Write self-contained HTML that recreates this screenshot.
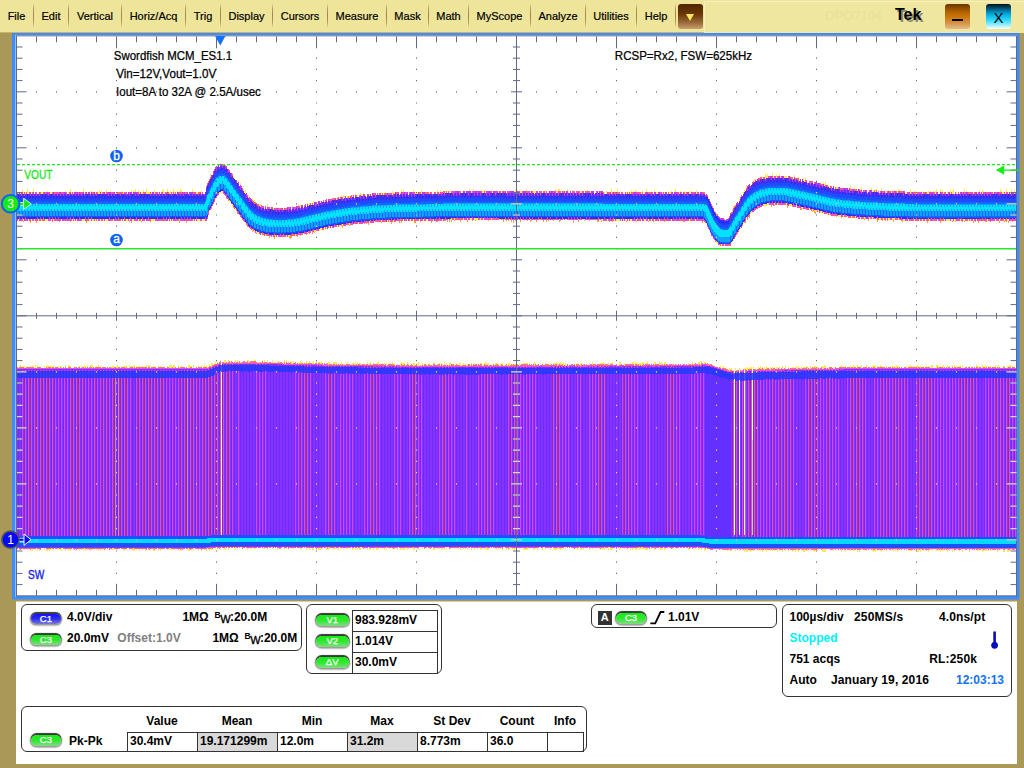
<!DOCTYPE html>
<html><head><meta charset="utf-8"><title>Tek DPO7104</title>
<style>
html,body{margin:0;padding:0}
body{width:1024px;height:768px;background:#A99858;position:relative;overflow:hidden;font-family:"Liberation Sans",sans-serif}
#menubar{position:absolute;left:0;top:0;width:1024px;height:32px;background:#EEE59B;border-bottom:1px solid #C9B36A;box-sizing:content-box}
.mi{position:absolute;top:0;height:32px;line-height:32px;font-size:11px;color:#000;text-align:center;white-space:nowrap;-webkit-text-stroke:0.2px #000}
.sep{position:absolute;top:3px;width:1px;height:25px;background:linear-gradient(#EEE59B,#B4945A 25%,#A8844A 50%,#B4945A 75%,#EEE59B)}
#ddbtn{position:absolute;left:678px;top:4px;width:25px;height:25px;border-radius:3px;background:linear-gradient(#4E2600,#6A3606 40%,#9A6A3A 75%,#C8A070)}
#ddbtn:after{content:"";position:absolute;left:8px;top:10px;border-left:4.5px solid transparent;border-right:4.5px solid transparent;border-top:7px solid #FFE860}
#right{position:absolute;left:704px;top:1px;width:320px;height:31px;background:#EFE7A0;border-left:1px solid #F6F0C0;border-top:1px solid #F6F0C0}
#dpo{position:absolute;left:825px;top:0;height:32px;line-height:32px;font-size:13px;color:#E9E098}
#tek{position:absolute;left:895px;top:0;height:30px;line-height:30px;font-size:16px;font-weight:bold;color:#000;text-shadow:2px 2px 0 #8E8A70}
#minb{position:absolute;left:945px;top:4px;width:25px;height:25px;border-radius:3px;background:linear-gradient(#6A3600,#B06000 30%,#C87408 50%,#D89850 80%,#E4BC8C)}
#minb:after{content:"";position:absolute;left:7px;top:15px;width:11px;height:2px;background:#000}
#clsb{position:absolute;left:986px;top:4px;width:25px;height:25px;border-radius:3px;background:linear-gradient(#00101C,#005C80 20%,#00A8DC 40%,#30DCFF 65%,#A0F0FF 85%,#fff);font-size:15px;line-height:27px;text-align:center;color:#000}
#plot{position:absolute;left:0;top:0}
#panel{position:absolute;left:16px;top:602px;width:1001px;height:162px;background:#fff;box-shadow:0 -0.5px 0 #fff}
.box{position:absolute;border:1px solid #333;border-radius:6px;box-sizing:border-box}
.t{position:absolute;font-size:12px;font-weight:bold;color:#000;white-space:nowrap;line-height:14px}
.pill{position:absolute;border-radius:6px;font-size:9.5px;color:#fff;-webkit-text-stroke:0.25px #fff;text-align:center;box-shadow:0 -1.7px 0.8px 0.2px #3a3a3a,0 0 1px 1.3px #999,0 1px 1.5px 1px #ccc}
.pg{background:linear-gradient(#10F010,#30E830 50%,#80DC80)}
.pb{background:linear-gradient(#1010FF,#3030F0 50%,#7878D0)}
.cell{position:absolute;border:1px solid #333;box-sizing:border-box;font-size:12px;font-weight:bold;padding-left:2px;white-space:nowrap}
</style></head><body>
<div id="menubar">
<div class="mi" style="left:0.0px;width:33.0px">File</div>
<div class="sep" style="left:33.0px"></div>
<div class="mi" style="left:34.0px;width:34.0px">Edit</div>
<div class="sep" style="left:68.0px"></div>
<div class="mi" style="left:69.0px;width:52.0px">Vertical</div>
<div class="sep" style="left:121.0px"></div>
<div class="mi" style="left:122.0px;width:63.0px">Horiz/Acq</div>
<div class="sep" style="left:185.0px"></div>
<div class="mi" style="left:186.0px;width:34.0px">Trig</div>
<div class="sep" style="left:220.0px"></div>
<div class="mi" style="left:221.0px;width:51.0px">Display</div>
<div class="sep" style="left:272.0px"></div>
<div class="mi" style="left:273.0px;width:54.0px">Cursors</div>
<div class="sep" style="left:327.0px"></div>
<div class="mi" style="left:328.0px;width:58.0px">Measure</div>
<div class="sep" style="left:386.0px"></div>
<div class="mi" style="left:387.0px;width:41.0px">Mask</div>
<div class="sep" style="left:428.0px"></div>
<div class="mi" style="left:429.0px;width:39.0px">Math</div>
<div class="sep" style="left:468.0px"></div>
<div class="mi" style="left:469.0px;width:61.0px">MyScope</div>
<div class="sep" style="left:530.0px"></div>
<div class="mi" style="left:531.0px;width:54.0px">Analyze</div>
<div class="sep" style="left:585.0px"></div>
<div class="mi" style="left:586.0px;width:50.0px">Utilities</div>
<div class="sep" style="left:636.0px"></div>
<div class="mi" style="left:637.0px;width:38.0px">Help</div>
<div class="sep" style="left:675.0px"></div>
<div id="ddbtn"></div>
<div id="right"></div>
<div id="dpo">DPO7104</div>
<div id="tek">Tek</div>
<div id="minb"></div>
<div id="clsb">X</div>
</div>
<svg id="plot" width="1024" height="768" viewBox="0 0 1024 768" font-family="Liberation Sans, sans-serif">
<rect x="12" y="33" width="1007.5" height="566.5" fill="#3E8CFF"/>
<rect x="15" y="35" width="1" height="562" fill="#8EBCFF"/>
<g shape-rendering="crispEdges">
<rect x="16" y="35" width="1001" height="561" fill="#fff"/>
<path d="M17,194h5v-4h1v4h4v-5h1v5h5v-5h1v5h13v-3h1v3h17v-3h1v3h4v-5h1v5h4v-3h1v3h7v-5h1v5h6v-3h2v3h7v-4h1v4h1v-3h1v3h4v-5h1v5h3v-3h1v3h11v-3h1v3h8v-4h1v4h1v-3h2v-2h1v5h2v-4h1v4h4v-4h1v4h2v-5h1v5h7v-4h1v4h7v-4h1v-1h1v5h3v-5h1v5h2v-3h1v3h2v-5h1v2h1v3h2v-4h1v4h1v-3h1v-2h1v1h1v4h10v-5h1v5h8v-3h1v3h3v-2h1v-4h1v-3h1v-2h1v-1h1v-8h1v3h1v-2h1v-2h1v-1h1v-2h1v-1h1v-1h1v-1h2v-4h1v3h1v-2h1v2h2v1h1v1h1v2h1v1h1v2h1v1h1v1h1v-2h1v5h1v1h1v2h1v1h1v2h1v-3h1v5h1v-3h1v6h1v1h1v2h1v1h1v-3h1v3h1v4h1v-2h1v2h1v4h1v1h1v-4h1v5h1v-3h1v5h1v1h2v1h2v-3h1v4h2v1h4v-5h1v6h8v-3h1v3h12v-3h1v3h2v-4h1v1h1v2h4v-5h1v5h1v-5h1v4h3v-1h3v-4h1v3h4v-1h1v-4h1v4h2v-1h4v-1h4v-1h2v-3h1v3h3v-1h6v-1h5v-5h1v4h1v-4h1v1h1v3h3v-1h7v-4h1v4h1v-1h3v-4h1v4h7v-1h5v-3h1v3h7v-3h1v3h2v-1h1v-3h1v3h6v-4h1v4h5v-3h1v3h2v-5h1v5h1v-5h1v5h2v-3h1v3h6v-5h1v5h4v-3h1v3h2v-5h1v4h15v-4h1v4h2v-4h1v4h3v-3h1v3h7v-3h1v3h16v-5h1v5h3v-5h1v5h7v-4h1v4h2v-4h1v4h6v-3h1v3h3v-3h1v-1h1v4h2v-3h1v3h3v-3h1v3h4v-3h1v3h4v-3h1v3h1v-4h1v-1h1v5h9v-5h1v5h6v-3h2v3h9v-3h1v-1h1v4h9v-5h1v1h1v1h1v-2h2v5h1v-3h1v3h5v-5h1v5h4v-4h1v4h14v-4h1v4h2v-3h1v3h15v-3h1v3h4v-5h1v5h2v-3h1v3h2v-5h1v5h13v-4h1v4h1v-3h1v3h1v-4h1v1h1v3h5v-3h1v3h3v-5h1v5h5v-2h1v2h1v-4h1v4h4v-3h1v3h4v-2h1v2h6v-3h1v3h2v-3h1v-2h1v5h4v-3h1v1h1v2h2v-3h1v3h4v-3h1v3h1v-3h1v3h4v-4h1v4h8v1h2v1h1v3h1v2h1v2h1v2h1v3h1v2h1v1h1v2h1v1h1v2h1v1h1v1h1v1h1v1h7v-1h1v-2h1v-1h1v-2h1v-5h1v-3h1v3h1v-2h1v-1h1v-2h1v-1h1v-2h1v-1h1v-2h1v-2h1v-2h1v-1h1v-1h1v-7h1v4h1v-1h1v-1h1v-1h1v-1h2v-1h1v-5h1v3h2v-1h2v-1h4v-1h2v-5h1v5h1v-5h1v4h4v-5h1v5h3v-3h1v3h2v-4h1v4h7v1h3v-3h1v3h1v1h2v-5h1v5h1v1h1v-3h1v-1h1v4h2v1h2v-4h1v4h1v-4h1v5h4v1h4v1h4v1h5v-4h1v5h1v-5h1v5h1v1h4v1h4v-2h1v3h8v1h6v-5h1v5h3v-4h1v5h6v-5h1v5h5v1h4v-5h1v5h4v-4h1v4h4v-5h1v5h3v-2h1v3h2v-4h1v4h5v-4h1v4h3v-4h1v-1h1v5h10v-5h1v5h3v-3h2v3h2v-2h1v2h3v-3h1v3h5v-3h1v3h1v-3h1v3h2v-3h1v3h1v-3h1v-2h1v5h3v-5h1v5h1v-4h1v4h7v-4h1v4h1v-3h1v-2h1v5h10v-5h1v5h1v-3h1v3h12v-4h1v4h2v-4h1v1h1v3h16v-5h1v2h1v3h4v-5h1v5h4v-5h1v5h2v-4h1v4h2V218h-133v-1h-19v-1h-13v-1h-10v-1h-9v-1h-4v-1h-4v-1h-4v-1h-5v-1h-4v-1h-4v-1h-4v-1h-5v-1h-5v-1h-4v-1h-5v-1h-15v1h-5v1h-4v1h-2v1h-2v1h-1v1h-1v1h-2v1h-1v1h-1v1h-1v1h-1v1h-1v2h-1v1h-1v1h-1v2h-1v2h-1v2h-1v1h-1v2h-1v1h-1v2h-1v1h-1v2h-1v2h-1v1h-1v2h-1v2h-1v2h-1v1h-1v2h-8v-1h-4v-1h-1v-1h-1v-2h-1v-1h-1v-1h-1v-2h-1v-2h-1v-2h-1v-2h-1v-2h-1v-3h-1v-2h-1v-2h-1v-2h-2v-1h-280v1h-37v1h-16v1h-11v1h-9v1h-6v1h-6v1h-6v1h-6v1h-4v1h-4v1h-4v1h-4v1h-4v1h-4v1h-7v1h-29v-1h-5v-1h-2v-1h-3v-1h-2v-1h-1v-1h-1v-1h-2v-1h-1v-1h-1v-1h-1v-2h-1v-1h-1v-1h-1v-1h-1v-2h-1v-1h-1v-2h-1v-1h-1v-1h-1v-2h-1v-1h-1v-1h-1v-2h-1v-1h-1v-2h-1v-1h-1v-1h-1v-2h-1v-1h-1v-1h-1v-2h-1v-1h-1v-2h-1v-1h-1v-1h-1v1h-2v1h-1v1h-1v1h-1v2h-1v1h-1v2h-1v2h-1v3h-1v2h-1v1h-1v2h-1v3h-1v4h-1v2h-190z" fill="#FFE64A"/>
<path d="M17,194h188v-2h1v-4h1v-3h1v-2h1v-1h1v-2h1v-3h1v-2h1v-2h1v-1h1v-2h1v-1h1v-1h1v-1h2v-1h5v1h1v1h1v2h1v1h1v2h1v1h1v1h1v2h1v1h1v1h1v2h1v1h1v2h1v1h1v1h1v2h1v1h1v1h1v2h1v1h1v2h1v1h1v1h1v1h1v2h1v1h1v1h1v1h2v1h1v1h1v1h2v1h3v1h2v1h5v1h25v-1h7v-1h4v-1h4v-1h4v-1h4v-1h4v-1h4v-1h6v-1h6v-1h6v-1h6v-1h9v-1h11v-1h16v-1h37v-1h284v1h2v1h1v3h1v2h1v2h1v2h1v3h1v2h1v1h1v2h1v1h1v2h1v1h1v1h1v1h1v1h7v-1h1v-2h1v-1h1v-2h1v-2h1v-1h1v-2h1v-2h1v-1h1v-2h1v-1h1v-2h1v-1h1v-2h1v-2h1v-2h1v-1h1v-1h1v-2h1v-1h1v-1h1v-1h1v-1h1v-1h2v-1h1v-1h1v-1h2v-1h2v-1h4v-1h5v-1h19v1h5v1h4v1h5v1h5v1h4v1h4v1h4v1h5v1h4v1h4v1h4v1h9v1h10v1h13v1h19v1h131V223h-1v-5h-3v4h-1v-4h-3v5h-1v-5h-1v4h-1v-4h-1v4h-1v-4h-4v5h-1v-5h-4v3h-1v-3h-3v4h-1v-4h-3v4h-2v-4h-6v5h-1v-2h-1v-3h-1v4h-1v-4h-1v5h-1v-5h-8v4h-1v-4h-1v4h-1v-4h-1v3h-1v-3h-3v3h-1v1h-1v-4h-2v4h-1v-4h-11v5h-1v-5h-6v3h-2v-3h-4v5h-1v-5h-7v3h-1v-3h-12v3h-1v-3h-1v3h-1v-3h-1v4h-1v-1h-1v-3h-7v4h-1v-4h-5v3h-1v-3h-1v3h-1v-3h-1v-1h-1v4h-1v-4h-4v5h-1v-5h-4v2h-1v-2h-3v4h-1v-4h-3v3h-1v-4h-12v-1h-10v3h-1v-4h-4v3h-1v-3h-3v-1h-1v3h-1v-3h-2v-1h-1v3h-1v-3h-2v-1h-4v2h-1v-3h-4v4h-1v-1h-1v-4h-1v3h-1v-4h-4v-1h-3v2h-1v-3h-2v4h-2v-4h-1v-1h-5v-1h-1v3h-1v-3h-2v-1h-2v5h-1v-5h-2v-1h-4v3h-1v-3h-5v4h-2v-4h-1v5h-1v-5h-1v1h-5v1h-4v1h-2v1h-2v1h-1v1h-1v1h-2v1h-1v1h-1v1h-1v6h-1v-4h-1v6h-1v-3h-1v6h-2v-1h-1v2h-1v1h-1v2h-1v1h-1v2h-1v1h-1v2h-1v2h-1v1h-1v2h-1v2h-1v2h-1v1h-1v2h-8v-1h-4v-1h-1v-1h-1v-2h-1v-1h-1v-1h-1v-2h-1v-2h-1v-2h-1v-2h-1v-2h-1v-3h-1v-2h-1v-2h-1v-2h-2v4h-1v-5h-5v3h-1v-3h-7v3h-1v-3h-1v3h-1v-3h-1v4h-2v-4h-4v3h-1v-3h-1v3h-1v-3h-5v3h-1v-3h-5v4h-1v-4h-3v3h-1v-3h-6v4h-1v-4h-4v4h-1v-4h-11v4h-1v-4h-2v3h-1v-3h-6v4h-1v-4h-11v3h-1v-3h-1v4h-1v-4h-2v4h-1v-4h-7v4h-1v-4h-2v4h-2v-4h-7v3h-1v-3h-4v3h-1v-3h-5v4h-1v-4h-4v5h-1v-5h-12v3h-1v1h-1v-4h-5v3h-1v-3h-4v3h-1v-3h-1v4h-1v-4h-2v4h-1v-4h-6v4h-1v-4h-4v3h-1v1h-1v-4h-2v3h-1v-3h-6v4h-1v-4h-4v3h-1v-3h-1v5h-1v-5h-1v4h-1v-4h-2v3h-1v-3h-1v3h-1v-3h-2v4h-1v-4h-2v2h-1v-2h-11v3h-1v-3h-12v3h-1v-3h-2v3h-1v-3h-3v2h-1v2h-1v-4h-6v4h-1v-4h-5v3h-1v-3h-2v4h-1v-4h-1v4h-1v-4h-1v4h-1v-4h-1v3h-1v-3h-1v3h-1v-3h-3v3h-1v-3h-1v4h-2v-1h-1v-3h-3v5h-1v-5h-5v3h-1v-3h-2v1h-2v3h-1v-3h-4v4h-2v-4h-12v4h-1v-4h-1v4h-1v-4h-7v5h-1v-5h-5v1h-4v3h-1v-3h-11v1h-1v4h-1v-4h-1v3h-1v-3h-1v3h-1v-3h-5v1h-9v4h-1v-3h-3v3h-2v-2h-1v4h-1v-4h-4v1h-6v1h-6v1h-4v1h-4v1h-3v4h-1v-3h-1v4h-1v-4h-2v4h-1v-3h-1v3h-1v1h-1v-3h-4v1h-1v3h-1v-3h-2v4h-1v-4h-2v1h-3v4h-1v1h-1v-1h-1v-4h-1v3h-1v-3h-12v5h-1v-5h-2v3h-1v-3h-1v4h-1v-4h-3v-1h-3v2h-1v-2h-1v-1h-2v-1h-2v3h-1v-4h-2v-1h-1v3h-1v-5h-2v-1h-1v-1h-1v2h-1v-5h-1v2h-1v-4h-1v-1h-1v-2h-1v-1h-1v-2h-1v-1h-1v-1h-1v2h-1v-5h-1v-1h-1v-2h-1v2h-1v-5h-1v-1h-1v-1h-1v-2h-1v2h-1v-4h-1v2h-1v-5h-1v-2h-1v-1h-1v-1h-1v1h-2v1h-1v1h-1v1h-1v2h-1v1h-1v2h-1v2h-1v3h-1v5h-1v-2h-1v2h-1v3h-1v4h-1v2h-7v3h-1v-3h-1v3h-1v-3h-5v3h-1v-3h-4v5h-1v-5h-4v3h-1v-3h-1v5h-1v-5h-24v3h-1v-3h-3v4h-1v-4h-2v3h-1v-3h-5v4h-1v-4h-9v5h-1v-5h-1v4h-1v-4h-16v3h-1v-3h-2v3h-1v-3h-22v5h-1v-5h-11v3h-1v-3h-2v3h-1v1h-1v-1h-1v-3h-2v3h-1v-3h-6v4h-1v-4h-6v4h-1v-4h-15v5h-1v-5h-2v3h-1v-3h-2v5h-1v-5h-6v4h-1v-4h-1v3h-1v-3h-4z" fill="#FF9A4A"/>
<path d="M17,194h1v-2h1v2h1v-2h1v2h2v-2h1v2h1v-2h1v2h1v-2h2v2h2v-2h1v2h6v-2h1v2h2v-2h2v2h7v-2h2v2h16v-2h1v2h2v-2h1v2h1v-2h1v2h13v-2h1v2h7v-2h1v2h2v-2h2v2h1v-2h1v2h3v-2h1v2h10v-2h1v2h6v-2h1v2h8v-2h1v2h6v-2h1v2h1v-2h2v2h3v-2h4v2h1v-2h1v2h2v-2h1v2h3v-2h1v2h4v-2h2v2h4v-2h1v2h2v-2h1v2h1v-2h1v2h21v-2h2v2h7v-2h1v-4h1v-3h1v-2h1v-1h1v-2h1v-3h1v-2h1v-2h1v-1h1v-2h1v-1h1v-4h1v2h2v-1h5v1h1v1h1v2h1v1h1v2h1v1h1v1h1v2h1v-1h1v1h1v4h1v1h1v-1h1v4h1v1h1v2h1v1h1v1h1v-1h1v2h1v4h1v1h1v1h1v1h1v2h1v1h1v1h1v1h2v1h1v1h1v1h2v1h1v-3h1v3h1v1h2v1h5v1h2v-3h1v3h2v-2h1v2h9v-2h1v2h9v-1h7v-1h4v-1h4v-3h1v-1h1v3h1v-3h1v2h1v-2h1v2h2v-1h1v-2h1v2h2v-3h1v2h3v-1h6v-1h6v-3h1v2h2v-3h1v3h2v-1h1v-2h1v2h3v-3h1v2h1v-2h1v2h2v-3h1v3h4v-3h1v2h3v-3h2v3h2v-3h1v3h2v-1h1v-2h1v2h1v-2h1v2h6v-3h1v3h2v-3h1v3h1v-3h1v2h8v-2h1v2h1v-3h1v3h5v-3h1v3h14v-3h3v3h3v-3h1v2h7v-2h1v2h9v-2h1v2h5v-3h1v3h1v-3h1v3h1v-3h2v3h11v-3h1v3h2v-3h1v3h5v-3h1v3h10v-3h2v3h1v-3h1v3h6v-3h1v3h5v-3h1v3h2v-3h1v3h12v-3h2v3h4v-3h2v3h8v-3h1v3h4v-3h1v3h9v-3h1v3h2v-3h1v3h7v-3h2v3h3v-3h1v3h3v-3h1v3h2v-3h1v3h11v-3h2v3h16v-3h1v3h5v-2h1v2h1v-2h1v2h19v-2h1v2h1v-2h1v2h1v-2h1v2h10v-2h1v2h2v-2h1v2h11v-2h2v2h4v-2h1v2h6v-2h2v2h8v-2h1v2h5v-2h1v2h3v-2h2v2h5v-2h1v2h8v1h2v2h2v4h1v2h1v3h1v2h1v2h1v2h1v1h2v3h1v1h1v1h1v1h1v1h7v-1h1v-1h1v-2h1v-2h1v-2h1v-1h1v-2h1v-2h1v-1h1v-2h1v-1h1v-4h1v1h1v-2h1v-2h1v-4h1v-2h1v-1h1v1h1v-1h1v-1h1v-1h1v-1h1v-1h2v-1h1v-1h1v-1h1v-3h1v2h2v-1h3v-3h1v2h3v-3h1v3h1v-1h5v-2h1v2h6v-2h1v2h3v-2h3v3h5v1h4v1h3v-2h1v2h1v1h3v-2h1v2h1v1h4v1h4v1h4v1h5v1h1v-3h1v3h2v1h1v-3h1v1h1v2h1v1h4v1h1v-3h2v3h6v1h4v-3h1v3h5v1h3v-3h1v3h9v1h1v-3h1v3h4v-3h1v3h1v-3h1v3h10v-2h1v3h4v-3h1v3h5v-3h1v3h7v-2h2v2h3v-2h1v2h16v-2h1v2h7v-2h1v2h3v-2h1v2h3v-2h1v2h3v-2h1v2h4v-2h1v2h3v-2h1v2h16v-2h1v2h3v-2h1v2h2v-2h1v2h1v-2h1v2h10v-2h1v2h8v-2h2v2h1v-2h1v2h2v-2h1v2h1v-2h1v2h3v-2h1v2h2V221h-1v-3h-7v3h-2v-3h-2v3h-1v-3h-4v3h-1v-3h-3v3h-1v-3h-7v3h-1v-3h-10v3h-1v-3h-2v3h-1v-3h-2v3h-1v-3h-1v3h-1v-3h-3v3h-2v-3h-2v3h-1v-3h-4v3h-2v-3h-1v3h-2v-3h-1v3h-4v-3h-1v3h-1v-3h-6v3h-1v-3h-7v3h-1v-3h-3v3h-1v-3h-2v3h-1v-3h-2v3h-1v-3h-4v3h-1v-3h-5v3h-1v-3h-3v3h-2v-3h-4v2h-1v-2h-3v2h-3v-2h-2v2h-2v-2h-1v2h-1v-2h-2v2h-1v-3h-2v3h-2v-3h-2v3h-1v-3h-3v2h-1v-2h-2v2h-1v-2h-4v2h-1v-3h-3v3h-1v-3h-2v2h-1v-2h-1v2h-1v-2h-3v2h-1v-3h-3v2h-1v-2h-3v2h-1v-2h-1v-1h-1v3h-3v-3h-5v-1h-3v2h-1v-3h-1v3h-1v-3h-2v-1h-1v3h-1v-3h-1v2h-2v-3h-1v2h-1v-2h-1v2h-2v-1h-1v-2h-1v2h-1v-3h-2v2h-1v-2h-1v-1h-4v-1h-1v3h-1v-1h-1v-2h-2v-1h-2v2h-1v-2h-2v-1h-2v2h-3v-3h-2v2h-1v-2h-1v-1h-7v3h-1v-3h-2v3h-1v-3h-4v1h-1v2h-2v1h-4v-2h-2v1h-2v1h-2v1h-1v1h-1v1h-2v1h-1v3h-1v1h-1v-1h-1v1h-1v2h-1v3h-1v-1h-1v2h-1v4h-2v1h-1v4h-1v2h-1v-1h-1v1h-1v2h-1v2h-1v1h-1v5h-1v1h-1v2h-1v-1h-1v1h-5v2h-1v-2h-2v2h-1v-2h-2v-1h-1v1h-1v-1h-1v-3h-1v-1h-1v-2h-2v-3h-1v-2h-1v-1h-1v-4h-1v-2h-1v-1h-1v-3h-1v-2h-2v-1h-7v3h-1v-3h-5v3h-1v-3h-17v3h-1v-3h-11v3h-1v-3h-4v3h-1v-3h-2v3h-1v-3h-2v3h-1v-3h-2v3h-2v-3h-2v3h-1v-3h-4v3h-1v-3h-4v3h-2v-3h-1v3h-1v-3h-1v3h-2v-3h-1v3h-1v-3h-1v3h-1v-3h-1v3h-4v-3h-1v3h-1v-3h-6v3h-1v-3h-4v3h-2v-3h-1v2h-1v-2h-14v2h-3v-2h-3v2h-1v-2h-11v2h-2v-2h-1v2h-1v-2h-3v2h-1v-2h-19v2h-1v-2h-8v2h-1v-2h-8v2h-1v-2h-2v2h-1v-2h-8v2h-1v-2h-4v2h-1v-2h-1v2h-1v-2h-1v2h-2v-2h-7v2h-1v-2h-7v2h-1v-2h-2v2h-1v-2h-2v2h-4v-2h-2v2h-2v-2h-2v2h-1v-2h-3v2h-1v-2h-8v2h-1v-2h-2v2h-2v-2h-1v2h-1v-2h-5v3h-1v-3h-8v3h-1v-3h-5v3h-2v-3h-2v3h-1v-2h-3v2h-1v-2h-5v2h-1v-2h-2v2h-1v-2h-2v2h-1v-2h-3v2h-1v-2h-9v3h-1v-3h-3v3h-1v-3h-1v3h-1v-3h-1v1h-4v2h-1v-2h-6v2h-1v-2h-4v3h-1v-2h-10v3h-1v-2h-8v3h-1v-2h-5v1h-1v2h-1v-2h-1v2h-1v1h-1v-3h-1v3h-1v-2h-5v3h-1v-2h-1v2h-1v-2h-2v3h-1v-2h-1v2h-1v-2h-2v3h-2v1h-1v-3h-1v1h-2v3h-2v-2h-2v2h-1v-2h-1v1h-2v2h-1v-2h-1v1h-2v2h-1v-2h-1v1h-6v3h-1v-2h-5v2h-1v1h-1v-3h-1v3h-1v-3h-8v3h-1v-3h-1v3h-1v-3h-2v3h-1v-3h-6v2h-1v-3h-3v2h-1v-3h-2v2h-1v-1h-2v-3h-1v2h-1v-3h-1v2h-1v-4h-2v-1h-1v-1h-1v-1h-1v-2h-1v2h-1v-4h-1v-1h-1v-2h-1v-1h-1v-2h-1v-1h-1v-1h-1v-2h-1v-1h-1v1h-1v-4h-1v-1h-1v1h-1v-4h-1v1h-1v-1h-1v-4h-1v-1h-1v-2h-1v-1h-1v-2h-1v-1h-1v2h-3v1h-1v-1h-1v1h-1v2h-1v4h-1v-1h-1v2h-1v3h-1v2h-1v1h-1v5h-2v4h-1v2h-2v3h-3v-3h-2v3h-3v-3h-1v3h-1v-3h-1v3h-1v-3h-13v3h-1v-3h-6v3h-1v-3h-1v3h-1v-3h-1v3h-1v-3h-13v3h-4v-3h-5v3h-1v-3h-3v3h-1v-3h-2v3h-1v-3h-4v3h-2v-3h-2v3h-1v-3h-1v3h-2v-3h-2v3h-1v-3h-1v3h-1v-3h-7v3h-1v-3h-5v3h-3v-3h-1v3h-1v-3h-2v3h-1v-3h-2v3h-1v-3h-1v3h-1v-3h-1v3h-2v-3h-1v3h-2v-3h-4v3h-3v-3h-5v3h-1v-3h-1v3h-1v-3h-1v3h-1v-3h-10v3h-1v-3h-7v3h-1v-3h-1v3h-1v-3h-3v3h-3v-3h-3v3h-1v-3h-2v3h-1v-3h-3v3h-1v-3h-2v3h-1v-3h-2v3h-1v-3h-4v3h-1v-3h-4v3h-1v-3h-1z" fill="#FFE64A"/>
<path d="M17,192h1v2h14v-2h1v2h7v-2h1v2h2v-2h1v2h1v-2h1v2h6v-2h1v2h2v-2h1v2h2v-2h1v2h2v-2h1v2h4v-2h1v2h11v-2h1v2h13v-2h1v2h4v-2h1v2h4v-2h1v2h8v-2h1v2h5v-2h3v2h2v-2h1v2h20v-2h2v2h10v-2h1v2h10v-2h1v2h1v-2h1v2h10v-2h1v2h1v-2h1v2h3v-2h2v2h6v-2h1v2h4v-2h2v2h5v-2h1v-4h1v-5h1v-2h1v-2h1v-2h2v-2h1v-2h1v-1h1v-2h1v-1h1v-1h1v-1h2v-1h3v-2h1v2h1v-1h1v3h1v2h1v1h1v2h1v1h1v1h1v-1h1v4h1v1h1v2h1v1h1v2h1v1h1v1h1v2h1v1h1v1h1v2h1v1h1v2h1v1h1v1h1v1h1v2h1v1h1v1h1v-2h1v1h1v1h2v4h1v-2h1v3h3v1h2v1h5v1h4v-3h1v3h2v-2h1v2h3v-2h1v2h5v-2h2v2h6v-1h7v-1h4v-3h1v2h3v-1h4v-3h1v2h3v-1h4v-1h3v-3h1v2h5v-3h1v2h2v-3h3v3h1v-1h4v-3h1v3h1v-1h6v-3h1v2h2v-3h1v3h4v-3h1v2h11v-1h6v-3h1v3h2v-3h1v3h2v-3h1v3h1v-3h1v3h1v-3h3v2h1v-2h1v2h1v-2h1v2h2v-2h1v2h3v-3h1v3h21v-3h2v2h4v-2h3v2h3v-2h1v2h3v-2h1v2h1v-2h1v2h5v-3h1v3h2v-3h1v3h4v-3h2v3h7v-3h1v3h20v-3h1v3h18v-3h1v3h1v-3h1v3h1v-3h1v3h11v-3h1v3h1v-3h1v3h3v-3h1v3h3v-3h1v3h5v-3h1v3h7v-3h2v3h1v-3h1v3h9v-3h1v3h6v-3h1v3h2v-3h1v3h8v-3h1v3h6v-3h1v3h3v-3h1v3h1v-3h2v3h1v-3h1v3h14v-2h1v2h5v-2h1v2h2v-2h1v2h1v-2h1v2h2v-2h3v2h2v-2h1v2h4v-2h1v2h3v-2h2v2h7v-2h1v2h1v-2h1v2h5v-2h3v2h17v-2h1v2h12v-2h1v2h2v-2h1v2h1v-2h1v2h7v-2h1v2h2v-2h1v2h5v-2h2v3h3v4h1v2h1v2h1v3h2v4h1v2h2v3h1v-1h1v3h1v1h2v2h3v-1h1v1h1v-1h1v1h1v-2h1v-2h2v-4h2v-1h1v-5h1v-1h1v1h1v-2h1v-1h1v-2h1v-1h1v-5h1v1h1v-2h1v-1h1v-1h1v-2h1v-1h1v-1h1v-1h1v-1h1v-1h1v-3h1v-1h1v2h1v-1h2v-1h2v-1h1v-3h2v3h1v-3h1v2h4v-3h1v2h8v-2h1v2h9v1h1v-3h1v3h2v-2h2v3h2v-2h1v3h1v-3h2v3h2v1h4v-2h1v3h4v-2h1v3h3v-2h1v3h3v1h2v-3h1v1h1v2h1v1h2v-2h1v2h1v-2h1v3h3v-2h1v3h3v-2h1v3h5v-2h1v2h2v1h6v-2h1v2h3v-2h3v3h3v-2h1v2h3v-2h1v2h2v1h7v-3h1v3h1v-3h1v3h6v-2h1v2h2v1h3v-3h1v3h2v-3h2v3h2v-3h1v3h1v-3h1v3h1v-3h3v3h8v-2h1v2h2v-2h2v2h1v-2h1v2h6v-2h1v2h1v-2h1v2h7v-2h1v2h9v-2h1v2h6v-2h1v2h10v-2h1v2h1v-2h1v2h3v-2h2v2h4v-2h1v2h11v-2h1v2h9v-2h1v2h3v-2h1v2h16V218h-10v3h-2v-3h-1v3h-2v-3h-1v3h-1v-3h-3v3h-1v-3h-6v3h-2v-3h-1v3h-1v-3h-2v3h-2v-3h-1v3h-2v-3h-9v3h-1v-3h-1v3h-3v-3h-6v3h-1v-3h-14v3h-4v-3h-4v3h-1v-3h-1v3h-1v-3h-4v3h-3v-3h-2v3h-1v-3h-1v3h-1v-3h-2v3h-1v-3h-1v3h-1v-3h-2v3h-1v-3h-2v3h-1v-3h-3v3h-1v-3h-8v2h-2v-2h-11v2h-1v-3h-1v3h-1v-3h-3v3h-1v-3h-3v2h-1v-2h-3v2h-1v-2h-4v2h-1v-3h-1v3h-3v-3h-7v2h-2v-3h-1v3h-1v-3h-1v3h-1v-3h-1v2h-2v-2h-3v-1h-5v2h-1v-2h-1v2h-2v-3h-4v2h-1v-3h-3v-1h-4v-1h-5v-1h-2v2h-1v-2h-1v2h-1v-1h-1v-2h-2v-1h-1v3h-1v-3h-2v-1h-5v-1h-5v-1h-1v2h-1v-2h-2v-1h-4v2h-2v-3h-4v3h-1v-3h-2v3h-1v-3h-4v3h-1v-3h-1v1h-5v1h-4v1h-2v3h-1v-2h-1v3h-1v-1h-1v3h-1v-2h-1v1h-1v1h-1v1h-1v4h-1v1h-1v-1h-1v1h-1v1h-1v2h-1v2h-1v4h-1v-1h-1v2h-1v1h-1v4h-1v2h-1v-1h-1v4h-1v-1h-1v2h-1v2h-1v2h-1v1h-1v3h-2v-2h-7v2h-1v-2h-1v-1h-1v-1h-1v-1h-1v1h-1v-3h-1v-2h-1v-1h-1v-2h-1v-2h-1v-2h-1v-3h-1v-2h-1v-2h-2v-4h-2v-1h-2v3h-1v-3h-8v3h-2v-3h-1v3h-1v-3h-4v3h-1v-3h-1v3h-2v-3h-4v3h-1v-3h-4v3h-1v-3h-4v3h-2v-3h-2v3h-1v-3h-3v3h-1v-3h-1v3h-1v-3h-1v3h-1v-3h-3v3h-1v-3h-9v3h-1v-3h-25v3h-2v-3h-3v3h-1v-3h-1v3h-1v-3h-9v2h-5v-2h-3v2h-1v-2h-7v2h-1v-2h-15v2h-1v-2h-8v2h-3v-2h-3v2h-4v-2h-1v2h-1v-2h-2v2h-2v-2h-2v2h-3v-2h-1v2h-1v-2h-4v2h-2v-2h-1v2h-1v-2h-8v2h-2v-2h-3v2h-1v-2h-3v2h-3v-2h-1v2h-1v-2h-1v2h-1v-2h-2v2h-1v-2h-2v2h-1v-2h-1v2h-1v-2h-13v2h-1v-2h-18v2h-1v-2h-2v2h-3v-2h-1v2h-1v-2h-3v2h-1v-2h-1v2h-2v-2h-1v3h-1v-3h-3v3h-2v-3h-3v3h-1v-3h-3v3h-1v-3h-5v3h-1v-3h-2v3h-1v-2h-3v2h-2v-2h-1v2h-2v-2h-1v2h-2v-2h-1v2h-1v-2h-3v2h-1v-2h-3v2h-2v-2h-2v2h-1v-2h-1v3h-1v-3h-2v3h-1v-3h-3v3h-1v-3h-2v3h-2v-2h-5v2h-1v-2h-1v2h-2v-2h-4v3h-1v-2h-2v2h-2v-2h-7v1h-1v2h-1v-2h-2v2h-1v-2h-2v3h-1v-3h-1v1h-1v2h-1v-2h-1v2h-1v-2h-2v3h-1v-2h-1v2h-1v-2h-3v1h-1v2h-1v-2h-3v3h-1v-2h-6v3h-1v-2h-1v3h-2v-2h-4v1h-1v2h-1v-2h-2v1h-1v2h-1v-2h-2v1h-1v2h-1v-2h-2v1h-3v3h-2v-2h-3v3h-2v-3h-1v1h-1v2h-2v-2h-1v2h-1v-2h-5v3h-3v-3h-7v3h-1v-3h-2v3h-1v-3h-1v2h-1v-2h-1v2h-2v-3h-2v2h-2v-2h-1v-1h-2v-1h-3v-1h-2v-1h-1v-1h-1v2h-1v-3h-1v1h-1v-3h-1v1h-1v-1h-1v-4h-1v-1h-1v-1h-1v1h-1v-4h-1v1h-1v-2h-1v-3h-1v1h-1v-2h-1v-3h-1v1h-1v-2h-1v-4h-1v-1h-1v-1h-1v-2h-1v1h-1v-3h-1v-2h-1v-1h-1v-2h-1v-1h-1v-1h-1v1h-2v1h-1v1h-1v1h-1v2h-1v1h-1v2h-1v2h-1v3h-1v4h-1v-1h-1v2h-1v3h-1v4h-1v2h-5v3h-1v-3h-8v3h-1v-3h-2v3h-1v-3h-3v3h-1v-3h-6v3h-1v-3h-1v3h-1v-3h-4v3h-1v-3h-5v3h-2v-3h-1v3h-1v-3h-1v3h-1v-3h-4v3h-1v-3h-4v3h-1v-3h-1v3h-1v-3h-7v3h-2v-3h-3v3h-1v-3h-9v3h-2v-3h-5v3h-1v-3h-1v3h-1v-3h-3v3h-2v-3h-8v3h-1v-3h-5v3h-1v-3h-1v3h-1v-3h-6v3h-2v-3h-4v3h-1v-3h-9v3h-1v-3h-1v3h-1v-3h-2v3h-1v-3h-1v3h-1v-3h-7v3h-1v-3h-1v3h-1v-3h-9v3h-3v-3h-2v3h-1v-3h-2v3h-1v-3h-3v3h-1v-3h-6v3h-1v-3h-8z" fill="#FF6A5A"/>
<path d="M17,194h4v-2h2v2h1v-2h1v2h1v-2h1v2h2v-2h1v2h5v-2h2v2h9v-2h1v2h1v-2h2v2h4v-2h1v2h1v-2h2v2h4v-2h2v2h5v-2h1v2h2v-2h1v2h3v-2h1v2h3v-2h3v2h2v-2h1v2h7v-2h1v2h2v-2h1v2h6v-2h1v2h2v-2h2v2h4v-2h2v2h6v-2h2v2h2v-2h3v2h2v-2h1v2h7v-2h2v2h6v-2h1v2h4v-2h1v2h5v-2h2v2h3v-2h2v2h2v-2h1v2h5v-2h1v2h1v-2h1v2h1v-2h1v2h4v-2h1v2h2v-2h1v2h10v-2h2v2h6v-2h1v2h2v-2h1v-6h1v-1h1v-2h1v-1h1v-2h1v-3h1v-2h1v-2h1v-4h1v1h1v-1h1v-1h1v-1h2v-1h2v-2h1v2h2v1h1v1h1v2h1v-1h1v1h1v4h1v1h1v2h1v1h1v1h1v2h1v1h1v2h1v1h1v1h1v2h1v-2h1v2h1v4h1v1h1v2h1v1h1v-1h1v3h1v-1h1v4h1v1h1v1h2v1h1v1h1v-2h1v3h1v-2h1v3h2v-2h1v1h2v3h1v-3h1v3h1v-2h3v3h1v-3h1v3h4v-2h1v2h1v-2h1v2h1v-2h2v2h2v-2h1v2h3v-3h2v3h2v-3h1v2h1v-2h2v2h1v-3h3v2h4v-1h1v-3h1v3h2v-1h2v-3h1v3h1v-1h4v-1h4v-1h4v-1h1v-2h1v-1h1v3h3v-3h2v2h4v-1h1v-2h1v-1h1v3h3v-3h1v2h5v-1h5v-3h1v3h3v-1h2v-2h1v2h4v-3h1v3h3v-1h5v-3h1v3h1v-3h1v3h3v-3h1v3h4v-1h5v-2h1v2h1v-2h1v2h4v-3h1v3h1v-3h1v3h3v-3h2v3h1v-3h2v3h2v-3h1v3h3v-3h2v3h6v-1h7v-2h1v2h1v-2h1v2h3v-2h1v2h3v-2h1v2h1v-2h3v2h1v-3h1v3h3v-3h1v3h4v-3h2v3h4v-3h1v3h12v-3h2v3h3v-3h1v3h6v-3h1v3h2v-3h1v3h3v-3h1v3h3v-3h2v3h10v-3h3v3h9v-3h1v3h7v-3h3v3h6v-3h1v3h2v-3h1v3h4v-3h1v3h1v-3h1v3h3v-3h1v3h4v-3h1v3h2v-3h2v3h2v-3h1v3h10v-3h2v3h1v-3h3v3h8v-3h1v3h1v-3h1v3h6v-3h1v3h3v-3h1v3h6v-2h2v2h6v-2h2v2h4v-2h1v2h3v-2h1v2h3v-2h1v2h3v-2h1v2h2v-2h4v2h5v-2h1v2h5v-2h2v2h7v-2h2v2h1v-2h1v2h7v-2h1v2h5v-2h2v2h12v-2h3v2h4v-2h1v2h3v-2h1v2h2v1h2v2h1v2h2v4h1v1h1v4h1v2h1v2h1v1h1v2h1v1h2v2h1v1h1v1h2v-2h1v2h4v-1h1v-1h1v-2h1v-2h1v-2h1v-4h1v1h1v-2h1v-4h1v1h1v-1h1v-2h1v-4h1v1h1v-2h1v-2h1v-1h1v-1h1v-4h1v1h1v-1h1v-1h1v-1h1v-1h2v-1h1v-1h1v-1h2v-1h1v-3h2v2h3v-1h1v-2h1v2h3v-1h1v-2h1v2h2v-2h1v2h1v-2h2v2h2v-2h1v2h2v-2h1v2h5v1h5v1h4v1h5v1h5v-2h1v3h2v-2h1v3h1v-3h2v3h1v1h4v1h4v-2h1v3h4v1h3v-2h1v3h4v1h3v-3h1v3h1v-2h1v2h1v-2h1v2h1v1h7v-2h2v2h1v1h5v-3h1v3h1v-2h1v2h1v-2h1v2h3v1h2v-3h1v3h8v-2h1v2h1v-2h1v2h1v-2h1v2h3v1h1v-3h1v3h2v-3h1v3h3v-3h1v3h9v-3h1v3h2v-2h2v2h4v-2h1v2h4v-2h3v2h2v-2h1v2h5v-2h1v2h1v-2h1v2h1v-2h1v2h2v-2h1v2h4v-2h2v2h2v-2h1v2h2v-2h1v2h6v-2h1v2h2v-2h1v2h6v-2h1v2h4v-2h3v2h5v-2h1v2h4v-2h2v2h2v-2h3v2h1v-2h2v2h2v-2h1v2h3v-2h1v2h1v-2h1v2h2v-2h1v2h1v-2h2v2h5v-2h1v2h1v-2h2V218h-1v3h-6v-3h-8v3h-1v-3h-2v3h-2v-3h-2v3h-4v-3h-5v3h-2v-3h-2v3h-1v-3h-2v3h-2v-3h-1v3h-2v-3h-1v3h-2v-3h-8v3h-2v-3h-1v3h-1v-3h-1v3h-2v-3h-2v3h-1v-3h-2v3h-1v-3h-10v3h-2v-3h-1v3h-1v-3h-1v3h-1v-3h-1v3h-3v-3h-5v3h-1v-3h-3v3h-1v-3h-2v3h-1v-3h-1v3h-1v-3h-2v3h-2v-3h-1v3h-1v-3h-1v3h-1v-3h-1v3h-1v-3h-2v2h-4v-2h-3v2h-1v-2h-3v2h-2v-2h-2v2h-1v-2h-1v2h-1v-2h-1v-1h-2v3h-1v-3h-3v3h-1v-3h-3v2h-1v-2h-1v2h-1v-2h-2v2h-1v-2h-3v-1h-5v3h-2v-3h-3v2h-1v-2h-2v-1h-2v3h-1v-3h-4v2h-1v-2h-1v2h-2v-3h-3v2h-1v-2h-1v2h-1v-2h-2v2h-2v-1h-1v-2h-1v-1h-2v2h-3v-3h-1v2h-1v-2h-1v-1h-1v3h-1v-3h-1v2h-1v-2h-1v-1h-4v-1h-3v2h-2v-3h-1v2h-3v-3h-3v2h-3v-3h-1v2h-3v-3h-3v-1h-5v-1h-1v3h-4v-3h-1v3h-1v-3h-2v3h-1v-3h-1v3h-2v-3h-1v3h-2v-2h-4v1h-3v3h-2v1h-1v-2h-1v3h-1v-2h-1v3h-1v-1h-1v3h-1v-2h-1v1h-1v1h-1v1h-1v1h-1v4h-1v-1h-1v4h-1v1h-2v2h-1v1h-1v2h-1v1h-1v2h-1v1h-1v4h-2v4h-1v-1h-1v2h-1v2h-1v4h-1v-2h-2v2h-3v-2h-1v2h-2v-2h-2v1h-2v-3h-1v-1h-1v-1h-2v-1h-1v-3h-2v-3h-1v-3h-1v-1h-1v-2h-1v-4h-1v-2h-1v1h-1v-1h-3v-3h-1v3h-4v-3h-1v3h-3v-3h-4v3h-4v-3h-1v3h-1v-3h-2v3h-2v-3h-1v3h-1v-3h-1v3h-2v-3h-3v3h-4v-3h-2v3h-2v-3h-1v3h-1v-3h-1v3h-1v-3h-1v3h-1v-3h-3v3h-1v-3h-1v3h-1v-3h-2v3h-2v-3h-2v3h-1v-3h-2v3h-1v-3h-1v3h-2v-3h-1v3h-4v-3h-2v3h-1v-3h-1v3h-1v-3h-2v3h-1v-3h-3v3h-1v-3h-4v3h-1v-3h-4v3h-2v-3h-3v3h-3v-3h-2v2h-1v-2h-1v2h-2v-2h-5v2h-3v-2h-1v2h-3v-2h-3v2h-1v-2h-1v2h-1v-2h-1v2h-11v-2h-4v2h-3v-2h-1v2h-3v-2h-3v2h-2v-2h-5v2h-1v-2h-1v2h-2v-2h-3v2h-1v-2h-3v2h-1v-2h-1v2h-2v-2h-1v2h-1v-2h-4v2h-3v-2h-1v2h-2v-2h-4v2h-3v-2h-1v2h-1v-2h-1v2h-1v-2h-10v2h-2v-2h-1v2h-1v-2h-1v2h-1v-2h-1v2h-7v-2h-1v2h-2v-2h-2v2h-1v-2h-4v2h-2v-2h-2v2h-2v-2h-1v2h-3v-2h-1v2h-2v-2h-1v2h-2v-2h-5v2h-1v-2h-6v2h-1v-2h-1v3h-1v-3h-1v3h-1v-3h-2v3h-3v-3h-3v3h-1v-3h-1v3h-3v-3h-3v3h-1v-3h-1v1h-1v2h-2v-2h-3v2h-1v-2h-9v2h-1v-2h-1v2h-1v-2h-1v2h-1v-2h-2v2h-2v-2h-1v2h-1v-2h-1v3h-1v-3h-2v3h-2v-3h-4v1h-2v2h-2v-2h-1v2h-2v-2h-1v2h-1v-2h-3v3h-3v-3h-1v1h-1v2h-1v-2h-2v2h-3v1h-4v-2h-2v2h-2v-2h-1v2h-1v1h-1v-3h-1v3h-1v-2h-2v2h-1v-2h-1v3h-2v-2h-5v3h-1v-2h-2v2h-2v-2h-2v1h-3v2h-1v-2h-2v1h-4v1h-3v3h-2v-2h-3v3h-1v-2h-2v3h-2v-2h-2v3h-3v-2h-2v1h-1v2h-3v-2h-3v3h-1v-2h-2v2h-1v-2h-3v3h-1v-3h-1v3h-1v-3h-3v3h-4v-3h-1v3h-1v-3h-2v3h-1v-3h-2v2h-1v-2h-1v2h-1v-2h-2v-1h-1v3h-1v-3h-3v-1h-1v2h-1v-3h-3v2h-1v-3h-1v1h-1v-3h-1v-1h-1v2h-1v-3h-1v1h-1v-3h-1v-2h-1v-1h-1v1h-1v-1h-1v-4h-1v-1h-1v-2h-1v-1h-1v1h-1v-4h-1v-1h-1v-1h-1v-2h-1v-1h-1v-2h-1v1h-1v-3h-1v-2h-1v-1h-1v1h-1v-1h-1v-2h-1v-1h-1v-1h-1v-4h-1v1h-2v1h-1v3h-1v1h-1v2h-1v-1h-1v5h-1v2h-1v2h-2v4h-1v-1h-1v6h-1v4h-1v2h-2v-3h-4v3h-1v-3h-3v3h-1v-3h-1v3h-1v-3h-2v3h-2v-3h-1v3h-3v-3h-2v3h-4v-3h-2v3h-1v-3h-1v3h-3v-3h-3v3h-1v-3h-2v3h-1v-3h-2v3h-1v-3h-1v3h-1v-3h-1v3h-4v-3h-6v3h-1v-3h-1v3h-2v-3h-1v3h-3v-3h-4v3h-2v-3h-1v3h-1v-3h-2v3h-2v-3h-1v3h-1v-3h-5v3h-1v-3h-1v3h-2v-3h-1v3h-1v-3h-1v3h-2v-3h-3v3h-3v-3h-3v3h-1v-3h-2v3h-1v-3h-1v3h-2v-3h-6v3h-1v-3h-2v3h-1v-3h-2v3h-1v-3h-4v3h-2v-3h-1v3h-1v-3h-1v3h-1v-3h-1v3h-1v-3h-2v3h-1v-3h-1v3h-1v-3h-2v3h-1v-3h-1v3h-1v-3h-2v3h-4v-3h-1v3h-1v-3h-2v3h-1v-3h-1v3h-3v-3h-7v3h-1v-3h-2v3h-1v-3h-1v3h-1v-3h-1v3h-1v-3h-2v3h-2v-3h-1v3h-2v-3h-3v3h-2v-3h-1v3h-1v-3h-1v3h-1z" fill="#F844C8"/>
<path d="M17,194h2v-2h1v2h10v-2h1v2h2v-2h1v2h5v-2h1v2h4v-2h1v2h2v-2h1v2h5v-2h1v2h5v-2h2v2h3v-2h2v2h4v-2h1v2h3v-2h2v2h1v-2h1v2h1v-2h1v2h3v-2h1v2h2v-2h1v2h1v-2h2v2h1v-2h1v2h2v-2h1v2h5v-2h1v2h3v-2h1v2h3v-2h3v2h3v-2h1v2h13v-2h1v2h1v-2h2v2h1v-2h4v2h3v-2h1v2h11v-2h2v2h5v-2h1v2h7v-2h1v2h9v-2h2v2h3v-2h1v2h1v-2h1v2h2v-2h1v2h1v-2h4v2h7v-2h1v2h4v-2h1v-4h1v-3h1v-2h1v-1h1v-2h1v-5h2v-4h1v1h1v-5h1v-1h1v2h1v-4h1v3h1v-3h2v2h2v-2h1v3h1v-1h1v4h1v1h1v2h1v1h1v-1h1v4h1v1h1v1h1v2h1v-1h1v4h1v-2h1v4h1v-1h1v4h1v1h1v2h1v1h1v2h1v-2h1v4h1v1h1v2h1v-2h1v1h1v4h2v1h1v1h1v1h2v1h3v1h2v1h5v1h6v-2h1v2h2v-2h1v2h4v-2h1v2h4v-3h1v3h2v-3h1v3h2v-3h1v2h2v-3h1v3h3v-1h1v-3h2v3h1v-1h3v-3h1v2h4v-1h2v-3h3v2h1v-3h2v2h1v-2h1v2h2v-1h4v-3h1v3h1v-1h5v-3h1v2h5v-3h1v2h3v-3h1v3h2v-1h2v-2h1v2h4v-3h1v3h1v-1h3v-2h1v2h2v-3h1v3h3v-3h2v2h1v-2h1v2h1v-3h1v3h11v-1h3v-2h1v2h7v-3h1v3h5v-3h1v3h2v-3h1v3h2v-3h1v3h2v-3h3v3h5v-3h1v3h2v-1h1v-2h3v2h30v-3h4v3h4v-3h2v3h1v-3h5v3h3v-3h3v3h1v-3h3v3h5v-3h1v3h1v-3h3v3h2v-3h2v3h2v-3h1v3h1v-3h1v3h3v-3h1v3h1v-3h1v3h4v-3h4v3h3v-3h1v3h5v-3h3v3h5v-3h1v3h5v-3h1v3h11v-3h1v3h1v-3h2v3h1v-3h1v3h9v-3h1v3h1v-3h2v3h2v-3h1v3h11v-3h1v3h8v-3h3v3h3v-3h1v3h1v-3h1v3h1v-3h2v3h7v-2h1v2h2v-2h1v2h20v-2h2v2h10v-2h2v2h6v-2h2v2h2v-2h2v2h5v-2h2v2h5v-2h1v2h1v-2h3v2h3v-2h1v2h2v-2h1v2h3v-2h2v2h6v-2h1v2h4v-2h2v2h3v1h1v-1h1v3h1v2h1v2h1v1h1v4h1v2h2v4h1v1h1v2h1v1h1v1h2v2h1v-1h2v2h4v-1h2v-1h1v-5h1v1h1v-2h1v-1h1v-2h1v-2h1v-1h1v-4h1v1h1v-2h1v-1h1v-2h1v-2h1v-2h1v-1h1v-1h1v-2h1v-4h1v-1h1v-1h1v2h1v-1h2v-1h1v-1h1v-3h1v2h1v-3h1v2h1v-1h4v-1h5v-1h2v-2h2v2h7v-2h1v2h2v-2h2v2h3v1h2v-3h1v1h1v2h1v1h2v-3h1v3h1v-2h1v3h3v-2h1v3h1v-3h1v3h3v1h4v1h4v1h1v-3h2v1h3v3h3v-2h1v3h2v-2h1v3h4v1h2v-3h1v3h1v1h4v-3h1v3h3v-2h5v3h1v-3h1v3h3v-2h1v3h4v-3h1v3h6v-2h2v3h3v-3h2v3h9v-2h1v2h2v-2h1v2h1v1h2v-3h1v3h6v-3h1v3h3v-3h1v3h3v-3h1v3h5v-2h1v2h2v-2h1v2h8v-2h1v2h3v-2h1v2h4v-2h1v2h1v-2h1v2h4v-2h1v2h2v-2h1v2h8v-2h1v2h10v-2h2v2h1v-2h1v2h2v-2h2v2h7v-2h2v2h2v-2h1v2h1v-2h1v2h3v-2h1v2h4v-2h1v2h3v-2h1v2h2v-2h2v2h10v-2h1v2h1v-2h2v2h4V218h-7v3h-1v-3h-18v3h-1v-3h-44v3h-1v-3h-61v-1h-8v2h-1v-2h-7v2h-2v-2h-1v-1h-8v2h-1v-2h-4v-1h-10v-1h-9v-1h-4v-1h-4v-1h-4v-1h-5v-1h-4v-1h-4v-1h-4v-1h-3v2h-1v-2h-1v-1h-5v-1h-4v-1h-1v3h-1v-1h-1v-2h-2v-1h-15v1h-5v1h-2v2h-1v-2h-1v1h-2v1h-2v1h-1v1h-1v1h-2v3h-1v-1h-1v1h-1v1h-1v1h-1v2h-1v1h-1v1h-1v2h-1v2h-1v2h-1v4h-1v-1h-1v1h-1v2h-1v1h-1v2h-1v2h-1v1h-1v2h-1v2h-1v2h-1v1h-1v1h-11v-1h-1v-1h-1v-1h-1v-1h-1v-1h-1v-2h-1v-1h-1v-2h-1v-2h-1v-2h-1v-3h-1v-2h-1v-2h-1v-2h-1v-2h-2v-1h-25v3h-1v-3h-4v3h-1v-3h-29v3h-1v-3h-19v3h-1v-3h-10v3h-1v-3h-60v2h-1v-2h-23v2h-1v-2h-8v2h-1v-2h-82v3h-1v-3h-11v1h-14v2h-1v-2h-21v3h-1v-2h-16v1h-11v1h-9v1h-6v1h-6v1h-4v3h-1v-3h-1v1h-1v2h-1v-2h-2v3h-1v-3h-1v1h-4v1h-4v1h-4v1h-4v1h-4v1h-4v1h-7v1h-29v-1h-5v2h-1v-3h-1v-1h-3v-1h-2v-1h-1v-1h-1v-1h-2v-1h-1v-1h-1v-1h-1v-2h-1v-1h-1v-1h-1v-1h-1v-2h-1v1h-1v-4h-1v-1h-1v-1h-1v-2h-1v-1h-1v-1h-1v-2h-1v-1h-1v-2h-1v-1h-1v-1h-1v-2h-1v-1h-1v-1h-1v-2h-1v-1h-1v-2h-1v-1h-1v-1h-1v1h-2v1h-1v1h-1v1h-1v2h-1v1h-1v2h-1v2h-1v3h-1v2h-1v1h-1v2h-1v3h-1v4h-1v2h-22v3h-1v-3h-16v3h-1v-3h-88v3h-1v-3h-10v3h-1v-3h-4v3h-1v-3h-37v3h-1v-3h-3v3h-1v-3h-3z" fill="#B43CF4"/>
<path d="M17,194h4v2h1v-2h2v2h1v-2h5v2h1v-2h2v2h1v-2h2v2h1v-2h2v2h1v-2h8v2h1v-2h5v2h1v-2h2v2h1v-2h2v2h1v-2h2v2h1v-2h2v2h1v-2h2v2h1v-2h2v2h1v-2h2v2h1v-2h2v2h1v-2h2v2h1v-2h2v2h1v-2h5v2h1v-2h2v2h1v-2h2v2h1v-2h11v2h1v-2h2v2h1v-2h2v2h1v-2h5v2h1v-2h5v2h1v-2h2v2h1v-2h5v2h1v-2h2v2h1v-2h11v2h1v-2h2v2h1v-2h2v2h1v-2h2v2h1v-2h2v2h1v-2h2v2h1v-2h5v2h1v-2h5v2h1v-2h2v2h1v-2h2v2h1v-2h5v2h1v-2h2v2h1v-2h2v2h1v-2h2v2h1v-2h2v2h1v-2h2v2h1v-4h1v-4h1v-3h1v-2h1v-2h1v-2h1v-2h1v-2h2v-4h1v-2h1v2h1v-4h1v-1h1v3h1v-3h2v2h1v-2h2v3h1v-1h1v1h1v4h1v-1h1v1h1v4h1v-1h1v2h1v1h1v1h1v2h1v1h1v1h1v2h1v4h1v-2h1v2h1v1h1v2h1v1h1v4h1v-1h1v1h1v4h1v-2h1v1h1v1h1v1h1v1h2v1h1v1h1v3h1v-3h1v1h1v3h1v-2h2v3h1v-3h1v1h1v2h1v-2h5v1h3v2h1v-2h2v2h1v-2h2v2h1v-2h4v-1h1v3h1v-3h2v3h1v-3h2v2h1v-2h1v-1h1v3h1v-3h2v2h1v-3h2v3h1v-3h1v-1h1v3h1v-3h2v-1h5v-1h1v3h1v-3h2v2h1v-3h2v2h1v-3h2v2h1v-2h1v-1h1v3h1v-3h2v2h1v-2h1v-1h6v-1h4v2h1v-2h1v-1h1v3h1v-3h2v2h1v-2h2v2h1v-3h2v3h1v-3h5v2h1v-3h2v3h1v-3h2v3h1v-3h5v2h1v-3h2v3h1v-3h11v2h1v-2h5v2h1v-3h2v3h1v-3h2v3h1v-3h2v3h1v-3h2v3h1v-3h2v3h1v-3h2v3h1v-3h2v3h1v-3h8v2h1v-2h8v2h1v-2h5v2h1v-2h2v2h1v-2h1v-1h1v3h1v-3h8v3h1v-3h2v3h1v-3h2v3h1v-3h8v3h1v-3h5v3h1v-3h2v3h1v-3h2v3h1v-3h5v3h1v-3h2v3h1v-3h5v3h1v-3h11v3h1v-3h2v3h1v-3h2v3h1v-3h2v3h1v-3h2v3h1v-3h2v3h1v-3h2v3h1v-3h2v3h1v-3h2v3h1v-3h2v3h1v-3h2v3h1v-3h2v3h1v-3h5v3h1v-3h2v3h1v-3h2v3h1v-3h2v3h1v-3h2v3h1v-3h5v3h1v-3h2v3h1v-3h2v3h1v-3h2v3h1v-3h2v3h1v-3h2v3h1v-3h2v3h1v-3h8v3h1v-3h2v3h1v-3h2v3h1v-3h2v3h1v-3h2v3h1v-2h5v2h1v-2h2v2h1v-2h2v2h1v-2h5v2h1v-2h2v2h1v-2h8v2h1v-2h2v2h1v-2h2v2h1v-2h2v2h1v-2h2v2h1v-2h5v2h1v-2h2v2h1v-2h5v2h1v-2h2v2h1v-2h2v2h1v-2h5v2h1v-2h2v2h1v-2h2v2h1v-2h5v2h1v-2h2v2h1v-2h5v2h1v-2h5v2h1v-2h2v2h1v-2h2v3h1v-1h1v1h1v2h1v2h1v3h1v2h1v2h1v2h1v2h1v2h1v1h1v1h1v2h1v1h1v1h4v1h4v-1h1v-2h1v-3h1v-1h2v-4h1v-2h1v-1h1v-2h1v-1h1v1h1v-4h1v-2h1v-2h1v-1h1v-2h1v-2h1v-1h1v-1h1v1h1v-4h1v-1h1v2h1v-3h1v-1h1v-1h1v-1h2v-1h2v-1h1v2h1v-3h5v2h1v-3h5v2h1v-2h2v2h1v-2h8v2h1v-2h5v3h1v-2h2v3h1v-3h2v3h1v-2h2v3h1v-2h2v3h1v-3h2v1h3v3h1v-2h2v3h1v-3h2v3h1v-2h2v3h1v-2h2v3h1v-3h1v1h1v2h1v-2h2v1h4v1h2v3h1v-3h2v3h1v-2h5v3h1v-2h2v2h1v-2h2v3h1v-3h2v3h1v-2h2v2h1v-2h5v3h1v-3h1v1h1v2h1v-2h5v3h1v-3h2v3h1v-3h7v1h1v2h1v-2h2v2h1v-2h2v2h1v-2h2v3h1v-3h5v3h1v-3h8v3h1v-3h1v1h4v2h1v-2h2v2h1v-2h2v2h1v-2h2v2h1v-2h2v2h1v-2h8v2h1v-2h2v2h1v-2h2v2h1v-2h5v2h1v-2h2v2h1v-2h2v2h1v-2h5v2h1v-2h2v2h1v-2h2v2h1v-2h2v2h1v-2h2v2h1v-2h5v2h1v-2h2v2h1v-2h2v2h1v-2h2v2h1v-2h2v2h1v-2h2v2h1v-2h2v2h1v-2h8v2h1v-2h11v2h1v-2h5V219h-1v-2h-1v2h-2v-2h-1v2h-2v-2h-1v2h-2v-2h-1v2h-2v-2h-1v2h-2v-2h-1v2h-2v-2h-1v2h-2v-2h-1v2h-2v-2h-1v2h-5v-2h-1v2h-2v-2h-1v2h-20v-2h-1v2h-2v-2h-1v2h-14v-2h-1v2h-2v-2h-1v2h-5v-2h-1v2h-2v-2h-1v2h-2v-2h-1v2h-11v-2h-1v2h-2v-2h-1v2h-5v-2h-1v2h-5v-2h-1v2h-1v-1h-4v-1h-1v1h-17v-2h-1v2h-3v-1h-2v-1h-1v1h-2v-1h-1v1h-8v-2h-1v2h-2v-2h-1v1h-9v-1h-2v-1h-1v1h-2v-2h-1v2h-4v-1h-1v-1h-1v1h-2v-2h-1v2h-1v-1h-4v-2h-1v1h-3v-1h-4v-1h-1v-1h-1v1h-3v-1h-4v-1h-1v-2h-1v2h-2v-2h-1v1h-4v-1h-1v-1h-1v1h-2v-1h-3v-2h-1v2h-1v-1h-4v-2h-1v1h-5v-2h-1v2h-2v-2h-1v2h-2v-2h-1v2h-2v-2h-1v2h-2v-2h-1v2h-2v1h-4v1h-2v-1h-1v2h-2v-1h-1v3h-2v-1h-1v3h-2v1h-1v1h-1v2h-1v1h-1v1h-1v1h-2v4h-1v1h-1v2h-1v2h-1v1h-1v2h-1v1h-1v2h-2v3h-1v2h-1v2h-1v2h-1v1h-2v2h-11v-1h-1v-1h-1v-1h-1v-1h-1v-2h-1v-1h-1v-2h-1v-1h-1v-2h-1v-3h-1v-2h-1v-2h-1v-2h-1v-2h-1v-1h-1v-3h-1v2h-5v-2h-1v2h-2v-2h-1v2h-2v-2h-1v2h-5v-2h-1v2h-2v-2h-1v2h-2v-2h-1v2h-2v-2h-1v2h-2v-2h-1v2h-5v-2h-1v2h-2v-2h-1v2h-5v-2h-1v2h-5v-2h-1v2h-5v-2h-1v2h-2v-2h-1v2h-2v-2h-1v2h-2v-2h-1v2h-2v-2h-1v2h-11v-2h-1v2h-8v-2h-1v2h-2v-2h-1v2h-5v-2h-1v2h-5v-2h-1v2h-8v-2h-1v2h-2v-2h-1v2h-5v-2h-1v2h-2v-2h-1v2h-2v-2h-1v2h-2v-2h-1v2h-2v-2h-1v2h-5v-2h-1v2h-5v-2h-1v2h-5v-2h-1v2h-2v-2h-1v2h-5v-2h-1v2h-2v-2h-1v2h-5v-2h-1v2h-2v-2h-1v2h-2v-2h-1v2h-2v-2h-1v2h-2v-2h-1v2h-2v-2h-1v2h-2v-2h-1v2h-2v-2h-1v2h-2v-2h-1v2h-2v-2h-1v2h-6v-1h-2v-1h-1v1h-2v-1h-1v1h-2v-1h-1v1h-2v-1h-1v1h-2v-1h-1v1h-2v-1h-1v1h-2v-1h-1v1h-5v-1h-1v1h-2v-1h-1v1h-2v-1h-1v1h-8v-1h-1v1h-6v1h-5v-2h-1v2h-5v-2h-1v2h-2v-2h-1v2h-5v-2h-1v2h-5v-2h-1v2h-2v-2h-1v2h-5v-1h-1v1h-8v-1h-1v1h-5v-1h-1v1h-2v-1h-1v2h-2v-2h-1v2h-2v-2h-1v2h-2v-2h-1v2h-2v-2h-1v2h-2v-1h-1v1h-2v-1h-1v1h-2v-1h-1v1h-1v1h-1v-2h-1v2h-2v-2h-1v2h-5v-1h-1v2h-2v-2h-1v2h-5v-1h-1v1h-1v1h-1v-2h-1v2h-5v-1h-1v2h-5v1h-6v-1h-1v2h-5v-1h-1v2h-4v1h-4v1h-4v1h-2v-2h-1v2h-1v1h-1v-2h-1v2h-2v1h-3v-1h-1v2h-5v-1h-1v2h-5v-1h-1v1h-1v1h-7v-2h-1v2h-2v-2h-1v2h-5v-2h-1v2h-5v-2h-1v1h-4v-1h-1v-1h-1v1h-2v-2h-1v1h-2v-1h-2v-1h-1v-2h-1v1h-1v-1h-1v-2h-1v1h-1v-1h-1v-3h-2v-1h-1v-3h-2v-1h-1v-3h-2v-1h-1v-3h-2v-2h-1v-1h-1v-1h-1v-2h-1v-1h-1v-1h-1v-2h-1v-1h-1v-2h-1v-1h-1v-3h-2v-1h-1v-3h-1v1h-2v1h-2v1h-2v3h-1v2h-2v4h-1v2h-1v2h-1v2h-1v2h-1v1h-1v6h-1v2h-1v-2h-1v2h-8v-2h-1v2h-5v-2h-1v2h-2v-2h-1v2h-2v-2h-1v2h-2v-2h-1v2h-5v-2h-1v2h-5v-2h-1v2h-2v-2h-1v2h-2v-2h-1v2h-5v-2h-1v2h-8v-2h-1v2h-5v-2h-1v2h-5v-2h-1v2h-5v-2h-1v2h-5v-2h-1v2h-5v-2h-1v2h-2v-2h-1v2h-5v-2h-1v2h-17v-2h-1v2h-2v-2h-1v2h-2v-2h-1v2h-5v-2h-1v2h-5v-2h-1v2h-2v-2h-1v2h-2v-2h-1v2h-8v-2h-1v2h-2v-2h-1v2h-2v-2h-1v2h-2v-2h-1v2h-5v-2h-1v2h-2v-2h-1v2h-2v-2h-1v2h-11v-2h-1v2h-2v-2h-1v2h-2v-2h-1v2h-2z" fill="#2630FF"/>
<path d="M17,209h2v-15h1v15h2v-15h1v15h2v-15h1v15h2v-15h1v15h2v-15h1v15h2v-15h1v15h2v-15h1v15h2v-15h1v15h2v-15h1v15h2v-15h1v15h2v-15h1v15h2v-15h1v15h2v-15h1v15h2v-15h1v15h2v-15h1v15h2v-15h1v15h2v-15h1v15h2v-15h1v15h2v-15h1v15h2v-15h1v15h2v-15h1v15h2v-15h1v15h2v-15h1v15h2v-15h1v15h2v-15h1v15h2v-15h1v15h2v-15h1v15h2v-15h1v15h2v-15h1v15h2v-15h1v15h2v-15h1v15h2v-15h1v15h2v-15h1v15h2v-15h1v15h2v-15h1v15h2v-15h1v15h2v-15h1v15h2v-15h1v15h2v-15h1v15h2v-15h1v15h2v-15h1v15h2v-15h1v15h2v-15h1v15h2v-15h1v15h2v-15h1v15h2v-15h1v15h2v-15h1v15h2v-15h1v15h2v-15h1v15h2v-15h1v15h2v-15h1v15h2v-15h1v15h2v-15h1v15h2v-15h1v15h2v-15h1v15h2v-15h1v15h2v-15h1v15h2v-15h1v15h2v-15h1v15h2v-15h1v15h2v-15h1v15h2v-15h1v15h2v-17h1v11h1v-3h1v-17h1v14h1v-2h1v-18h1v13h1v-2h1v-17h1v14h1v-1h1v-17h1v15h2v-16h1v15h2v-15h1v15h1v1h1v-14h1v17h1v1h1v-14h1v17h1v1h1v-14h1v17h1v1h1v-14h1v17h1v2h1v-15h1v17h1v2h1v-15h1v17h1v2h1v-14h1v17h1v1h1v-14h1v17h1v1h1v-15h1v17h1v1h1v-15h1v16h1v1h1v-15h1v16h1v1h1v-16h1v16h1v1h1v-15h1v16h2v-16h1v16h2v-15h1v16h2v-16h1v16h2v-15h1v15h2v-15h1v15h2v-15h1v15h2v-15h1v15h2v-15h1v15h2v-16h1v16h2v-16h1v15h2v-15h1v15h2v-16h1v16h1v-1h1v-16h1v16h2v-16h1v15h2v-16h1v15h2v-16h1v16h1v-1h1v-15h1v15h2v-16h1v15h2v-16h1v15h2v-16h1v16h1v-1h1v-15h1v15h2v-16h1v16h1v-1h1v-15h1v15h2v-16h1v16h1v-1h1v-15h1v15h2v-16h1v16h1v-1h1v-15h1v15h2v-16h1v16h1v-1h1v-15h1v15h2v-16h1v16h2v-16h1v16h1v-1h1v-15h1v15h2v-16h1v16h2v-16h1v16h2v-16h1v15h2v-15h1v15h2v-16h1v16h2v-16h1v16h2v-16h1v16h2v-16h1v16h1v-1h1v-15h1v15h2v-15h1v15h2v-15h1v15h2v-16h1v16h2v-16h1v16h2v-16h1v16h2v-16h1v16h2v-16h1v16h2v-16h1v16h2v-16h1v16h2v-16h1v16h2v-16h1v16h2v-16h1v15h2v-15h1v15h2v-15h1v15h2v-15h1v15h2v-15h1v15h2v-15h1v15h2v-15h1v15h2v-15h1v15h2v-16h1v16h2v-16h1v16h2v-16h1v16h2v-16h1v16h2v-16h1v16h2v-16h1v16h2v-16h1v16h2v-16h1v16h2v-16h1v16h2v-16h1v16h2v-16h1v16h2v-16h1v16h2v-16h1v16h2v-16h1v16h2v-16h1v16h2v-16h1v16h2v-16h1v16h2v-16h1v16h2v-16h1v16h2v-16h1v16h2v-16h1v16h2v-16h1v16h2v-16h1v16h2v-16h1v16h2v-16h1v16h2v-16h1v16h2v-16h1v16h2v-16h1v16h2v-16h1v16h2v-16h1v16h2v-16h1v16h2v-16h1v16h2v-16h1v16h2v-16h1v16h2v-16h1v16h2v-16h1v16h2v-16h1v16h2v-16h1v16h2v-16h1v16h2v-16h1v16h2v-16h1v16h2v-16h1v16h2v-16h1v16h2v-16h1v16h2v-16h1v16h2v-16h1v16h2v-16h1v16h2v-16h1v16h2v-16h1v16h2v-16h1v16h2v-16h1v16h2v-16h1v16h2v-16h1v16h2v-15h1v15h2v-15h1v15h2v-15h1v15h2v-15h1v15h2v-15h1v15h2v-15h1v15h2v-15h1v15h2v-15h1v15h2v-15h1v15h2v-15h1v15h2v-15h1v15h2v-15h1v15h2v-15h1v15h2v-15h1v15h2v-15h1v15h2v-15h1v15h2v-15h1v15h2v-15h1v15h2v-15h1v15h2v-15h1v15h2v-15h1v15h2v-15h1v15h2v-15h1v15h2v-15h1v15h2v-15h1v15h2v-15h1v15h2v-15h1v15h2v-15h1v15h2v-15h1v15h2v-15h1v15h2v-15h1v15h2v-15h1v15h2v-15h1v15h2v-15h1v15h1v1h2v2h1v2h1v2h1v2h1v3h1v2h1v2h1v2h1v1h1v2h1v1h1v1h1v1h1v1h1v1h7v-1h1v-1h1v-18h1v14h1v-2h1v-17h1v14h1v-2h1v-17h1v14h1v-1h1v-17h1v13h1v-1h1v-17h1v13h1v-1h1v-17h1v14h1v-1h1v-17h1v15h1v-1h1v-16h1v15h1v-1h1v-17h1v15h2v-16h1v15h1v-1h1v-16h1v16h2v-16h1v15h2v-16h1v16h1v-1h1v-15h1v15h2v-15h1v15h2v-15h1v15h2v-15h1v15h2v-15h1v15h2v-15h1v15h2v-15h1v16h2v-15h1v15h1v1h1v-16h1v16h2v-15h1v16h2v-15h1v15h1v1h1v-16h1v16h2v-15h1v16h2v-15h1v15h1v1h1v-16h1v16h2v-15h1v16h2v-15h1v15h1v1h1v-16h1v16h2v-15h1v16h2v-15h1v16h2v-15h1v15h1v1h1v-16h1v16h2v-15h1v16h2v-16h1v16h2v-15h1v15h2v-15h1v16h2v-16h1v16h2v-15h1v15h2v-15h1v16h2v-16h1v16h2v-16h1v16h2v-15h1v15h2v-15h1v15h1v1h1v-16h1v16h2v-16h1v16h2v-16h1v16h2v-16h1v16h2v-15h1v15h2v-15h1v15h2v-15h1v16h2v-16h1v16h2v-16h1v16h2v-16h1v16h2v-16h1v16h2v-16h1v16h2v-16h1v16h2v-15h1v15h2v-15h1v15h2v-15h1v15h2v-15h1v16h2v-16h1v16h2v-16h1v16h2v-16h1v16h2v-16h1v16h2v-16h1v16h2v-16h1v16h2v-16h1v16h2v-16h1v16h2v-16h1v16h2v-16h1v16h2v-16h1v16h2v-16h1v16h2v-16h1v16h2v-16h1v16h2v-16h1v16h2v-16h1v16h2v-16h1v16h2v-16h1v16h2v-16h1v16h2v-16h1v16h2v-16h1v16h2v-16h1v16h2v-16h1v16h2v-16h1v16h2v-16h1v16h2v-16h1v16h2v-16h1v16h2v-16h1v16h2v-16h1v16h2v-16h1v16h2v-16h1v16h2v-16h1v16h2v-16h1v16h1V210h-1v-9h-1v9h-2v-9h-1v9h-2v-9h-1v9h-2v-9h-1v9h-2v-9h-1v9h-2v-9h-1v9h-2v-9h-1v9h-2v-9h-1v9h-2v-9h-1v9h-2v-9h-1v9h-2v-9h-1v9h-2v-9h-1v9h-2v-9h-1v9h-2v-9h-1v9h-2v-9h-1v9h-2v-9h-1v9h-2v-9h-1v9h-2v-9h-1v9h-2v-9h-1v9h-2v-9h-1v9h-2v-9h-1v9h-2v-9h-1v9h-2v-9h-1v9h-2v-9h-1v9h-2v-9h-1v9h-2v-9h-1v9h-2v-9h-1v9h-2v-9h-1v9h-2v-9h-1v9h-2v-9h-1v9h-2v-9h-1v9h-2v-9h-1v9h-2v-9h-1v9h-2v-9h-1v9h-2v-9h-1v9h-2v-9h-1v9h-2v-9h-1v9h-2v-9h-1v9h-2v-9h-1v9h-2v-10h-1v9h-2v-9h-1v9h-2v-9h-1v9h-2v-9h-1v9h-2v-9h-1v9h-2v-9h-1v9h-2v-9h-1v9h-2v-9h-1v9h-2v-9h-1v8h-2v-9h-1v9h-2v-9h-1v9h-2v-9h-1v9h-2v-9h-1v9h-2v-9h-1v9h-2v-10h-1v9h-2v-9h-1v9h-2v-9h-1v9h-2v-9h-1v8h-2v-9h-1v9h-2v-9h-1v9h-2v-9h-1v9h-1v-1h-1v-9h-1v9h-2v-9h-1v9h-1v-1h-1v-9h-1v9h-2v-10h-1v9h-2v-9h-1v8h-2v-9h-1v9h-1v-1h-1v-9h-1v9h-2v-9h-1v8h-2v-9h-1v9h-1v-1h-1v-9h-1v9h-2v-10h-1v9h-2v-9h-1v9h-1v-1h-1v-9h-1v9h-2v-10h-1v9h-2v-9h-1v9h-1v-1h-1v-9h-1v9h-2v-10h-1v9h-2v-9h-1v9h-2v-9h-1v9h-2v-9h-1v9h-2v-9h-1v9h-2v-9h-1v9h-2v-9h-1v9h-2v-8h-1v9h-2v-9h-1v10h-2v-9h-1v10h-2v-8h-1v10h-2v-8h-1v10h-2v-8h-1v10h-1v2h-1v-8h-1v10h-1v1h-1v-7h-1v11h-1v1h-1v-7h-1v11h-1v1h-1v-7h-1v10h-1v2h-1v-8h-1v11h-1v2h-1v-7h-1v11h-1v1h-1v-7h-1v10h-10v-1h-2v-1h-1v-1h-1v-1h-1v-2h-1v-1h-1v-2h-1v-1h-1v-3h-1v-2h-1v-2h-1v-2h-1v-3h-1v-2h-1v-1h-1v-10h-1v9h-2v-9h-1v9h-2v-9h-1v9h-2v-9h-1v9h-2v-9h-1v9h-2v-9h-1v9h-2v-9h-1v9h-2v-9h-1v9h-2v-9h-1v9h-2v-9h-1v9h-2v-9h-1v9h-2v-9h-1v9h-2v-9h-1v9h-2v-9h-1v9h-2v-9h-1v9h-2v-9h-1v9h-2v-9h-1v9h-2v-9h-1v9h-2v-9h-1v9h-2v-9h-1v9h-2v-9h-1v9h-2v-9h-1v9h-2v-9h-1v9h-2v-9h-1v9h-2v-9h-1v9h-2v-9h-1v9h-2v-9h-1v9h-2v-9h-1v9h-2v-9h-1v9h-2v-9h-1v9h-2v-9h-1v9h-2v-9h-1v9h-2v-9h-1v9h-2v-9h-1v9h-2v-9h-1v9h-2v-9h-1v9h-2v-9h-1v9h-2v-9h-1v9h-2v-9h-1v9h-2v-9h-1v9h-2v-9h-1v9h-2v-9h-1v9h-2v-9h-1v9h-2v-9h-1v9h-2v-9h-1v9h-2v-9h-1v9h-2v-9h-1v9h-2v-9h-1v9h-2v-9h-1v9h-2v-9h-1v9h-2v-9h-1v9h-2v-9h-1v9h-2v-9h-1v9h-2v-9h-1v9h-2v-9h-1v9h-2v-9h-1v9h-2v-9h-1v9h-2v-9h-1v9h-2v-9h-1v9h-2v-9h-1v9h-2v-9h-1v9h-2v-9h-1v9h-2v-9h-1v9h-2v-9h-1v9h-2v-9h-1v9h-2v-9h-1v9h-2v-9h-1v9h-2v-9h-1v9h-2v-9h-1v9h-2v-10h-1v10h-2v-10h-1v10h-2v-10h-1v10h-2v-10h-1v10h-2v-10h-1v10h-2v-10h-1v10h-2v-10h-1v10h-2v-10h-1v10h-2v-10h-1v10h-2v-10h-1v10h-2v-10h-1v10h-2v-10h-1v10h-2v-10h-1v10h-2v-10h-1v10h-2v-10h-1v10h-2v-10h-1v10h-2v-9h-1v9h-2v-9h-1v9h-2v-9h-1v9h-2v-9h-1v9h-2v-9h-1v9h-2v-9h-1v9h-2v-9h-1v9h-2v-9h-1v9h-2v-9h-1v9h-2v-9h-1v9h-2v-9h-1v9h-2v-9h-1v9h-2v-9h-1v9h-2v-9h-1v9h-2v-9h-1v9h-2v-9h-1v9h-2v-9h-1v9h-2v-8h-1v9h-2v-9h-1v9h-2v-9h-1v9h-2v-9h-1v9h-2v-9h-1v9h-2v-9h-1v9h-2v-9h-1v9h-2v-9h-1v9h-1v1h-1v-9h-1v9h-2v-9h-1v9h-2v-9h-1v9h-2v-8h-1v9h-2v-9h-1v9h-2v-9h-1v9h-2v-9h-1v9h-1v1h-1v-9h-1v9h-2v-9h-1v9h-2v-8h-1v9h-2v-9h-1v9h-2v-8h-1v9h-2v-9h-1v9h-2v-8h-1v9h-2v-9h-1v9h-2v-8h-1v9h-2v-9h-1v9h-1v1h-1v-9h-1v9h-2v-8h-1v9h-2v-9h-1v10h-2v-9h-1v9h-1v1h-1v-9h-1v9h-2v-8h-1v9h-2v-9h-1v10h-2v-9h-1v9h-2v-8h-1v9h-2v-9h-1v9h-2v-9h-1v9h-1v1h-1v-9h-1v9h-2v-9h-1v9h-2v-9h-1v9h-2v-9h-1v9h-2v-9h-1v9h-2v-9h-1v9h-2v-9h-1v9h-2v-10h-1v9h-2v-9h-1v9h-1v-1h-1v-9h-1v9h-2v-10h-1v9h-2v-10h-1v9h-1v-1h-1v-10h-1v9h-1v-1h-1v-10h-1v9h-1v-1h-1v-11h-1v8h-1v-1h-1v-11h-1v8h-1v-1h-1v-11h-1v8h-1v-1h-1v-11h-1v8h-1v-2h-1v-10h-1v8h-1v-2h-1v-10h-1v8h-1v-2h-1v-10h-1v7h-1v-1h-1v-10h-1v7h-1v-1h-1v-10h-1v8h-2v-8h-1v9h-1v1h-1v-8h-1v11h-1v2h-1v-7h-1v11h-1v2h-1v-7h-1v11h-1v2h-1v-6h-1v13h-1v2h-1v-9h-1v9h-2v-9h-1v9h-2v-9h-1v9h-2v-9h-1v9h-2v-9h-1v9h-2v-9h-1v9h-2v-9h-1v9h-2v-9h-1v9h-2v-9h-1v9h-2v-9h-1v9h-2v-9h-1v9h-2v-9h-1v9h-2v-9h-1v9h-2v-9h-1v9h-2v-9h-1v9h-2v-9h-1v9h-2v-9h-1v9h-2v-9h-1v9h-2v-9h-1v9h-2v-9h-1v9h-2v-9h-1v9h-2v-9h-1v9h-2v-9h-1v9h-2v-9h-1v9h-2v-9h-1v9h-2v-9h-1v9h-2v-9h-1v9h-2v-9h-1v9h-2v-9h-1v9h-2v-9h-1v9h-2v-9h-1v9h-2v-9h-1v9h-2v-9h-1v9h-2v-9h-1v9h-2v-9h-1v9h-2v-9h-1v9h-2v-9h-1v9h-2v-9h-1v9h-2v-9h-1v9h-2v-9h-1v9h-2v-9h-1v9h-2v-9h-1v9h-2v-9h-1v9h-2v-9h-1v9h-2v-9h-1v9h-2v-9h-1v9h-2v-9h-1v9h-2v-9h-1v9h-2v-9h-1v9h-2v-9h-1v9h-2v-9h-1v9h-2v-9h-1v9h-2v-9h-1v9h-2v-9h-1v9h-2v-9h-1v9h-2v-9h-1v9h-2v-9h-1v9h-2v-9h-1v9h-2v-9h-1v9h-2v-9h-1v9h-2v-9h-1v9h-2v-9h-1v9h-2v-9h-1v9h-2z" fill="#5430F4"/>
<path d="M17,194h1v15h2v-15h1v15h2v-15h1v15h2v-15h1v15h2v-15h1v15h2v-15h1v15h2v-15h1v15h2v-15h1v15h2v-15h1v15h2v-15h1v15h2v-15h1v15h2v-15h1v15h2v-15h1v15h2v-15h1v15h2v-15h1v15h2v-15h1v15h2v-15h1v15h2v-15h1v15h2v-15h1v15h2v-15h1v15h2v-15h1v15h2v-15h1v15h2v-15h1v15h2v-15h1v15h2v-15h1v15h2v-15h1v15h2v-15h1v15h2v-15h1v15h2v-15h1v15h2v-15h1v15h2v-15h1v15h2v-15h1v15h2v-15h1v15h2v-15h1v15h2v-15h1v15h2v-15h1v15h2v-15h1v15h2v-15h1v15h2v-15h1v15h2v-15h1v15h2v-15h1v15h2v-15h1v15h2v-15h1v15h2v-15h1v15h2v-15h1v15h2v-15h1v15h2v-15h1v15h2v-15h1v15h2v-15h1v15h2v-15h1v15h2v-15h1v15h2v-15h1v15h2v-15h1v15h2v-15h1v15h2v-15h1v15h2v-15h1v15h2v-15h1v15h2v-15h1v15h2v-15h1v15h2v-15h1v15h2v-15h1v15h2v-15h1v15h2v-15h1v15h1v-2h1v-19h1v12h1v-2h1v-17h1v14h1v-3h1v-17h1v13h1v-1h1v-18h1v15h1v-1h1v-17h1v16h1v-1h1v-15h1v15h2v-15h1v16h1v1h1v-14h1v17h1v2h1v-15h1v17h1v2h1v-14h1v16h1v2h1v-14h1v17h1v1h1v-14h1v17h1v1h1v-14h1v17h1v1h1v-14h1v17h1v1h1v-14h1v17h1v1h1v-15h1v17h2v-14h1v16h1v1h1v-15h1v16h2v-15h1v16h2v-15h1v16h2v-15h1v15h1v1h1v-16h1v16h2v-16h1v16h2v-15h1v15h2v-15h1v15h2v-15h1v15h2v-15h1v15h2v-16h1v16h2v-16h1v16h2v-16h1v15h2v-16h1v16h2v-16h1v15h2v-16h1v16h1v-1h1v-16h1v16h2v-16h1v15h2v-16h1v15h2v-16h1v16h1v-1h1v-15h1v15h2v-16h1v15h2v-16h1v15h2v-16h1v16h2v-16h1v15h2v-16h1v16h2v-16h1v15h2v-16h1v16h2v-16h1v15h2v-16h1v16h2v-16h1v15h2v-15h1v15h2v-16h1v16h2v-16h1v15h2v-15h1v15h2v-16h1v16h2v-16h1v16h2v-16h1v15h2v-15h1v15h2v-16h1v16h2v-16h1v16h2v-16h1v16h2v-16h1v15h2v-15h1v15h2v-15h1v15h2v-15h1v15h2v-16h1v16h2v-16h1v16h2v-16h1v16h2v-16h1v16h2v-16h1v16h2v-16h1v16h2v-16h1v16h2v-16h1v16h2v-16h1v16h1v-1h1v-15h1v15h2v-15h1v15h2v-15h1v15h2v-15h1v15h2v-15h1v15h2v-15h1v15h2v-15h1v15h2v-16h1v16h2v-16h1v16h2v-16h1v16h2v-16h1v16h2v-16h1v16h2v-16h1v16h2v-16h1v16h2v-16h1v16h2v-16h1v16h2v-16h1v16h2v-16h1v16h2v-16h1v16h2v-16h1v16h2v-16h1v16h2v-16h1v16h2v-16h1v16h2v-16h1v16h2v-16h1v16h2v-16h1v16h2v-16h1v16h2v-16h1v16h2v-16h1v16h2v-16h1v16h2v-16h1v16h2v-16h1v16h2v-16h1v16h2v-16h1v16h2v-16h1v16h2v-16h1v16h2v-16h1v16h2v-16h1v16h2v-16h1v16h2v-16h1v16h2v-16h1v16h2v-16h1v16h2v-16h1v16h2v-16h1v16h2v-16h1v16h2v-16h1v16h2v-16h1v16h2v-16h1v16h2v-16h1v16h2v-16h1v16h2v-16h1v16h2v-16h1v16h2v-16h1v16h2v-16h1v16h2v-16h1v16h2v-16h1v16h2v-16h1v16h2v-16h1v16h2v-16h1v16h2v-16h1v16h2v-16h1v16h2v-15h1v15h2v-15h1v15h2v-15h1v15h2v-15h1v15h2v-15h1v15h2v-15h1v15h2v-15h1v15h2v-15h1v15h2v-15h1v15h2v-15h1v15h2v-15h1v15h2v-15h1v15h2v-15h1v15h2v-15h1v15h2v-15h1v15h2v-15h1v15h2v-15h1v15h2v-15h1v15h2v-15h1v15h2v-15h1v15h2v-15h1v15h2v-15h1v15h2v-15h1v15h2v-15h1v15h2v-15h1v15h2v-15h1v15h2v-15h1v15h2v-15h1v15h2v-15h1v15h2v-15h1v15h2v-15h1v15h2v-15h1v15h2v-15h1v15h2v-15h1v16h2v2h1v2h1v2h1v2h1v3h1v2h1v2h1v2h1v1h1v2h1v1h1v1h1v1h1v1h1v1h7v-1h1v-1h1v-2h1v-17h1v13h1v-1h1v-18h1v14h1v-1h1v-17h1v14h1v-2h1v-17h1v14h1v-2h1v-17h1v14h1v-2h1v-16h1v14h1v-1h1v-17h1v15h1v-1h1v-16h1v15h1v-1h1v-16h1v15h1v-1h1v-16h1v15h2v-16h1v16h1v-1h1v-15h1v15h2v-16h1v15h2v-15h1v15h2v-15h1v15h2v-15h1v15h2v-15h1v15h2v-15h1v15h2v-15h1v15h1v1h1v-16h1v16h2v-15h1v16h2v-16h1v16h1v1h1v-16h1v16h2v-15h1v16h2v-16h1v16h2v-15h1v16h2v-15h1v16h2v-16h1v16h1v1h1v-16h1v16h2v-15h1v16h2v-15h1v15h1v1h1v-16h1v16h2v-15h1v16h2v-15h1v16h2v-16h1v16h1v1h1v-16h1v16h2v-16h1v16h2v-15h1v15h1v1h1v-16h1v16h2v-16h1v16h2v-15h1v15h2v-15h1v16h2v-16h1v16h2v-15h1v15h2v-15h1v15h2v-15h1v16h2v-16h1v16h2v-16h1v16h2v-16h1v16h2v-15h1v15h2v-15h1v15h2v-15h1v15h1v1h1v-16h1v16h2v-16h1v16h2v-16h1v16h2v-16h1v16h2v-16h1v16h2v-16h1v16h2v-15h1v15h2v-15h1v15h2v-15h1v15h2v-15h1v15h2v-15h1v16h2v-16h1v16h2v-16h1v16h2v-16h1v16h2v-16h1v16h2v-16h1v16h2v-16h1v16h2v-16h1v16h2v-16h1v16h2v-16h1v16h2v-16h1v16h2v-16h1v16h2v-16h1v16h2v-16h1v16h2v-16h1v16h2v-16h1v16h2v-16h1v16h2v-16h1v16h2v-16h1v16h2v-16h1v16h2v-16h1v16h2v-16h1v16h2v-16h1v16h2v-16h1v16h2v-16h1v16h2v-16h1v16h2v-16h1v16h2v-16h1v16h2v-16h1v16h2v-16h1v16h2v-16h1v16h2v-16h1v16h2v-16h1v16h2v-16h1V196h-1v14h-2v-14h-1v14h-2v-14h-1v14h-2v-14h-1v14h-2v-14h-1v14h-2v-14h-1v14h-2v-14h-1v14h-2v-14h-1v14h-2v-14h-1v14h-2v-14h-1v14h-2v-14h-1v14h-2v-14h-1v14h-2v-14h-1v14h-2v-14h-1v14h-2v-14h-1v14h-2v-14h-1v14h-2v-14h-1v14h-2v-14h-1v14h-2v-14h-1v14h-2v-14h-1v14h-2v-14h-1v14h-2v-14h-1v14h-2v-14h-1v14h-2v-14h-1v14h-2v-14h-1v14h-2v-14h-1v14h-2v-14h-1v14h-2v-14h-1v14h-2v-14h-1v14h-2v-14h-1v14h-2v-14h-1v14h-2v-14h-1v14h-2v-14h-1v14h-2v-14h-1v14h-2v-14h-1v14h-2v-14h-1v14h-2v-14h-1v14h-2v-14h-1v14h-2v-14h-1v14h-2v-14h-1v13h-2v-13h-1v13h-2v-14h-1v14h-2v-14h-1v14h-2v-14h-1v14h-2v-14h-1v14h-2v-14h-1v14h-2v-14h-1v14h-2v-14h-1v14h-1v-1h-1v-13h-1v13h-2v-14h-1v14h-2v-14h-1v14h-2v-14h-1v14h-2v-14h-1v14h-2v-14h-1v13h-2v-14h-1v14h-2v-14h-1v14h-2v-14h-1v14h-1v-1h-1v-14h-1v14h-2v-14h-1v14h-2v-14h-1v14h-2v-14h-1v13h-2v-14h-1v14h-2v-15h-1v14h-2v-14h-1v13h-2v-14h-1v14h-1v-1h-1v-14h-1v14h-2v-14h-1v13h-2v-14h-1v14h-1v-1h-1v-14h-1v14h-2v-15h-1v14h-2v-14h-1v13h-2v-14h-1v14h-2v-15h-1v14h-2v-14h-1v13h-2v-14h-1v14h-2v-15h-1v14h-2v-14h-1v13h-2v-14h-1v14h-2v-14h-1v14h-2v-14h-1v14h-2v-14h-1v14h-2v-14h-1v14h-2v-14h-1v14h-2v-13h-1v14h-2v-14h-1v14h-1v1h-1v-14h-1v14h-1v1h-1v-13h-1v14h-1v1h-1v-14h-1v15h-1v1h-1v-13h-1v14h-1v1h-1v-12h-1v15h-1v1h-1v-13h-1v16h-1v2h-1v-13h-1v16h-1v2h-1v-13h-1v16h-1v1h-1v-12h-1v15h-1v2h-1v-12h-1v16h-1v2h-1v-13h-1v16h-1v1h-10v-1h-2v-1h-1v-1h-1v-1h-1v-2h-1v-1h-1v-2h-1v-1h-1v-3h-1v-2h-1v-2h-1v-2h-1v-3h-1v-2h-1v-15h-1v13h-2v-14h-1v14h-2v-14h-1v14h-2v-14h-1v14h-2v-14h-1v14h-2v-14h-1v14h-2v-14h-1v14h-2v-14h-1v14h-2v-14h-1v14h-2v-14h-1v14h-2v-14h-1v14h-2v-14h-1v14h-2v-14h-1v14h-2v-14h-1v14h-2v-14h-1v14h-2v-14h-1v14h-2v-14h-1v14h-2v-14h-1v14h-2v-14h-1v14h-2v-14h-1v14h-2v-14h-1v14h-2v-14h-1v14h-2v-14h-1v14h-2v-14h-1v14h-2v-14h-1v14h-2v-14h-1v14h-2v-14h-1v14h-2v-14h-1v14h-2v-14h-1v14h-2v-14h-1v14h-2v-14h-1v14h-2v-14h-1v14h-2v-14h-1v14h-2v-14h-1v14h-2v-14h-1v14h-2v-14h-1v14h-2v-14h-1v14h-2v-14h-1v14h-2v-14h-1v14h-2v-14h-1v14h-2v-14h-1v14h-2v-14h-1v14h-2v-14h-1v14h-2v-14h-1v14h-2v-14h-1v14h-2v-14h-1v14h-2v-14h-1v14h-2v-14h-1v14h-2v-14h-1v14h-2v-14h-1v14h-2v-14h-1v14h-2v-14h-1v14h-2v-14h-1v14h-2v-14h-1v14h-2v-14h-1v14h-2v-14h-1v14h-2v-14h-1v14h-2v-14h-1v14h-2v-14h-1v14h-2v-14h-1v14h-2v-14h-1v14h-2v-14h-1v14h-2v-14h-1v14h-2v-14h-1v14h-2v-14h-1v14h-2v-14h-1v14h-2v-14h-1v14h-2v-14h-1v14h-2v-14h-1v14h-2v-14h-1v14h-2v-14h-1v14h-2v-14h-1v14h-2v-14h-1v14h-2v-14h-1v14h-2v-14h-1v14h-2v-14h-1v14h-2v-14h-1v14h-2v-14h-1v14h-2v-14h-1v14h-2v-14h-1v14h-2v-14h-1v14h-2v-14h-1v14h-2v-14h-1v14h-2v-14h-1v14h-2v-14h-1v14h-2v-14h-1v14h-2v-14h-1v14h-2v-14h-1v14h-2v-14h-1v14h-2v-14h-1v14h-2v-14h-1v14h-2v-14h-1v14h-2v-14h-1v14h-2v-14h-1v14h-2v-14h-1v14h-2v-14h-1v14h-2v-14h-1v14h-2v-14h-1v14h-2v-14h-1v14h-2v-14h-1v14h-2v-14h-1v14h-2v-14h-1v14h-2v-13h-1v14h-2v-14h-1v14h-2v-14h-1v14h-2v-14h-1v14h-2v-14h-1v14h-2v-14h-1v14h-2v-14h-1v14h-2v-14h-1v14h-2v-13h-1v14h-2v-14h-1v14h-2v-14h-1v14h-2v-13h-1v14h-2v-14h-1v14h-2v-14h-1v14h-2v-14h-1v14h-2v-13h-1v14h-2v-14h-1v14h-2v-14h-1v15h-2v-14h-1v14h-2v-14h-1v15h-2v-14h-1v14h-2v-13h-1v14h-2v-14h-1v14h-2v-13h-1v14h-2v-14h-1v14h-2v-13h-1v14h-2v-14h-1v15h-2v-14h-1v14h-1v1h-1v-14h-1v14h-2v-13h-1v14h-2v-14h-1v15h-2v-14h-1v14h-1v1h-1v-14h-1v14h-2v-14h-1v15h-2v-14h-1v14h-2v-14h-1v14h-2v-13h-1v14h-2v-14h-1v14h-2v-14h-1v14h-2v-14h-1v14h-2v-14h-1v14h-2v-14h-1v14h-2v-14h-1v14h-2v-14h-1v13h-2v-14h-1v14h-2v-14h-1v13h-2v-14h-1v13h-2v-14h-1v13h-2v-15h-1v13h-2v-15h-1v13h-2v-15h-1v12h-1v-1h-1v-15h-1v12h-1v-1h-1v-15h-1v12h-1v-1h-1v-15h-1v12h-1v-1h-1v-15h-1v12h-1v-1h-1v-16h-1v13h-1v-1h-1v-16h-1v13h-1v-2h-1v-15h-1v13h-1v-2h-1v-15h-1v13h-1v-1h-1v-14h-1v14h-1v1h-1v-13h-1v16h-1v1h-1v-12h-1v16h-1v2h-1v-12h-1v16h-1v2h-1v-12h-1v17h-1v4h-1v-12h-1v14h-2v-14h-1v14h-2v-14h-1v14h-2v-14h-1v14h-2v-14h-1v14h-2v-14h-1v14h-2v-14h-1v14h-2v-14h-1v14h-2v-14h-1v14h-2v-14h-1v14h-2v-14h-1v14h-2v-14h-1v14h-2v-14h-1v14h-2v-14h-1v14h-2v-14h-1v14h-2v-14h-1v14h-2v-14h-1v14h-2v-14h-1v14h-2v-14h-1v14h-2v-14h-1v14h-2v-14h-1v14h-2v-14h-1v14h-2v-14h-1v14h-2v-14h-1v14h-2v-14h-1v14h-2v-14h-1v14h-2v-14h-1v14h-2v-14h-1v14h-2v-14h-1v14h-2v-14h-1v14h-2v-14h-1v14h-2v-14h-1v14h-2v-14h-1v14h-2v-14h-1v14h-2v-14h-1v14h-2v-14h-1v14h-2v-14h-1v14h-2v-14h-1v14h-2v-14h-1v14h-2v-14h-1v14h-2v-14h-1v14h-2v-14h-1v14h-2v-14h-1v14h-2v-14h-1v14h-2v-14h-1v14h-2v-14h-1v14h-2v-14h-1v14h-2v-14h-1v14h-2v-14h-1v14h-2v-14h-1v14h-2v-14h-1v14h-2v-14h-1v14h-2v-14h-1v14h-2v-14h-1v14h-2v-14h-1v14h-2v-14h-1v14h-2v-14h-1v14h-2v-14h-1v14h-2v-14h-1v14h-2v-14h-1v14h-2v-14h-1v14h-2v-14h-1v14h-2v-14h-1v14h-2v-14h-1z" fill="#6A2CE8"/>
<path d="M17,199h1v-1h1v1h2v-1h1v1h2v-1h1v1h2v-1h1v1h2v-1h1v1h2v-1h1v1h2v-1h1v1h2v-1h1v1h2v-1h1v1h2v-1h1v1h2v-1h1v1h2v-1h1v1h2v-1h1v1h2v-1h1v1h2v-1h1v1h2v-1h1v1h2v-1h1v1h2v-1h1v1h2v-1h1v1h2v-1h1v1h2v-1h1v1h2v-1h1v1h2v-1h1v1h2v-1h1v1h2v-1h1v1h2v-1h1v1h2v-1h1v1h2v-1h1v1h2v-1h1v1h2v-1h1v1h2v-1h1v1h2v-1h1v1h2v-1h1v1h2v-1h1v1h2v-1h1v1h2v-1h1v1h2v-1h1v1h2v-1h1v1h2v-1h1v1h2v-1h1v1h2v-1h1v1h2v-1h1v1h2v-1h1v1h2v-1h1v1h2v-1h1v1h2v-1h1v1h2v-1h1v1h2v-1h1v1h2v-1h1v1h2v-1h1v1h2v-1h1v1h2v-1h1v1h2v-1h1v1h2v-1h1v1h2v-1h1v1h2v-1h1v1h2v-1h1v1h2v-1h1v1h2v-1h1v1h2v-1h1v1h2v-1h1v1h2v-1h1v1h2v-1h1v-1h1v-4h1v-4h1v-1h1v-2h1v-3h1v-1h1v-2h1v-3h1v-1h1v-2h1v-2h3v-2h1v1h2v-1h1v1h3v2h1v1h2v3h1v1h1v1h1v2h1v2h2v2h1v2h2v2h1v2h2v3h1v1h2v3h1v1h2v3h1v1h2v3h1v1h1v-1h1v2h1v1h1v-1h1v2h1v1h1v-1h1v2h2v-1h1v2h2v-1h1v1h1v1h1v-1h1v1h2v-1h1v2h2v-2h1v2h2v-1h1v1h2v-1h1v1h2v-1h1v1h2v-2h1v2h2v-2h1v1h2v-1h1v1h2v-1h1v1h2v-2h1v1h2v-1h1v1h1v-1h1v-1h1v1h2v-2h1v1h2v-2h1v1h2v-1h1v1h1v-1h1v-1h1v1h2v-2h1v1h2v-2h1v1h2v-1h1v1h2v-2h1v1h2v-1h1v1h2v-2h1v1h2v-1h1v1h2v-2h1v1h2v-1h1v1h2v-2h1v1h2v-1h1v1h2v-2h1v1h2v-1h1v1h2v-1h1v1h2v-2h1v2h2v-2h1v1h2v-1h1v1h2v-1h1v1h2v-2h1v1h2v-1h1v1h2v-1h1v1h2v-1h1v1h2v-1h1v1h2v-1h1v1h2v-1h1v1h2v-2h1v2h2v-2h1v1h2v-1h1v1h2v-1h1v1h2v-1h1v1h2v-1h1v1h2v-1h1v1h2v-1h1v1h2v-1h1v1h2v-1h1v1h2v-1h1v1h2v-1h1v1h2v-1h1v1h2v-1h1v1h2v-1h1v1h2v-2h1v2h2v-2h1v2h2v-2h1v2h2v-2h1v2h1v-1h1v-1h1v1h2v-1h1v1h2v-1h1v1h2v-1h1v1h2v-1h1v1h2v-1h1v1h2v-1h1v1h2v-1h1v1h2v-1h1v1h2v-1h1v1h2v-1h1v1h2v-1h1v1h2v-1h1v1h2v-1h1v1h2v-1h1v1h2v-1h1v1h2v-1h1v1h2v-1h1v2h2v-2h1v2h2v-2h1v2h2v-2h1v2h2v-2h1v2h2v-2h1v2h2v-2h1v2h2v-2h1v2h2v-2h1v2h2v-2h1v2h2v-2h1v2h2v-2h1v2h2v-2h1v2h2v-2h1v2h2v-2h1v2h2v-2h1v2h2v-2h1v2h2v-2h1v2h2v-2h1v2h2v-2h1v2h2v-2h1v2h2v-2h1v2h2v-2h1v2h2v-2h1v2h2v-2h1v2h2v-2h1v2h2v-2h1v2h2v-2h1v2h2v-2h1v2h2v-2h1v2h2v-2h1v2h2v-2h1v2h2v-2h1v2h2v-2h1v2h2v-2h1v2h2v-2h1v2h2v-2h1v2h2v-2h1v2h2v-2h1v2h2v-2h1v2h2v-2h1v2h2v-2h1v2h2v-2h1v2h2v-2h1v2h2v-2h1v2h2v-2h1v2h2v-2h1v2h2v-2h1v2h2v-2h1v2h2v-2h1v2h2v-2h1v2h2v-2h1v2h2v-2h1v2h2v-2h1v2h2v-2h1v2h2v-2h1v2h2v-2h1v2h2v-2h1v2h2v-2h1v2h2v-2h1v2h2v-2h1v2h2v-2h1v2h2v-2h1v2h2v-2h1v2h2v-2h1v2h2v-2h1v2h2v-2h1v2h2v-2h1v2h2v-1h1v2h1v1h1v1h1v4h1v2h1v1h1v3h1v3h2v3h1v1h1v1h1v2h1v1h2v1h1v1h1v-1h1v1h2v-1h1v1h1v-1h1v-3h2v-2h1v-3h1v-1h1v-2h1v-3h2v-1h1v-3h2v-2h1v-3h2v-2h1v-3h2v-1h1v-3h2v-1h1v-2h1v1h1v-1h1v-2h1v1h1v-1h1v-2h1v1h1v-1h1v-1h1v1h1v-1h1v-1h1v1h2v-2h1v1h2v-1h1v1h2v-1h1v1h2v-1h1v1h2v-1h1v1h2v-1h1v1h2v-1h1v1h2v-1h1v1h2v-1h1v2h2v-1h1v1h1v1h1v-1h1v1h2v-1h1v2h2v-1h1v1h1v1h1v-1h1v1h2v-1h1v2h2v-1h1v1h1v1h1v-1h1v1h2v-1h1v2h2v-1h1v1h1v1h1v-1h1v1h2v-1h1v2h2v-1h1v2h2v-1h1v1h1v1h1v-1h1v1h2v-1h1v1h1v1h1v-2h1v2h2v-1h1v1h2v-1h1v1h2v-1h1v2h2v-1h1v1h2v-1h1v1h2v-1h1v2h2v-1h1v1h2v-1h1v1h2v-1h1v1h2v-1h1v1h2v-1h1v1h2v-1h1v2h2v-2h1v2h2v-1h1v1h2v-1h1v1h2v-1h1v1h2v-1h1v1h2v-1h1v1h2v-1h1v1h2v-1h1v1h1v1h1v-2h1v2h2v-2h1v2h2v-1h1v1h2v-1h1v1h2v-1h1v1h2v-1h1v1h2v-1h1v1h2v-1h1v1h2v-1h1v1h2v-1h1v1h2v-1h1v1h2v-1h1v1h2v-1h1v1h2v-1h1v1h2v-1h1v1h2v-1h1v1h2v-1h1v1h2v-1h1v1h2v-1h1v1h2v-1h1v1h2v-1h1v1h2v-1h1v1h2v-1h1v1h2v-1h1v1h2v-1h1v1h2v-1h1v1h2v-1h1v1h2v-1h1v1h2v-1h1v1h2v-1h1v1h2v-1h1v1h2v-1h1v1h2v-1h1v1h2v-1h1v1h2v-1h1v1h2v-1h1v1h2v-1h1v1h2v-1h1v1h2V218h-108v-1h-29v-1h-19v-1h-11v-1h-10v-1h-8v-1h-4v-1h-4v-1h-4v-1h-4v-1h-4v-1h-5v-1h-4v-1h-5v-1h-4v-1h-5v-1h-5v-1h-13v1h-5v1h-4v1h-2v1h-2v1h-2v1h-1v1h-2v1h-1v1h-1v1h-1v1h-1v1h-1v2h-1v1h-1v2h-1v1h-1v2h-1v2h-1v1h-1v2h-1v1h-1v2h-1v1h-1v2h-1v2h-1v2h-1v1h-1v2h-1v2h-1v2h-2v1h-7v-1h-4v-1h-1v-2h-1v-1h-1v-1h-1v-2h-1v-1h-1v-2h-1v-2h-1v-2h-1v-2h-1v-3h-1v-2h-1v-2h-1v-1h-1v-1h-1v-1h-269v1h-43v1h-19v1h-11v1h-10v1h-6v1h-6v1h-6v1h-6v1h-4v1h-4v1h-4v1h-4v1h-4v1h-4v1h-7v1h-11v1h-10v-1h-10v-1h-4v-1h-3v-1h-2v-1h-2v-1h-1v-1h-2v-1h-1v-1h-1v-1h-1v-1h-1v-1h-1v-2h-1v-1h-1v-1h-1v-2h-1v-1h-1v-1h-1v-2h-1v-1h-1v-1h-1v-2h-1v-1h-1v-2h-1v-1h-1v-1h-1v-2h-1v-1h-1v-1h-1v-2h-1v-1h-1v-2h-1v-1h-1v-1h-1v-1h-1v-1h-3v1h-1v1h-1v1h-1v2h-1v1h-1v2h-1v3h-1v2h-1v2h-1v2h-1v1h-1v3h-1v4h-1v2h-190z" fill="#1E4CFF"/>
<path d="M17,201h1v1h2v-1h1v1h2v-1h1v1h2v-1h1v1h2v-1h1v1h2v-1h1v1h2v-1h1v1h2v-1h1v1h2v-1h1v1h2v-1h1v1h2v-1h1v1h2v-1h1v1h2v-1h1v1h2v-1h1v1h2v-1h1v1h2v-1h1v1h2v-1h1v1h2v-1h1v1h2v-1h1v1h2v-1h1v1h2v-1h1v1h2v-1h1v1h2v-1h1v1h2v-1h1v1h2v-1h1v1h2v-1h1v1h2v-1h1v1h2v-1h1v1h2v-1h1v1h2v-1h1v1h2v-1h1v1h2v-1h1v1h2v-1h1v1h2v-1h1v1h2v-1h1v1h2v-1h1v1h2v-1h1v1h2v-1h1v1h2v-1h1v1h2v-1h1v1h2v-1h1v1h2v-1h1v1h2v-1h1v1h2v-1h1v1h2v-1h1v1h2v-1h1v1h2v-1h1v1h2v-1h1v1h2v-1h1v1h2v-1h1v1h2v-1h1v1h2v-1h1v1h2v-1h1v1h2v-1h1v1h2v-1h1v1h2v-1h1v1h2v-1h1v1h2v-1h1v1h2v-1h1v1h2v-1h1v1h2v-1h1v1h2v-1h1v1h2v-1h1v1h1v-2h1v-5h1v-2h1v-2h1v-2h1v-2h1v-2h1v-3h1v-1h1v-2h1v-2h2v-1h1v-2h3v-1h1v1h2v-1h1v2h1v1h1v1h1v2h1v1h1v1h1v2h1v2h2v2h1v2h2v2h1v2h2v3h1v1h2v3h1v1h1v1h1v2h1v1h1v1h1v2h1v1h2v2h3v2h3v1h1v1h1v-1h1v2h3v1h2v-1h1v1h3v1h2v-1h1v1h2v-1h1v1h2v-1h1v1h2v-1h1v1h2v-1h1v1h2v-1h1v1h2v-1h3v-1h1v1h2v-1h1v1h2v-1h3v-1h3v-1h1v1h1v-1h1v-1h1v1h2v-1h3v-1h3v-1h1v1h1v-1h1v-1h1v1h2v-1h3v-1h1v1h2v-1h3v-1h1v1h2v-1h3v-1h1v1h2v-1h3v-1h1v1h2v-1h3v-1h1v1h2v-1h1v1h1v-1h4v-1h1v1h2v-1h1v1h2v-1h3v-1h1v1h2v-1h1v1h2v-1h1v1h2v-1h1v1h1v-1h7v-1h1v1h2v-1h1v1h2v-1h1v1h2v-1h1v1h2v-1h1v1h2v-1h1v1h2v-1h1v1h2v-1h1v1h2v-1h12v-1h1v1h2v-1h1v1h2v-1h1v1h2v-1h1v1h2v-1h1v1h2v-1h1v1h2v-1h1v1h2v-1h1v1h2v-1h1v1h2v-1h1v1h2v-1h1v1h2v-1h1v1h2v-1h1v1h2v-1h1v1h2v-1h1v1h2v-1h1v1h2v-1h1v1h2v-1h1v1h2v-1h1v1h2v-1h1v1h2v-1h1v1h2v-1h1v1h2v-1h1v1h2v-1h1v1h2v-1h1v1h2v-1h1v1h2v-1h1v1h2v-1h1v1h2v-1h1v1h2v-1h1v1h2v-1h1v1h2v-1h1v1h2v-1h1v1h2v-1h1v1h2v-1h1v1h2v-1h1v1h2v-1h1v1h2v-1h1v1h2v-1h1v1h2v-1h1v1h2v-1h1v1h2v-1h1v1h2v-1h1v1h2v-1h1v1h2v-1h1v1h2v-1h1v1h2v-1h1v1h2v-1h1v1h2v-1h1v1h2v-1h1v1h2v-1h1v1h2v-1h1v1h2v-1h1v1h2v-1h1v1h2v-1h1v1h2v-1h1v1h2v-1h1v1h2v-1h1v1h2v-1h1v1h2v-1h1v1h2v-1h1v1h2v-1h1v1h2v-1h1v1h2v-1h1v1h2v-1h1v1h2v-1h1v1h2v-1h1v1h2v-1h1v1h2v-1h1v1h2v-1h1v1h2v-1h1v1h2v-1h1v1h2v-1h1v1h2v-1h1v1h2v-1h1v1h2v-1h1v1h2v-1h1v1h2v-1h1v1h2v-1h1v1h2v-1h1v1h2v-1h1v1h2v-1h1v1h2v-1h1v1h2v-1h1v1h2v-1h1v1h2v-1h1v1h2v-1h1v1h2v-1h1v1h2v-1h1v1h2v-1h1v1h2v-1h1v1h2v-1h1v1h2v-1h1v1h2v-1h1v1h2v-1h1v1h1v1h1v1h1v3h1v2h1v1h1v3h1v3h1v1h1v3h1v1h1v1h1v2h1v1h2v2h1v1h1v-1h1v1h2v-1h1v1h2v-2h2v-2h1v-3h1v-1h1v-2h1v-2h1v-1h1v-1h1v-3h1v-1h1v-1h1v-3h2v-2h1v-3h1v-1h1v-1h1v-2h2v-1h1v-2h2v-1h1v-1h2v-1h1v-2h1v1h1v-1h1v-1h3v-1h3v-1h1v1h2v-1h3v-1h1v1h2v-1h1v1h2v-1h1v1h2v-1h1v1h2v-1h1v1h2v-1h1v1h3v1h2v-1h1v1h1v1h1v-1h1v1h3v1h2v-1h1v1h1v1h1v-1h1v1h3v1h2v-1h1v1h1v1h1v-1h1v1h3v1h2v-1h1v2h2v-1h1v1h3v1h3v1h2v-1h1v1h1v1h1v-1h1v1h3v1h2v-1h1v1h2v-1h1v1h3v1h2v-1h1v1h2v-1h1v1h4v1h1v-1h1v1h2v-1h1v1h2v-1h1v1h2v-1h1v1h4v1h1v-1h1v1h2v-1h1v1h2v-1h1v1h2v-1h1v1h2v-1h1v1h7v1h1v-1h1v1h2v-1h1v1h2v-1h1v1h2v-1h1v1h2v-1h1v1h2v-1h1v1h2v-1h1v1h2v-1h1v1h102V217h-2v1h-1v-1h-2v1h-1v-1h-2v1h-1v-1h-2v1h-1v-1h-2v1h-1v-1h-2v1h-1v-1h-2v1h-1v-1h-2v1h-1v-1h-2v1h-1v-1h-2v1h-1v-1h-2v1h-1v-1h-2v1h-1v-1h-2v1h-1v-1h-2v1h-1v-1h-2v1h-1v-1h-2v1h-1v-1h-2v1h-1v-1h-2v1h-1v-1h-2v1h-1v-1h-2v1h-1v-1h-2v1h-1v-1h-2v1h-1v-1h-2v1h-1v-1h-2v1h-1v-1h-2v1h-1v-1h-2v1h-1v-1h-2v1h-1v-1h-2v1h-1v-1h-2v1h-1v-1h-2v1h-1v-1h-2v1h-1v-1h-2v1h-1v-1h-2v1h-1v-1h-2v1h-1v-1h-6v-1h-2v1h-1v-1h-2v1h-1v-1h-2v1h-1v-1h-2v1h-1v-1h-2v1h-1v-1h-2v1h-1v-1h-2v1h-1v-1h-2v1h-1v-1h-6v-1h-2v1h-1v-1h-2v1h-1v-1h-2v1h-1v-1h-2v1h-1v-1h-6v-1h-2v1h-1v-1h-2v1h-1v-1h-2v1h-1v-1h-3v-1h-2v1h-1v-1h-2v1h-1v-1h-3v-1h-2v1h-1v-1h-2v1h-1v-1h-3v-1h-3v-1h-2v1h-1v-1h-1v-1h-1v1h-1v-1h-3v-1h-3v-1h-2v1h-1v-1h-1v-1h-1v1h-1v-1h-3v-1h-2v1h-1v-1h-1v-1h-1v1h-1v-1h-3v-1h-2v1h-1v-1h-1v-1h-1v1h-1v-1h-3v-1h-2v1h-1v-1h-3v-1h-2v1h-1v-1h-2v1h-1v-1h-2v1h-1v-1h-2v1h-3v1h-1v-1h-2v1h-3v1h-3v1h-2v1h-1v1h-2v1h-1v1h-2v1h-1v2h-2v1h-1v2h-1v1h-1v2h-1v2h-1v1h-1v2h-1v2h-1v1h-1v1h-1v3h-2v2h-1v3h-1v1h-1v1h-1v3h-1v1h-1v2h-1v1h-8v-1h-1v1h-1v-1h-2v-1h-1v-2h-1v-1h-2v-3h-1v-1h-1v-1h-1v-3h-1v-2h-1v-2h-1v-3h-1v-2h-1v-1h-1v-2h-1v-1h-2v-1h-2v1h-1v-1h-2v1h-1v-1h-2v1h-1v-1h-2v1h-1v-1h-2v1h-1v-1h-2v1h-1v-1h-2v1h-1v-1h-2v1h-1v-1h-2v1h-1v-1h-2v1h-1v-1h-2v1h-1v-1h-2v1h-1v-1h-2v1h-1v-1h-2v1h-1v-1h-2v1h-1v-1h-2v1h-1v-1h-2v1h-1v-1h-2v1h-1v-1h-2v1h-1v-1h-2v1h-1v-1h-2v1h-1v-1h-2v1h-1v-1h-2v1h-1v-1h-2v1h-1v-1h-2v1h-1v-1h-2v1h-1v-1h-2v1h-1v-1h-2v1h-1v-1h-2v1h-1v-1h-2v1h-1v-1h-2v1h-1v-1h-2v1h-1v-1h-2v1h-1v-1h-2v1h-1v-1h-2v1h-1v-1h-2v1h-1v-1h-2v1h-1v-1h-2v1h-1v-1h-2v1h-1v-1h-2v1h-1v-1h-2v1h-1v-1h-2v1h-1v-1h-2v1h-1v-1h-2v1h-1v-1h-2v1h-1v-1h-2v1h-1v-1h-2v1h-1v-1h-2v1h-1v-1h-2v1h-1v-1h-2v1h-1v-1h-2v1h-1v-1h-2v1h-1v-1h-2v1h-1v-1h-2v1h-1v-1h-2v1h-1v-1h-2v1h-1v-1h-2v1h-1v-1h-2v1h-1v-1h-2v1h-1v-1h-2v1h-1v-1h-2v1h-1v-1h-2v1h-1v-1h-2v1h-1v-1h-2v1h-1v-1h-2v1h-1v-1h-2v1h-1v-1h-2v1h-1v-1h-2v1h-1v-1h-2v1h-1v-1h-2v1h-1v-1h-2v1h-1v-1h-2v1h-1v-1h-2v1h-1v-1h-2v1h-1v-1h-2v1h-1v-1h-2v1h-1v-1h-2v1h-1v-1h-2v1h-1v-1h-2v1h-1v-1h-2v1h-1v-1h-2v1h-1v-1h-2v1h-1v-1h-2v1h-1v-1h-2v1h-1v-1h-2v1h-1v-1h-2v1h-1v-1h-2v1h-1v-1h-2v1h-1v-1h-2v1h-1v-1h-1v1h-13v1h-1v-1h-2v1h-1v-1h-2v1h-1v-1h-2v1h-1v-1h-2v1h-1v-1h-2v1h-1v-1h-2v1h-1v-1h-2v1h-1v-1h-2v1h-1v-1h-2v1h-1v-1h-2v1h-6v1h-1v-1h-2v1h-1v-1h-2v1h-1v-1h-2v1h-1v-1h-2v1h-3v1h-1v-1h-2v1h-1v-1h-2v1h-1v-1h-2v1h-3v1h-1v-1h-2v1h-1v-1h-2v1h-3v1h-1v-1h-2v1h-3v1h-1v-1h-2v1h-3v1h-1v-1h-2v1h-3v1h-1v-1h-2v1h-3v1h-1v-1h-1v1h-1v1h-1v-1h-2v1h-3v1h-3v1h-1v-1h-1v1h-1v1h-1v-1h-2v1h-3v1h-3v1h-1v-1h-2v1h-1v-1h-1v1h-1v1h-1v-1h-2v1h-1v-1h-2v1h-1v-1h-2v1h-11v-1h-1v1h-1v-1h-2v1h-1v-1h-2v1h-1v-1h-3v-1h-2v1h-1v-2h-3v-1h-3v-1h-1v-1h-2v-1h-1v-1h-2v-2h-1v-1h-2v-3h-1v-1h-2v-3h-1v-1h-1v-1h-1v-2h-1v-1h-1v-1h-1v-2h-1v-1h-1v-1h-1v-2h-1v-1h-1v-1h-1v-2h-1v-1h-1v-1h-1v-2h-1v-2h-2v-2h-1v-1h-1v-1h-3v2h-2v1h-1v3h-2v2h-1v3h-1v2h-1v2h-1v2h-1v1h-1v3h-1v5h-1v1h-2v1h-1v-1h-2v1h-1v-1h-2v1h-1v-1h-2v1h-1v-1h-2v1h-1v-1h-2v1h-1v-1h-2v1h-1v-1h-2v1h-1v-1h-2v1h-1v-1h-2v1h-1v-1h-2v1h-1v-1h-2v1h-1v-1h-2v1h-1v-1h-2v1h-1v-1h-2v1h-1v-1h-2v1h-1v-1h-2v1h-1v-1h-2v1h-1v-1h-2v1h-1v-1h-2v1h-1v-1h-2v1h-1v-1h-2v1h-1v-1h-2v1h-1v-1h-2v1h-1v-1h-2v1h-1v-1h-2v1h-1v-1h-2v1h-1v-1h-2v1h-1v-1h-2v1h-1v-1h-2v1h-1v-1h-2v1h-1v-1h-2v1h-1v-1h-2v1h-1v-1h-2v1h-1v-1h-2v1h-1v-1h-2v1h-1v-1h-2v1h-1v-1h-2v1h-1v-1h-2v1h-1v-1h-2v1h-1v-1h-2v1h-1v-1h-2v1h-1v-1h-2v1h-1v-1h-2v1h-1v-1h-2v1h-1v-1h-2v1h-1v-1h-2v1h-1v-1h-2v1h-1v-1h-2v1h-1v-1h-2v1h-1v-1h-2v1h-1v-1h-2v1h-1v-1h-2v1h-1v-1h-2v1h-1v-1h-2v1h-1v-1h-2v1h-1v-1h-2v1h-1v-1h-2v1h-1v-1h-2v1h-1v-1h-2v1h-1v-1h-2v1h-1v-1h-2v1h-1v-1h-2v1h-1v-1h-1z" fill="#1668FF"/>
<path d="M17,204h188v-2h1v-4h1v-3h1v-2h1v-2h1v-2h1v-2h1v-2h1v-2h1v-2h1v-2h1v-1h1v-1h1v-1h7v1h1v1h1v1h1v2h1v1h1v1h1v2h1v1h1v2h1v1h1v1h1v2h1v1h1v1h1v2h1v1h1v1h1v2h1v1h1v2h1v1h1v1h1v2h1v1h1v1h1v1h1v1h1v1h1v1h1v1h2v1h1v1h3v1h2v1h4v1h7v1h14v-1h9v-1h5v-1h4v-1h4v-1h5v-1h4v-1h4v-1h4v-1h6v-1h6v-1h6v-1h7v-1h10v-1h11v-1h22v-1h49v-1h160v1h103v1h1v1h1v2h1v3h1v2h1v2h1v2h1v3h1v1h1v2h1v1h1v2h1v1h1v1h1v1h3v1h5v-1h1v-2h1v-2h1v-1h1v-2h1v-2h1v-2h1v-1h1v-2h1v-1h1v-2h1v-1h1v-2h1v-2h1v-1h1v-2h1v-2h1v-1h1v-1h1v-2h1v-1h1v-1h1v-1h2v-1h1v-1h1v-1h2v-1h2v-1h2v-1h5v-1h25v1h5v1h4v1h5v1h4v1h5v1h4v1h4v1h4v1h4v1h5v1h6v1h10v1h10v1h18v1h27v1h112V216h-1v-5h-1v5h-2v-5h-1v5h-2v-5h-1v5h-2v-5h-1v5h-2v-5h-1v5h-2v-5h-1v5h-2v-5h-1v5h-2v-5h-1v5h-2v-5h-1v5h-2v-5h-1v5h-2v-5h-1v5h-2v-5h-1v5h-2v-5h-1v5h-2v-5h-1v5h-2v-5h-1v5h-2v-5h-1v5h-2v-5h-1v5h-2v-5h-1v5h-2v-5h-1v5h-2v-5h-1v5h-2v-5h-1v5h-2v-5h-1v5h-2v-5h-1v5h-2v-5h-1v5h-2v-5h-1v5h-2v-5h-1v5h-2v-5h-1v5h-2v-5h-1v5h-2v-5h-1v5h-2v-5h-1v5h-2v-5h-1v5h-2v-5h-1v5h-2v-5h-1v5h-2v-5h-1v5h-2v-5h-1v5h-2v-5h-1v5h-2v-5h-1v5h-2v-5h-1v5h-2v-5h-1v5h-2v-5h-1v5h-2v-6h-1v6h-2v-6h-1v6h-2v-6h-1v6h-2v-6h-1v6h-2v-6h-1v5h-2v-5h-1v5h-2v-5h-1v5h-2v-5h-1v5h-2v-6h-1v6h-2v-6h-1v6h-2v-6h-1v5h-2v-5h-1v5h-2v-5h-1v5h-2v-5h-1v5h-2v-6h-1v6h-1v-1h-1v-5h-1v5h-2v-5h-1v5h-2v-6h-1v6h-2v-6h-1v5h-2v-5h-1v5h-2v-6h-1v6h-2v-6h-1v5h-2v-6h-1v5h-2v-6h-1v6h-1v-1h-1v-5h-1v5h-2v-6h-1v5h-2v-6h-1v6h-1v-1h-1v-5h-1v5h-2v-6h-1v5h-2v-6h-1v5h-2v-5h-1v5h-1v-1h-1v-5h-1v5h-2v-6h-1v5h-2v-5h-1v5h-2v-6h-1v5h-2v-6h-1v5h-2v-5h-1v5h-2v-6h-1v5h-2v-5h-1v5h-2v-5h-1v5h-2v-5h-1v5h-2v-5h-1v5h-2v-5h-1v6h-2v-5h-1v5h-1v1h-1v-6h-1v6h-2v-4h-1v5h-1v1h-1v-5h-1v6h-1v1h-1v-5h-1v6h-1v1h-1v-5h-1v7h-1v1h-1v-4h-1v7h-1v1h-1v-4h-1v7h-1v2h-1v-4h-1v7h-1v2h-1v-4h-1v7h-1v1h-1v-4h-1v8h-1v1h-1v-3h-1v7h-1v2h-1v-4h-1v6h-10v-1h-2v-1h-1v-1h-1v-1h-1v-2h-1v-1h-1v-2h-1v-1h-1v-3h-1v-2h-1v-2h-1v-2h-1v-3h-1v-1h-1v-2h-1v-6h-1v5h-2v-5h-1v5h-2v-5h-1v5h-2v-5h-1v5h-2v-5h-1v5h-2v-5h-1v5h-2v-5h-1v5h-2v-5h-1v5h-2v-5h-1v5h-2v-5h-1v5h-2v-5h-1v5h-2v-5h-1v5h-2v-5h-1v5h-2v-5h-1v5h-2v-5h-1v5h-2v-5h-1v5h-2v-5h-1v5h-2v-5h-1v5h-2v-5h-1v5h-2v-5h-1v5h-2v-5h-1v5h-2v-5h-1v5h-2v-5h-1v5h-2v-5h-1v5h-2v-5h-1v5h-2v-5h-1v5h-2v-5h-1v5h-2v-5h-1v5h-2v-5h-1v5h-2v-5h-1v5h-2v-5h-1v5h-2v-5h-1v5h-2v-5h-1v5h-2v-5h-1v5h-2v-5h-1v5h-2v-5h-1v5h-2v-5h-1v5h-2v-5h-1v5h-2v-5h-1v5h-2v-5h-1v5h-2v-5h-1v5h-2v-5h-1v5h-2v-5h-1v5h-2v-5h-1v5h-2v-5h-1v5h-2v-5h-1v5h-2v-5h-1v5h-2v-5h-1v5h-2v-5h-1v5h-2v-5h-1v5h-2v-5h-1v5h-2v-5h-1v5h-2v-5h-1v5h-2v-5h-1v5h-2v-5h-1v5h-2v-5h-1v5h-2v-5h-1v5h-2v-5h-1v5h-2v-5h-1v5h-2v-5h-1v5h-2v-5h-1v5h-2v-5h-1v5h-2v-5h-1v5h-2v-5h-1v5h-2v-5h-1v5h-2v-5h-1v5h-2v-5h-1v5h-2v-5h-1v5h-2v-5h-1v5h-2v-5h-1v5h-2v-5h-1v5h-2v-5h-1v5h-2v-5h-1v5h-2v-5h-1v5h-2v-5h-1v5h-2v-5h-1v5h-2v-5h-1v5h-2v-5h-1v5h-2v-5h-1v5h-2v-5h-1v5h-2v-5h-1v5h-2v-5h-1v5h-2v-5h-1v5h-2v-5h-1v5h-2v-5h-1v5h-2v-5h-1v5h-2v-5h-1v5h-2v-5h-1v5h-2v-5h-1v5h-2v-5h-1v5h-2v-5h-1v5h-2v-5h-1v5h-2v-5h-1v5h-2v-5h-1v5h-1v1h-1v-6h-1v6h-2v-6h-1v6h-2v-6h-1v6h-2v-6h-1v6h-2v-6h-1v6h-2v-6h-1v6h-2v-6h-1v6h-2v-5h-1v5h-2v-5h-1v5h-2v-5h-1v5h-2v-5h-1v5h-2v-5h-1v5h-2v-5h-1v6h-2v-6h-1v6h-2v-6h-1v6h-2v-6h-1v6h-2v-5h-1v5h-2v-5h-1v6h-2v-6h-1v6h-2v-5h-1v5h-2v-5h-1v5h-2v-5h-1v6h-2v-6h-1v6h-2v-5h-1v5h-2v-5h-1v6h-2v-5h-1v5h-2v-5h-1v6h-2v-5h-1v5h-2v-5h-1v6h-2v-5h-1v5h-2v-5h-1v6h-2v-5h-1v5h-2v-5h-1v6h-2v-5h-1v6h-2v-5h-1v5h-1v1h-1v-6h-1v6h-2v-5h-1v6h-2v-5h-1v6h-2v-5h-1v5h-1v1h-1v-6h-1v6h-2v-5h-1v6h-2v-5h-1v5h-2v-5h-1v6h-2v-6h-1v6h-2v-5h-1v5h-2v-5h-1v5h-2v-5h-1v5h-2v-5h-1v5h-2v-5h-1v5h-2v-5h-1v5h-2v-5h-1v5h-2v-5h-1v5h-2v-6h-1v5h-2v-6h-1v6h-1v-1h-1v-6h-1v5h-2v-6h-1v5h-2v-6h-1v4h-1v-1h-1v-6h-1v5h-1v-1h-1v-7h-1v4h-1v-1h-1v-6h-1v4h-1v-2h-1v-7h-1v4h-1v-1h-1v-7h-1v4h-1v-1h-1v-7h-1v4h-1v-1h-1v-7h-1v4h-1v-1h-1v-7h-1v4h-1v-1h-1v-7h-1v4h-1v-2h-1v-6h-1v4h-1v1h-1v-5h-1v6h-1v1h-1v-4h-1v7h-1v1h-1v-3h-1v7h-1v3h-1v-4h-1v7h-1v2h-1v-2h-1v9h-1v2h-1v-5h-1v5h-2v-5h-1v5h-2v-5h-1v5h-2v-5h-1v5h-2v-5h-1v5h-2v-5h-1v5h-2v-5h-1v5h-2v-5h-1v5h-2v-5h-1v5h-2v-5h-1v5h-2v-5h-1v5h-2v-5h-1v5h-2v-5h-1v5h-2v-5h-1v5h-2v-5h-1v5h-2v-5h-1v5h-2v-5h-1v5h-2v-5h-1v5h-2v-5h-1v5h-2v-5h-1v5h-2v-5h-1v5h-2v-5h-1v5h-2v-5h-1v5h-2v-5h-1v5h-2v-5h-1v5h-2v-5h-1v5h-2v-5h-1v5h-2v-5h-1v5h-2v-5h-1v5h-2v-5h-1v5h-2v-5h-1v5h-2v-5h-1v5h-2v-5h-1v5h-2v-5h-1v5h-2v-5h-1v5h-2v-5h-1v5h-2v-5h-1v5h-2v-5h-1v5h-2v-5h-1v5h-2v-5h-1v5h-2v-5h-1v5h-2v-5h-1v5h-2v-5h-1v5h-2v-5h-1v5h-2v-5h-1v5h-2v-5h-1v5h-2v-5h-1v5h-2v-5h-1v5h-2v-5h-1v5h-2v-5h-1v5h-2v-5h-1v5h-2v-5h-1v5h-2v-5h-1v5h-2v-5h-1v5h-2v-5h-1v5h-2v-5h-1v5h-2v-5h-1v5h-2v-5h-1v5h-2v-5h-1v5h-2v-5h-1v5h-2v-5h-1v5h-2v-5h-1v5h-2v-5h-1v5h-2z" fill="#10A0FF"/>
<path d="M17,206h1v-2h2v2h1v-2h2v2h1v-2h2v2h1v-2h2v2h1v-2h2v2h1v-2h2v2h1v-2h2v2h1v-2h2v2h1v-2h2v2h1v-2h2v2h1v-2h2v2h1v-2h2v2h1v-2h2v2h1v-2h2v2h1v-2h2v2h1v-2h2v2h1v-2h2v2h1v-2h2v2h1v-2h2v2h1v-2h2v2h1v-2h2v2h1v-2h2v2h1v-2h2v2h1v-2h2v2h1v-2h2v2h1v-2h2v2h1v-2h2v2h1v-2h2v2h1v-2h2v2h1v-2h2v2h1v-2h2v2h1v-2h2v2h1v-2h2v2h1v-2h2v2h1v-2h2v2h1v-2h2v2h1v-2h2v2h1v-2h2v2h1v-2h2v2h1v-2h2v2h1v-2h2v2h1v-2h2v2h1v-2h2v2h1v-2h2v2h1v-2h2v2h1v-2h2v2h1v-2h2v2h1v-2h2v2h1v-2h2v2h1v-2h2v2h1v-2h2v2h1v-2h2v2h1v-2h2v2h1v-2h2v2h1v-2h2v2h1v-2h2v2h1v-2h2v2h1v-2h2v2h1v-2h2v2h1v-2h2v2h1v-2h2v2h1v-2h2v2h1v-2h1v-2h1v-2h1v-5h1v-1h2v-4h1v-3h1v1h1v-5h1v-1h2v-3h1v-1h1v1h1v-2h1v-1h1v2h1v-2h2v3h1v-1h1v1h1v3h1v-1h1v2h1v3h1v-1h1v2h1v3h2v1h1v3h2v1h1v4h1v-1h1v1h1v4h1v-1h1v1h1v4h1v-1h1v1h1v4h1v-1h1v1h1v3h1v-1h1v1h1v3h1v-2h1v1h1v3h1v-2h2v3h1v-2h2v3h1v-2h2v2h1v-2h1v1h1v2h1v-2h2v2h1v-2h2v3h1v-3h2v3h1v-2h2v2h1v-3h2v3h1v-3h2v2h1v-2h2v2h1v-2h2v2h1v-3h2v2h1v-2h2v2h1v-3h2v2h1v-2h1v-1h1v2h1v-2h2v2h1v-3h2v2h1v-3h2v2h1v-2h1v-1h1v2h1v-2h2v2h1v-3h2v2h1v-2h1v-1h1v2h1v-2h2v2h1v-2h1v-1h1v2h1v-2h2v2h1v-3h2v2h1v-2h2v2h1v-3h2v2h1v-2h2v2h1v-3h2v2h1v-2h2v2h1v-2h2v2h1v-2h1v-1h1v3h1v-3h2v2h1v-2h2v2h1v-2h2v2h1v-3h2v2h1v-2h2v2h1v-2h2v2h1v-2h2v2h1v-2h2v2h1v-2h2v2h1v-3h2v3h1v-3h2v2h1v-2h2v2h1v-2h2v2h1v-2h2v2h1v-2h2v2h1v-2h2v2h1v-2h2v2h1v-2h2v2h1v-2h2v2h1v-2h2v2h1v-2h2v2h1v-2h2v2h1v-2h1v-1h1v3h1v-3h2v3h1v-3h2v3h1v-3h2v3h1v-3h2v2h1v-2h2v2h1v-2h2v2h1v-2h2v2h1v-2h2v2h1v-2h2v2h1v-2h2v2h1v-2h2v2h1v-2h2v2h1v-2h2v2h1v-2h2v2h1v-2h2v2h1v-2h2v2h1v-2h2v2h1v-2h2v2h1v-2h2v2h1v-2h2v2h1v-2h2v2h1v-2h2v2h1v-2h2v2h1v-2h2v2h1v-2h2v2h1v-2h2v2h1v-2h2v2h1v-2h2v2h1v-2h2v2h1v-2h2v2h1v-2h2v2h1v-2h2v2h1v-2h2v2h1v-2h2v2h1v-2h2v2h1v-2h2v2h1v-2h2v2h1v-2h2v2h1v-2h2v2h1v-2h2v2h1v-2h2v2h1v-2h2v2h1v-2h2v2h1v-2h2v2h1v-2h2v2h1v-2h2v2h1v-2h2v2h1v-2h2v2h1v-2h2v2h1v-2h2v2h1v-2h2v2h1v-2h2v2h1v-2h2v2h1v-2h2v2h1v-2h2v2h1v-2h2v2h1v-2h2v2h1v-2h2v2h1v-2h2v2h1v-2h2v2h1v-2h2v2h1v-2h2v2h1v-2h2v2h1v-2h2v2h1v-2h2v2h1v-2h2v2h1v-2h2v2h1v-2h2v2h1v-2h2v2h1v-2h2v2h1v-2h2v2h1v-2h2v2h1v-2h2v2h1v-2h2v2h1v-2h2v2h1v-2h2v2h1v-2h2v2h1v-2h2v2h1v-2h2v2h1v-2h2v2h1v-2h2v2h1v-2h2v2h1v-2h2v2h1v-2h2v2h1v-2h2v2h1v-2h2v2h1v-2h2v2h1v-2h2v2h1v-2h2v2h1v-2h2v2h1v-2h2v2h1v-2h2v2h1v-1h2v2h1v2h1v2h1v2h1v3h1v2h1v2h1v2h1v1h1v2h1v1h1v1h1v1h1v1h1v1h7v-1h1v-1h1v-2h1v1h1v-4h1v-2h2v-4h1v-1h2v-3h1v-2h1v1h1v-4h1v-2h1v1h1v-4h1v-1h1v1h1v-4h1v-1h1v1h1v-3h1v-1h1v2h1v-3h1v-1h1v2h1v-3h2v1h1v-2h1v-1h1v2h1v-2h2v2h1v-3h2v2h1v-3h2v2h1v-2h2v2h1v-2h2v2h1v-2h2v2h1v-2h2v2h1v-2h2v2h1v-2h1v1h1v2h1v-2h2v3h1v-2h2v2h1v-2h1v1h1v2h1v-2h2v3h1v-2h2v2h1v-2h1v1h1v2h1v-2h2v3h1v-2h2v2h1v-2h1v1h1v2h1v-2h2v3h1v-2h2v3h1v-2h2v2h1v-2h1v1h1v2h1v-2h2v3h1v-2h2v2h1v-2h1v1h1v2h1v-2h2v2h1v-2h2v3h1v-2h2v2h1v-2h2v2h1v-2h2v3h1v-3h1v1h1v2h1v-2h2v2h1v-2h2v2h1v-2h2v3h1v-3h1v1h1v2h1v-2h2v2h1v-2h2v2h1v-2h2v2h1v-2h2v2h1v-2h2v3h1v-3h2v3h1v-2h2v2h1v-2h2v2h1v-2h2v2h1v-2h2v2h1v-2h2v2h1v-2h2v2h1v-2h2v2h1v-2h2v3h1v-3h2v3h1v-3h2v3h1v-2h2v2h1v-2h2v2h1v-2h2v2h1v-2h2v2h1v-2h2v2h1v-2h2v2h1v-2h2v2h1v-2h2v2h1v-2h2v2h1v-2h2v2h1v-2h2v2h1v-2h2v2h1v-2h2v2h1v-2h2v2h1v-2h2v2h1v-2h2v2h1v-2h2v2h1v-2h2v2h1v-2h2v2h1v-2h2v2h1v-2h2v2h1v-2h2v2h1v-2h2v2h1v-2h2v2h1v-2h2v2h1v-2h2v2h1v-2h2v2h1v-2h2v2h1v-2h2v2h1v-2h2v2h1v-2h2v2h1v-2h2v2h1v-2h2v2h1v-2h2v2h1V211h-2v-2h-1v2h-2v-2h-1v2h-2v-2h-1v2h-2v-2h-1v2h-2v-2h-1v2h-2v-2h-1v2h-2v-2h-1v2h-2v-2h-1v2h-2v-2h-1v2h-2v-2h-1v2h-2v-2h-1v2h-2v-2h-1v2h-2v-2h-1v2h-2v-2h-1v2h-2v-2h-1v2h-2v-2h-1v2h-2v-2h-1v2h-2v-2h-1v2h-2v-2h-1v2h-2v-2h-1v2h-2v-2h-1v2h-2v-2h-1v2h-2v-2h-1v2h-2v-2h-1v2h-2v-2h-1v2h-2v-2h-1v2h-2v-2h-1v2h-2v-2h-1v2h-2v-2h-1v2h-2v-2h-1v2h-2v-2h-1v2h-2v-2h-1v2h-2v-2h-1v2h-2v-2h-1v2h-2v-2h-1v2h-2v-2h-1v2h-2v-2h-1v2h-2v-2h-1v2h-2v-2h-1v2h-2v-2h-1v2h-2v-2h-1v2h-2v-2h-1v2h-2v-2h-1v2h-1v-1h-1v-2h-1v2h-2v-2h-1v2h-2v-2h-1v2h-2v-2h-1v2h-2v-2h-1v2h-2v-2h-1v2h-2v-2h-1v1h-2v-2h-1v2h-2v-2h-1v2h-2v-2h-1v2h-2v-2h-1v2h-2v-3h-1v2h-2v-2h-1v2h-2v-2h-1v2h-2v-2h-1v1h-2v-2h-1v2h-2v-2h-1v2h-2v-2h-1v1h-2v-2h-1v2h-2v-3h-1v2h-2v-2h-1v1h-2v-2h-1v2h-1v-1h-1v-2h-1v2h-2v-3h-1v2h-2v-2h-1v1h-2v-2h-1v2h-1v-1h-1v-2h-1v2h-2v-2h-1v1h-2v-2h-1v2h-2v-3h-1v2h-2v-2h-1v1h-2v-2h-1v2h-2v-3h-1v2h-2v-2h-1v1h-2v-2h-1v2h-2v-2h-1v2h-2v-2h-1v2h-2v-2h-1v2h-2v-2h-1v2h-2v-1h-1v2h-2v-2h-1v3h-2v-2h-1v2h-1v1h-1v-2h-1v3h-2v-1h-1v3h-2v-1h-1v3h-1v1h-1v-1h-1v3h-1v1h-1v-1h-1v4h-1v1h-2v4h-1v1h-2v4h-1v1h-2v3h-1v2h-1v-1h-1v4h-1v2h-2v4h-1v1h-1v1h-11v-1h-1v-1h-1v-1h-1v-1h-1v-1h-1v-2h-1v-1h-1v-2h-1v-2h-1v-2h-1v-3h-1v-2h-1v-2h-1v-4h-2v-1h-1v-2h-1v2h-2v-2h-1v2h-2v-2h-1v2h-2v-2h-1v2h-2v-2h-1v2h-2v-2h-1v2h-2v-2h-1v2h-2v-2h-1v2h-2v-2h-1v2h-2v-2h-1v2h-2v-2h-1v2h-2v-2h-1v2h-2v-2h-1v2h-2v-2h-1v2h-2v-2h-1v2h-2v-2h-1v2h-2v-2h-1v2h-2v-2h-1v2h-2v-2h-1v2h-2v-2h-1v2h-2v-2h-1v2h-2v-2h-1v2h-2v-2h-1v2h-2v-2h-1v2h-2v-2h-1v2h-2v-2h-1v2h-2v-2h-1v2h-2v-2h-1v2h-2v-2h-1v2h-2v-2h-1v2h-2v-2h-1v2h-2v-2h-1v2h-2v-2h-1v2h-2v-2h-1v2h-2v-2h-1v2h-2v-2h-1v2h-2v-2h-1v2h-2v-2h-1v2h-2v-2h-1v2h-2v-2h-1v2h-2v-2h-1v2h-2v-2h-1v2h-2v-2h-1v2h-2v-2h-1v2h-2v-2h-1v2h-2v-2h-1v2h-2v-2h-1v2h-2v-2h-1v2h-2v-2h-1v2h-2v-2h-1v2h-2v-2h-1v2h-2v-2h-1v2h-2v-2h-1v2h-2v-2h-1v2h-2v-2h-1v2h-2v-2h-1v2h-2v-2h-1v2h-2v-2h-1v2h-2v-2h-1v2h-2v-2h-1v2h-2v-2h-1v2h-2v-2h-1v2h-2v-2h-1v2h-2v-2h-1v2h-2v-2h-1v2h-2v-2h-1v2h-2v-2h-1v2h-2v-2h-1v2h-2v-2h-1v2h-2v-2h-1v2h-2v-2h-1v2h-2v-2h-1v2h-2v-2h-1v2h-2v-2h-1v2h-2v-2h-1v2h-2v-2h-1v2h-2v-2h-1v2h-2v-2h-1v2h-2v-2h-1v2h-2v-2h-1v2h-2v-2h-1v2h-2v-2h-1v2h-2v-2h-1v2h-2v-2h-1v2h-2v-2h-1v2h-2v-2h-1v2h-2v-2h-1v2h-2v-2h-1v2h-2v-2h-1v2h-2v-2h-1v2h-2v-2h-1v2h-2v-2h-1v2h-2v-2h-1v2h-2v-2h-1v2h-2v-2h-1v2h-2v-1h-1v2h-2v-2h-1v2h-2v-2h-1v2h-2v-2h-1v2h-2v-2h-1v2h-2v-2h-1v2h-2v-2h-1v2h-2v-2h-1v2h-2v-2h-1v2h-2v-2h-1v2h-2v-2h-1v2h-2v-2h-1v2h-1v1h-1v-2h-1v2h-2v-2h-1v2h-2v-2h-1v2h-2v-2h-1v2h-2v-2h-1v3h-2v-2h-1v2h-2v-2h-1v2h-2v-2h-1v2h-2v-1h-1v2h-2v-2h-1v2h-2v-2h-1v2h-2v-1h-1v2h-2v-2h-1v2h-2v-1h-1v2h-2v-2h-1v2h-2v-1h-1v2h-2v-2h-1v2h-2v-1h-1v2h-2v-2h-1v2h-1v1h-1v-2h-1v2h-2v-1h-1v2h-2v-2h-1v3h-2v-2h-1v2h-2v-1h-1v2h-2v-2h-1v3h-2v-2h-1v2h-1v1h-1v-2h-1v2h-2v-1h-1v2h-2v-2h-1v2h-2v-2h-1v3h-2v-2h-1v2h-2v-2h-1v2h-2v-2h-1v2h-2v-2h-1v2h-2v-2h-1v2h-2v-2h-1v2h-2v-2h-1v2h-2v-2h-1v2h-2v-2h-1v1h-2v-2h-1v2h-2v-3h-1v2h-2v-3h-1v2h-2v-3h-1v2h-1v-1h-1v-3h-1v1h-2v-3h-1v1h-1v-1h-1v-4h-1v1h-1v-1h-1v-3h-2v-1h-1v-4h-1v1h-1v-1h-1v-4h-1v1h-1v-2h-1v-3h-1v1h-1v-2h-1v-3h-1v1h-1v-2h-1v-3h-2v-1h-1v-3h-2v-1h-1v-3h-1v3h-2v-1h-1v3h-1v1h-2v3h-1v2h-2v4h-1v3h-1v-1h-1v4h-1v3h-1v2h-1v4h-2v-2h-1v2h-2v-2h-1v2h-2v-2h-1v2h-2v-2h-1v2h-2v-2h-1v2h-2v-2h-1v2h-2v-2h-1v2h-2v-2h-1v2h-2v-2h-1v2h-2v-2h-1v2h-2v-2h-1v2h-2v-2h-1v2h-2v-2h-1v2h-2v-2h-1v2h-2v-2h-1v2h-2v-2h-1v2h-2v-2h-1v2h-2v-2h-1v2h-2v-2h-1v2h-2v-2h-1v2h-2v-2h-1v2h-2v-2h-1v2h-2v-2h-1v2h-2v-2h-1v2h-2v-2h-1v2h-2v-2h-1v2h-2v-2h-1v2h-2v-2h-1v2h-2v-2h-1v2h-2v-2h-1v2h-2v-2h-1v2h-2v-2h-1v2h-2v-2h-1v2h-2v-2h-1v2h-2v-2h-1v2h-2v-2h-1v2h-2v-2h-1v2h-2v-2h-1v2h-2v-2h-1v2h-2v-2h-1v2h-2v-2h-1v2h-2v-2h-1v2h-2v-2h-1v2h-2v-2h-1v2h-2v-2h-1v2h-2v-2h-1v2h-2v-2h-1v2h-2v-2h-1v2h-2v-2h-1v2h-2v-2h-1v2h-2v-2h-1v2h-2v-2h-1v2h-2v-2h-1v2h-2v-2h-1v2h-2v-2h-1v2h-2v-2h-1v2h-2v-2h-1v2h-2v-2h-1v2h-2v-2h-1v2h-2v-2h-1v2h-2v-2h-1v2h-2v-2h-1v2h-2v-2h-1v2h-1z" fill="#00E2FF"/>
<path d="M17,368h2v-2h1v-1h1v3h2v-2h2v2h2v-2h1v2h2v-2h1v2h1v-3h1v3h2v-3h1v3h1v-3h1v3h1v-2h1v2h4v-2h1v2h1v-2h1v-1h1v1h4v2h1v-3h1v3h4v-2h1v2h1v-2h2v2h3v-3h1v3h2v-3h2v1h1v2h8v-2h1v2h1v-2h1v2h2v-3h1v1h1v2h1v-3h1v3h2v-3h3v3h3v-2h1v2h1v-3h1v3h1v-2h1v2h10v-2h3v2h2v-2h1v-1h1v3h5v-2h3v-1h1v3h2v-3h1v3h1v-2h3v-1h1v3h1v-2h1v2h2v-2h1v2h2v-2h1v2h2v-2h1v-1h1v3h1v-3h2v3h3v-2h2v2h3v-2h1v2h1v-2h1v2h6v-2h1v2h1v-2h1v-1h2v3h1v-3h2v3h3v-3h1v3h2v-2h1v2h6v-3h2v1h2v2h1v-3h1v3h4v-2h1v2h2v-3h1v3h2v-3h1v1h2v1h2v-3h1v2h1v-3h2v2h2v-3h1v2h1v-2h1v1h2v-3h1v2h3v-2h2v2h2v-2h1v2h6v-2h1v2h1v-2h1v2h9v-2h2v2h1v-1h2v1h2v-3h1v1h1v2h6v-2h1v2h1v-2h1v2h2v-2h1v2h4v-2h1v2h3v1h1v-2h1v2h1v-2h1v2h4v-3h1v3h1v-3h1v3h1v-2h1v2h2v-2h1v2h1v-2h1v2h6v-2h1v1h1v1h4v-2h1v2h2v-2h1v2h2v-1h1v-1h1v3h2v-2h1v2h1v-2h4v2h4v-1h1v1h1v-2h2v2h3v-2h4v2h1v-1h1v1h2v-2h1v2h4v-1h1v-1h1v2h4v-1h2v1h1v-2h1v2h1v-2h1v2h1v-1h2v1h6v-2h1v2h1v-1h1v-1h1v2h2v-1h1v1h1v1h1v-2h1v-1h2v3h3v-2h1v2h1v-2h1v2h1v-2h1v2h2v-2h1v2h2v-3h1v3h1v-2h1v2h2v-1h1v1h2v-2h1v-1h1v1h3v2h2v-3h1v1h1v2h4v-2h2v2h2v-2h1v-1h1v3h3v-2h1v2h6v-2h1v2h3v-2h1v-1h1v3h2v-1h1v1h1v-2h1v2h1v-2h1v1h1v1h1v-3h1v3h1v-2h1v2h2v-2h1v-1h1v3h6v-2h1v2h1v-2h2v2h2v-2h1v2h1v-1h1v1h1v-1h1v1h3v-2h1v2h2v-2h1v2h2v-1h1v1h2v-2h2v2h2v-2h1v-1h1v1h3v2h6v-2h2v2h1v-1h1v1h1v-2h1v2h1v-2h1v2h3v-1h1v1h1v-2h2v2h2v-1h4v1h3v-2h1v2h3v-2h5v2h1v-2h1v2h3v-2h1v-1h1v1h1v2h1v-1h1v1h4v-2h1v2h2v-2h1v2h4v-2h1v2h2v-2h3v-1h1v1h1v1h1v-1h1v-1h1v1h1v2h1v-3h1v3h1v-2h1v2h11v-2h1v2h2v-2h2v2h1v-1h1v1h5v-2h1v2h2v-3h1v3h6v-1h1v-1h3v-1h1v1h1v2h3v-2h1v2h1v-2h2v-1h1v3h6v-3h2v3h3v-2h1v2h5v-2h1v2h1v-3h2v3h1v-3h1v1h2v2h1v-2h3v-1h2v3h1v-2h2v-1h1v3h3v-2h1v2h2v-3h2v3h3v-3h1v1h1v-1h1v1h1v2h1v-3h2v3h6v-2h1v2h3v-1h1v1h11v-2h1v2h1v-1h2v-2h1v2h2v-1h1v1h2v-2h2v2h1v-3h1v3h2v-2h2v2h4v1h4v1h3v1h3v-1h1v2h1v-1h1v-1h1v3h4v1h1v-2h1v1h1v-1h1v2h3v-2h1v2h3v-2h1v2h4v-2h1v2h1v-2h1v-1h1v3h1v-2h1v-1h2v2h1v-2h1v2h4v-2h1v2h1v-3h1v2h1v-1h1v2h1v-2h1v2h1v-3h1v3h3v-2h1v2h1v-2h1v2h1v-2h1v2h1v-2h2v2h1v-2h1v2h2v-3h1v3h2v-3h1v3h2v-2h1v2h1v-1h2v-1h2v1h1v-1h1v-1h1v1h1v-1h1v2h2v-1h1v1h1v-1h4v-1h1v2h2v-2h1v2h2v-1h1v-1h2v2h1v-1h2v1h3v-2h2v-1h1v1h1v2h7v-1h1v1h6v-2h1v-1h1v3h3v-2h1v2h4v-2h1v2h2v-3h1v1h1v2h2v-3h1v3h1v-2h1v2h1v-3h1v3h4v-3h1v3h5v-2h1v-1h1v1h1v-1h1v3h1v-2h1v2h2v-3h1v1h1v2h4v-2h1v2h3v-2h1v2h1v-2h2v2h1v-2h1v-1h1v1h2v2h7v-2h1v2h2v-2h1v-1h1v1h1v2h2v-2h1v2h1v-2h1v-1h1v1h1v2h1v-2h1v2h2v-2h1v2h2v-3h1v3h1v-2h1v2h2v-3h2v3h3v-3h2v1h1v2h1v-2h1v2h2v-3h1v3h3v-3h1v3h1v-2h1v2h2v-3h1v3h1v-3h1v3h1v-2h1v2h2v-2h1v-1h1v3h1v-3h1v3h6v-2h1v2h6v-3h1v1h2v2h3v-3h1v1h1v2h1v-3h1v1h1v2h1v-2h1v2h1v-2h1v2h4v-3h1v3h1v-2h1v-1h1v3h4v-2h2v2h2v-2h3v-1h1v3h1v-2h1v2h4V549h-4v1h-1v-1h-1v2h-2v1h-2v-3h-2v3h-2v-3h-4v2h-1v1h-1v-3h-1v1h-1v-1h-4v2h-1v-2h-1v2h-1v-2h-1v2h-2v-2h-1v2h-1v1h-1v-3h-3v2h-2v-1h-1v-1h-6v3h-1v-3h-6v3h-1v-3h-1v1h-1v1h-1v-2h-2v1h-1v-1h-1v2h-1v-2h-1v3h-1v-3h-2v2h-1v-2h-1v3h-1v-3h-3v2h-1v-2h-2v3h-1v-3h-1v2h-3v-2h-3v1h-1v1h-1v-2h-2v3h-1v-3h-1v2h-1v-2h-2v2h-1v-2h-2v3h-1v-3h-1v3h-2v-1h-1v-2h-1v1h-1v-1h-2v2h-3v-2h-2v2h-1v-2h-7v1h-1v2h-1v-2h-1v1h-1v-2h-1v2h-1v-1h-1v-1h-1v2h-1v-2h-3v2h-1v-2h-4v3h-1v-1h-1v-2h-2v2h-1v-2h-1v3h-1v-1h-1v1h-1v-1h-1v-2h-5v2h-1v-2h-4v1h-1v-1h-1v3h-1v-3h-1v3h-1v-3h-2v2h-2v-2h-2v2h-1v-2h-4v3h-1v-3h-3v3h-1v-2h-1v-1h-6v2h-1v-2h-7v3h-4v-3h-3v1h-1v1h-1v-2h-1v2h-1v1h-1v-1h-1v-2h-2v2h-1v-2h-2v2h-2v-1h-1v2h-2v-3h-1v2h-1v-2h-2v3h-1v-1h-1v-1h-1v2h-1v-3h-1v2h-1v1h-1v-3h-3v2h-1v-2h-2v2h-1v-2h-2v3h-1v-3h-2v2h-1v-2h-1v3h-1v-2h-1v-1h-1v2h-1v-2h-1v2h-1v-2h-1v2h-1v-2h-3v3h-1v-3h-1v1h-1v-1h-1v3h-1v-2h-1v1h-1v-2h-1v2h-1v-2h-4v2h-1v-2h-1v2h-1v1h-1v-1h-1v-2h-1v3h-2v-3h-1v3h-1v-3h-4v2h-1v-2h-3v2h-1v-2h-3v2h-3v-2h-1v2h-1v-2h-3v1h-2v-1h-1v1h-1v-1h-9v-1h-5v2h-1v1h-1v-3h-1v-1h-1v3h-1v-3h-1v2h-1v1h-1v-3h-2v2h-1v-2h-2v2h-1v-2h-3v3h-1v-3h-11v2h-1v-2h-3v2h-1v-2h-6v2h-1v1h-1v-3h-1v2h-1v1h-2v-1h-1v-2h-3v2h-1v1h-1v-3h-2v2h-1v-2h-3v3h-3v-3h-1v2h-4v1h-1v-3h-1v2h-1v1h-2v-3h-1v2h-1v1h-1v-3h-1v3h-1v-3h-5v2h-1v-2h-3v2h-1v1h-1v-3h-6v2h-1v1h-2v-3h-1v3h-1v-3h-3v3h-1v-1h-1v1h-1v-1h-3v-2h-6v2h-1v-2h-2v3h-1v-3h-5v3h-1v-3h-1v3h-2v-3h-2v3h-1v-3h-11v2h-1v-2h-1v2h-1v-2h-1v2h-1v1h-1v-1h-3v1h-3v-1h-1v-2h-2v3h-1v-3h-4v2h-1v-2h-2v3h-1v-3h-4v3h-1v-3h-1v2h-2v1h-1v-3h-3v2h-1v-2h-1v3h-2v-1h-1v1h-2v-3h-3v2h-1v-2h-3v2h-1v1h-1v-1h-1v1h-1v-3h-2v3h-2v-3h-1v3h-1v-3h-3v3h-1v-3h-1v2h-1v-2h-1v3h-1v-3h-1v3h-1v-1h-1v-2h-6v3h-3v-1h-2v-2h-2v2h-1v1h-1v-3h-2v2h-1v-2h-2v3h-1v-3h-2v3h-1v-3h-3v3h-1v-3h-1v2h-1v-2h-1v2h-1v-2h-2v3h-1v-1h-1v-2h-1v2h-1v-2h-6v2h-2v-2h-2v2h-1v-2h-1v3h-1v-3h-1v2h-1v1h-1v-3h-1v2h-1v-2h-1v2h-1v-2h-2v3h-2v-3h-3v2h-1v-2h-6v2h-1v-2h-3v2h-1v1h-1v-3h-2v3h-2v-3h-4v2h-1v1h-1v-3h-2v3h-2v-1h-2v1h-1v-3h-2v3h-1v-3h-2v2h-1v-2h-1v2h-1v-2h-2v2h-1v-2h-2v3h-1v-3h-1v3h-1v-3h-1v2h-1v-2h-3v2h-1v1h-2v-3h-2v3h-1v-3h-2v3h-2v-3h-1v3h-1v-3h-6v3h-2v-3h-1v3h-1v-3h-1v3h-1v-3h-1v2h-1v1h-1v-3h-4v2h-2v-2h-4v2h-1v-2h-2v3h-1v-3h-1v2h-3v1h-1v-3h-3v2h-1v1h-1v-3h-1v3h-1v-3h-4v2h-1v1h-3v-3h-1v3h-1v-3h-2v3h-2v-3h-2v3h-1v-3h-2v3h-1v-3h-4v3h-1v-1h-1v-2h-6v2h-1v-2h-1v2h-1v-2h-2v2h-1v-2h-1v2h-1v-2h-1v2h-1v-2h-4v2h-1v-2h-1v3h-1v-3h-4v2h-1v-2h-4v2h-1v-2h-2v2h-1v-2h-1v2h-1v-2h-6v2h-2v-2h-2v2h-2v-2h-1v2h-1v1h-1v-3h-9v2h-1v-2h-1v3h-1v-3h-6v3h-1v-3h-2v3h-1v-1h-1v-2h-3v3h-1v-3h-2v3h-1v-3h-1v2h-1v-2h-2v3h-2v-3h-1v4h-1v-3h-2v3h-1v-1h-2v-2h-2v3h-1v-3h-2v3h-1v-3h-4v3h-1v-3h-1v2h-2v1h-2v-3h-6v3h-1v-3h-2v3h-1v-3h-3v2h-2v-2h-1v2h-3v-2h-1v2h-1v-2h-6v3h-1v-3h-1v3h-1v-3h-3v3h-2v-3h-3v2h-2v-2h-1v2h-1v1h-1v-3h-2v2h-1v-2h-2v3h-1v-3h-2v2h-1v-2h-1v3h-2v-1h-2v-2h-1v2h-1v-2h-2v2h-2v1h-1v-1h-1v-2h-5v2h-2v-2h-2v2h-3v-2h-10v3h-1v-3h-1v3h-1v-3h-1v2h-1v-2h-3v2h-2v1h-1v-3h-2v2h-1v-2h-1v3h-1v-1h-1v-2h-2v2h-1v-2h-1v3h-1v-3h-8v3h-1v-1h-1v1h-1v-3h-2v3h-1v-3h-3v3h-1v-1h-1v-2h-1v2h-1v-2h-4v3h-1v-3h-1v2h-2v1h-1v-1h-1v1h-2v-3h-1v2h-1v-2h-4v3h-1v-3h-1v3h-1v-3h-1v2h-1v-2h-2v3h-1v-3h-1v3h-1v-3h-2v2h-1v-2h-2v2h-2v-2h-2v2h-2v-2h-2z" fill="#FFE84A"/>
<path d="M17,367h1v1h1v-1h5v1h2v-1h8v1h3v-1h4v1h5v-1h1v1h1v-1h3v1h1v-1h2v1h1v-1h3v1h2v-1h1v1h2v-1h1v1h1v-1h1v1h2v-1h3v1h3v-1h3v1h1v-1h2v1h2v-1h2v1h1v-1h1v1h1v-1h1v1h1v-1h3v1h1v-1h1v1h1v-1h6v1h1v-1h4v1h1v-1h1v1h1v-1h2v1h3v-1h2v1h2v-1h2v1h1v-1h4v1h1v-1h1v1h3v-1h3v1h1v-1h1v1h1v-1h11v1h1v-1h2v1h1v-1h5v1h2v-1h7v1h2v-1h2v1h3v-1h1v1h2v-1h1v1h2v-1h1v1h1v-1h5v1h1v-1h1v1h3v-1h2v1h4v-1h1v1h1v-1h4v1h1v-1h4v1h1v-1h1v-1h2v1h1v-2h2v-1h2v1h1v-2h1v1h1v-2h1v-1h1v2h1v-1h2v1h2v-1h1v1h1v-1h1v-1h1v2h1v-2h1v1h1v1h1v-1h1v1h1v-1h2v1h1v-2h1v2h2v-1h1v-1h2v2h1v-1h1v-1h1v2h1v-1h1v-1h6v1h1v1h3v-1h1v1h1v-2h1v2h1v-1h3v1h2v-1h2v1h5v1h2v-2h1v1h1v-1h2v2h2v-2h1v2h1v-2h1v2h1v-1h2v-1h1v2h2v-1h2v-1h1v2h1v-1h1v1h1v-1h1v1h1v-1h2v1h1v-1h1v1h1v-1h1v1h1v-1h4v2h3v-2h2v2h1v-2h2v1h1v1h1v-2h1v2h1v-2h1v1h1v1h1v-2h1v2h1v-1h3v1h1v-1h2v1h1v-1h1v1h1v-1h1v1h1v-1h1v1h1v-1h1v1h3v-1h4v1h3v-1h1v1h2v-1h1v1h1v-1h2v1h2v-1h3v1h1v-1h2v1h2v-1h1v1h2v-1h5v2h1v-2h5v2h1v-2h1v2h1v-1h1v-1h6v2h2v-1h2v1h3v-2h1v1h1v1h1v-2h1v2h1v-1h1v-1h1v1h1v1h1v-1h1v-1h1v1h1v1h2v-1h1v-1h1v2h7v-2h2v1h1v1h1v-2h1v1h3v1h1v-2h2v2h1v-1h2v-1h2v2h1v-2h1v2h1v-1h2v1h4v-1h1v1h1v-2h3v2h1v-1h1v-1h1v2h1v-1h1v1h3v-1h4v1h2v-2h2v2h1v-2h1v2h1v-2h1v2h1v-2h2v2h1v-2h1v1h1v-1h2v2h2v-2h1v1h1v1h5v-1h1v1h1v-2h1v1h2v-1h2v2h3v-2h1v1h1v1h2v-1h1v-1h1v2h1v-1h1v1h1v-1h1v-1h1v1h1v-1h1v2h1v-1h1v1h1v-2h1v2h3v-2h7v2h1v-2h1v2h1v-2h1v2h1v-2h1v2h1v-2h1v2h1v-1h1v-1h1v2h3v-2h1v2h2v-2h4v1h2v-1h1v2h1v-2h1v2h1v-2h2v2h2v-2h1v2h1v-1h1v-1h1v2h4v-2h1v2h3v-2h2v2h1v-2h1v2h1v-2h3v2h2v-2h1v2h2v-2h1v2h1v-2h1v1h1v1h1v-1h1v-1h2v2h1v-2h3v2h1v-2h7v2h1v-2h3v2h2v-2h3v2h1v-1h1v1h1v-2h1v2h4v-2h1v1h2v1h1v-2h9v2h1v-2h2v1h1v-1h1v2h1v-1h1v1h2v-2h1v2h1v-2h5v2h1v-2h1v2h1v-2h1v1h1v-1h4v2h3v-2h1v2h1v-2h1v2h1v-2h2v2h1v-2h3v1h1v-1h1v2h1v-2h1v2h2v-2h1v2h1v-2h1v2h2v-2h2v2h1v-2h1v2h2v-2h2v1h1v-1h1v1h1v-1h1v-1h1v1h1v1h2v-1h1v1h1v-2h2v2h2v-2h1v2h1v-2h1v1h1v1h1v-1h2v1h1v1h1v1h3v1h2v-1h1v2h2v-1h4v1h2v1h1v1h1v-1h2v1h5v-1h2v1h1v-1h1v1h1v-1h1v-1h1v2h1v-2h1v1h1v1h1v-2h8v1h1v-1h1v1h1v-2h1v2h1v-1h1v-1h1v1h1v1h1v-1h1v1h1v-2h2v1h1v1h1v-2h1v2h1v-2h2v1h2v1h1v-2h1v1h2v-1h1v1h2v-1h1v2h3v-2h1v2h1v-2h6v1h2v-1h2v1h2v-1h4v-1h1v2h1v-1h1v1h2v-1h1v-1h1v1h1v-1h1v1h1v-1h1v2h1v-1h1v1h2v-2h1v2h7v-2h3v1h1v1h2v-2h1v2h2v-1h1v-1h7v2h1v-2h3v1h1v-1h2v1h1v-1h2v1h1v-1h4v1h2v-1h4v1h1v-1h2v1h1v-1h1v1h1v-1h2v1h2v-1h8v1h1v-1h1v1h1v-1h3v1h1v-1h1v1h1v-1h1v1h2v-1h1v1h1v-1h1v1h1v-1h1v1h2v-1h2v1h2v-1h9v1h1v-1h2v1h1v-1h3v1h1v-1h5v1h7v-1h1v1h1v-1h4v1h1v-1h1v1h1v-1h1v1h1v-1h2v1h2v-1h1v1h1v-1h2v1h1v-1h4v1h4v-1h2v1h1v-1h2v1h1v-1h2v1h1v-1h1v1h1v-1h2v1h1v-1h2v1h2v-1h2v1h1v-1h1v1h1v-1h3v1h1v-1h4v1h1v-1h1v1h1v-1h1v1h3v-1h2v1h3v-1h3v1h1v-1h3v1h1v-1h1V549h-1v-1h-1v2h-3v-2h-1v1h-1v1h-2v-2h-3v2h-2v-2h-3v2h-1v-2h-1v2h-1v-2h-1v2h-4v-2h-1v2h-1v-1h-1v1h-1v-2h-1v1h-1v-1h-1v2h-2v-2h-2v2h-2v-2h-1v2h-2v-2h-1v2h-1v-2h-1v2h-1v-1h-1v-1h-1v2h-1v-1h-1v-1h-1v2h-2v-2h-4v2h-3v-1h-1v-1h-1v2h-2v-2h-1v1h-1v-1h-2v1h-1v1h-1v-2h-1v2h-1v-2h-1v2h-1v-2h-1v2h-2v-1h-1v1h-1v-2h-1v2h-1v-2h-7v2h-5v-2h-1v2h-2v-1h-1v-1h-1v2h-1v-1h-1v-1h-1v2h-1v-1h-1v1h-1v-1h-1v1h-5v-2h-2v1h-1v1h-1v-2h-2v2h-1v-2h-1v2h-1v-2h-1v2h-1v-2h-2v1h-1v-1h-1v2h-1v-2h-1v2h-2v-1h-1v-1h-1v2h-1v-2h-1v2h-1v-1h-1v1h-6v-2h-2v2h-2v-2h-1v2h-1v-2h-1v1h-1v1h-1v-2h-1v2h-4v-2h-2v2h-4v-2h-1v2h-2v-2h-1v2h-2v-2h-1v2h-3v-2h-1v2h-2v-1h-1v1h-1v-1h-1v1h-1v-1h-1v1h-1v-2h-2v2h-1v-2h-2v2h-3v-1h-1v-1h-7v2h-1v-2h-2v1h-1v-1h-1v2h-6v-2h-2v2h-1v-2h-1v2h-2v-1h-1v1h-2v-2h-2v2h-2v-2h-2v2h-6v-2h-1v2h-1v-2h-3v2h-1v-1h-1v1h-4v-1h-1v-1h-1v2h-4v-2h-1v2h-1v-2h-1v2h-3v-2h-1v2h-1v-2h-1v2h-3v-2h-1v2h-1v-2h-1v2h-1v-2h-1v1h-1v1h-7v-2h-1v1h-1v1h-1v-2h-1v2h-1v-1h-1v-1h-1v2h-1v-2h-1v1h-1v1h-1v-2h-5v2h-2v-2h-1v2h-7v-2h-2v2h-1v-2h-6v2h-3v-2h-1v1h-2v-1h-1v1h-1v-2h-2v1h-2v-1h-1v1h-1v-1h-2v1h-3v-1h-1v2h-1v-2h-1v1h-1v1h-1v-2h-2v1h-1v-1h-1v1h-2v-1h-2v1h-1v-1h-1v1h-1v-1h-2v1h-1v-1h-1v1h-2v1h-1v-1h-2v-1h-1v1h-2v-1h-1v1h-1v-1h-1v1h-1v-1h-3v1h-3v1h-1v-1h-2v-1h-1v1h-1v-1h-1v2h-1v-1h-4v-1h-1v1h-1v-1h-2v1h-1v-1h-1v1h-4v-1h-1v1h-6v1h-1v-1h-2v-1h-1v1h-3v-1h-4v2h-1v-2h-1v1h-1v-1h-1v1h-3v-1h-2v1h-3v-1h-1v1h-3v1h-1v-1h-3v-1h-1v1h-3v-1h-1v1h-3v-1h-1v1h-2v-1h-1v1h-1v-1h-2v1h-1v-1h-2v1h-3v-1h-1v2h-1v-2h-1v1h-2v-1h-3v1h-1v-1h-4v1h-2v-1h-1v1h-1v-1h-2v1h-2v-1h-1v1h-1v-1h-1v1h-7v-1h-2v1h-1v-1h-3v1h-2v-1h-1v1h-1v-1h-1v1h-1v-1h-1v1h-1v-1h-1v1h-1v-1h-1v1h-2v1h-1v-1h-4v-1h-3v1h-1v-1h-1v1h-1v-1h-1v1h-4v-1h-1v2h-1v-2h-1v1h-2v-1h-2v2h-1v-1h-1v-1h-3v1h-5v-1h-1v1h-1v-1h-5v1h-2v-1h-2v1h-4v-1h-1v1h-2v-1h-1v1h-1v-1h-1v1h-1v-1h-1v1h-2v-1h-2v1h-4v-1h-3v1h-1v-1h-1v1h-2v-1h-1v1h-3v-1h-1v2h-1v-2h-4v1h-2v-1h-1v1h-1v-1h-1v1h-4v-1h-1v1h-2v-1h-1v1h-1v1h-1v-1h-2v-1h-1v1h-2v1h-1v-2h-7v1h-2v-1h-2v1h-3v-1h-1v1h-3v-1h-1v1h-1v-1h-1v1h-2v-1h-3v1h-2v-1h-2v2h-1v-1h-6v-1h-1v1h-1v-1h-1v1h-5v-1h-1v1h-5v-1h-2v1h-1v-1h-2v1h-2v-1h-1v1h-1v1h-1v-1h-1v-1h-2v1h-2v-1h-1v1h-1v-1h-2v1h-1v-1h-3v1h-4v-1h-3v1h-1v-1h-1v1h-1v-1h-1v1h-1v-1h-1v1h-1v-1h-1v1h-2v-1h-1v1h-3v-1h-1v2h-1v-2h-1v1h-2v-1h-1v1h-1v-1h-1v1h-3v-1h-1v2h-1v-1h-1v-1h-3v1h-4v-1h-1v1h-1v-1h-1v1h-1v-1h-1v1h-2v-1h-1v1h-1v-1h-1v1h-1v-1h-1v1h-3v-1h-2v1h-2v1h-1v-2h-1v1h-1v-1h-1v1h-1v-1h-2v1h-1v1h-2v-1h-1v-1h-7v1h-2v-1h-2v1h-3v-1h-1v1h-1v-1h-1v1h-1v-1h-3v1h-8v-1h-1v1h-2v-1h-1v1h-2v1h-1v-2h-2v1h-1v-1h-1v1h-2v-1h-1v1h-1v-1h-1v1h-2v-1h-1v1h-2v-1h-1v1h-1v-1h-2v1h-2v-1h-1v1h-1v1h-1v-2h-1v1h-1v-1h-1v1h-3v1h-1v-2h-1v2h-3v-2h-1v2h-4v-1h-1v2h-1v-1h-3v-1h-1v1h-1v-1h-4v1h-1v1h-1v-2h-3v1h-1v-1h-1v1h-2v1h-1v-1h-1v1h-1v-2h-1v1h-1v-1h-2v1h-1v-1h-2v1h-1v-1h-3v1h-2v-1h-2v1h-7v-1h-2v1h-1v1h-1v-1h-3v-1h-1v2h-1v-1h-1v-1h-1v2h-1v-1h-10v-1h-1v1h-1v-1h-1v1h-3v-1h-3v1h-1v-1h-1v1h-4v-1h-1v1h-2v-1h-2v1h-2v-1h-3v1h-1v1h-1v-2h-1v1h-1v-1h-1v1h-1v1h-1v-1h-2v-1h-1v1h-6v-1h-1v1h-1v-1h-1v1h-2v1h-1v-2h-1v1h-1v-1h-1v1h-1v-1h-1v1h-2v-1h-2v1h-2v-1h-1v2h-1v-1h-1v1h-1v-2h-3v1h-3v-1h-2v1h-1v-1h-1v1h-1v-1h-2v1h-1v-1h-2v1h-3v-1h-1v1h-2v-1h-1v1h-3v-1h-1v1h-1v-1h-5v2h-1v-1h-3v-1h-3v1h-3v1h-1v-1h-4v-1h-2v1h-3v1h-1v-1h-1v-1h-1v1h-1z" fill="#FF7A5A"/>
<path d="M17,368h192v-1h3v-1h2v-1h2v-1h3v-1h13v-1h1v1h9v-1h1v1h2v-1h1v1h7v-1h1v1h1v-1h1v1h24v1h1v-1h2v1h3v-1h4v1h4v-1h1v1h23v1h1v-1h3v1h2v-1h3v1h56v1h1v-1h2v1h2v-1h2v1h1v-1h1v1h2v-1h1v1h1v-1h4v1h3v-1h1v1h2v-1h1v1h1v-1h1v1h1v-1h1v1h5v-1h1v1h5v-1h1v1h10v-1h3v1h1v-1h1v1h3v-1h1v1h2v-1h2v1h1v-1h1v1h1v-1h1v1h1v-1h1v1h3v-1h1v1h1v-1h1v1h1v-1h1v1h8v-1h1v1h4v-1h2v1h1v-1h1v1h1v-1h2v1h4v-1h1v1h1v-1h2v1h1v-1h2v1h4v-1h1v1h2v-1h1v1h3v-1h1v1h11v-1h1v1h3v-1h1v1h1v-1h1v1h1v-1h1v1h1v-1h1v1h2v-1h2v1h1v-1h1v1h1v-1h1v1h2v-1h2v1h1v-1h1v1h1v-1h2v1h1v-1h3v1h2v-1h1v1h1v-1h1v1h1v-1h3v1h1v-1h1v1h1v-1h4v1h2v-1h1v1h2v-1h1v1h1v-1h3v1h1v-1h2v1h4v-1h1v1h2v-1h4v1h1v-1h6v1h2v-1h3v1h1v-1h1v1h1v-1h5v1h2v-1h9v1h2v-1h5v1h1v-1h9v1h2v-1h3v1h1v-1h1v1h1v-1h20v1h1v-1h3v1h1v-1h30v-1h1v1h4v-1h5v1h3v1h1v-1h1v1h3v1h3v1h3v1h3v1h3v1h16v-1h1v1h2v-1h1v1h1v-1h10v-1h1v1h1v-1h1v1h5v-1h1v1h1v-1h1v1h3v-1h1v1h2v-1h5v1h1v-1h37v-1h1v1h1v-1h1v1h3v-1h2v1h1v-1h1v1h2v-1h1v1h1v-1h1v1h2v-1h3v1h1v-1h4v1h1v-1h173V549h-308v-1h-9v-1h-1v1h-1v-1h-1v1h-1v-1h-1v1h-3v-1h-1v1h-2v-1h-1v1h-1v-1h-3v1h-1v-1h-1v1h-1v-1h-2v1h-4v-1h-2v1h-1v-1h-1v1h-1v-1h-2v1h-3v-1h-2v1h-3v-1h-2v1h-2v-1h-2v1h-2v-1h-2v1h-4v-1h-1v1h-1v-1h-8v1h-2v-1h-1v1h-3v-1h-1v1h-3v-1h-1v1h-3v-1h-1v1h-1v-1h-1v1h-1v-1h-1v1h-1v-1h-1v1h-3v-1h-8v1h-1v-1h-4v1h-1v-1h-1v1h-2v-1h-1v1h-2v-1h-1v1h-2v-1h-1v1h-3v-1h-1v1h-4v-1h-4v1h-3v-1h-3v1h-1v-1h-1v1h-1v-1h-3v1h-2v-1h-1v1h-2v-1h-1v1h-4v-1h-2v1h-2v-1h-1v1h-1v-1h-2v1h-1v-1h-3v1h-1v-1h-2v1h-1v-1h-1v1h-7v-1h-1v1h-1v-1h-2v1h-2v-1h-1v1h-6v-1h-2v1h-3v-1h-3v1h-2v-1h-6v1h-3v-1h-1v1h-2v-1h-3v1h-1v-1h-1v1h-3v-1h-2v1h-3v-1h-4v1h-4v-1h-1v1h-1v-1h-2v1h-1v-1h-2v1h-3v-1h-1v1h-3v-1h-1v1h-2v-1h-2v1h-1v-1h-2v1h-3v-1h-5v1h-2v-1h-1v1h-1v-1h-1v1h-2v-1h-1v1h-2v-1h-4v1h-1v-1h-3v1h-1v-1h-6v1h-3v-1h-1v1h-1v-1h-3v1h-2v-1h-3v1h-1v-1h-1v1h-2v-1h-1v1h-2v-1h-3v1h-4v-1h-1v1h-2v-1h-1v1h-1v-1h-2v1h-3v-1h-1v1h-1v-1h-1v1h-1v-1h-3v1h-6v-1h-1v1h-4v-1h-5v1h-1v-1h-2v1h-1v-1h-1v1h-2v-1h-1v1h-1v-1h-2v1h-1v-1h-1v1h-3v-1h-1v1h-1v-1h-3v1h-2v-1h-3v1h-1v-1h-7v1h-1v-1h-1v1h-2v-1h-2v1h-4v-1h-1v1h-3v-1h-3v1h-1v-1h-6v1h-1v-1h-1v1h-2v-1h-1v1h-1v-1h-1v1h-3v-1h-2v1h-1v-1h-2v1h-1v-1h-4v1h-4v-1h-1v1h-1v-1h-1v1h-1v-1h-5v1h-2v-1h-3v1h-1v-1h-2v1h-2v-1h-1v1h-3v-1h-3v1h-4v-1h-2v1h-1v-1h-6v1h-1v-1h-12v1h-2v-1h-4v1h-1v-1h-3v1h-8v1h-1v-1h-1v1h-5v-1h-1v1h-2v-1h-1v1h-1v-1h-2v1h-4v-1h-1v1h-1v-1h-2v1h-3v-1h-1v1h-8v-1h-1v1h-1v-1h-2v1h-3v-1h-3v1h-2v-1h-2v1h-1v-1h-1v1h-1v-1h-5v1h-1v-1h-1v1h-1v-1h-1v1h-3v-1h-1v1h-2v-1h-1v1h-2v-1h-2v1h-1v-1h-4v1h-2v-1h-3v1h-3v-1h-4v1h-5v-1h-2v1h-1v-1h-1v1h-1v-1h-7v1h-1v-1h-1v1h-1v-1h-1v1h-1v-1h-2v1h-1v-1h-1v1h-3v-1h-1v1h-1v-1h-1v1h-1v-1h-4v1h-2v-1h-1v1h-6v-1h-1v1h-1v-1h-1v1h-1v-1h-1v1h-4v-1h-4v1h-1v-1h-3v1h-1v-1h-1v1h-1v-1h-2v1h-1v-1h-2v1h-2v-1h-5v1h-3v-1h-2v1h-3v-1h-3v1h-1v-1h-2v1h-3v-1h-2v1h-3v-1h-2z" fill="#E64AF0"/>
<path d="M17,369h192v-1h3v-1h2v-1h3v-1h2v-1h59v1h1v-1h3v1h1v-1h1v1h33v1h1v-1h1v1h2v-1h1v1h53v1h1v-1h2v1h1v-1h1v1h1v-1h1v1h2v-1h2v1h3v-1h2v1h1v-1h2v1h2v-1h1v1h142v-1h1v1h1v-1h1v1h9v-1h1v1h3v-1h1v1h2v-1h1v1h1v-1h1v1h2v-1h1v1h2v-1h1v1h3v-1h1v1h1v-1h1v1h1v-1h1v1h2v-1h1v1h10v-1h1v1h2v-1h1v1h1v-1h1v1h3v-1h2v1h2v-1h1v1h2v-1h2v1h1v-1h1v1h1v-1h4v1h1v-1h2v1h1v-1h2v1h1v-1h1v1h1v-1h4v1h1v-1h4v1h1v-1h5v1h1v-1h4v1h3v-1h1v1h1v-1h3v1h1v-1h1v1h3v-1h3v1h2v-1h11v1h1v-1h1v1h1v-1h28v-1h3v1h6v1h3v1h3v1h4v1h3v1h3v1h20v-1h31v-1h1v1h3v-1h1v1h1v-1h4v1h1v-1h50v-1h1v1h1v-1h1v1h1v-1h174V548h-310v-1h-1v1h-1v-1h-497v1h-1v-1h-1v1h-189z" fill="#8A30FF"/>
<path d="M22.5,370V536M55.5,370V536M58.5,370V536M61.5,370V536M64.5,370V536M67.5,370V536M85.5,370V536M88.5,370V536M91.5,370V536M97.5,370V536M100.5,370V536M109.5,370V536M130.5,370V536M136.5,370V536M166.5,370V536M169.5,370V536M172.5,370V536M175.5,370V536M178.5,370V536M199.5,370V536M232.5,364V535M238.5,364V535M256.5,364V535M259.5,364V535M262.5,364V535M265.5,364V535M295.5,365V535M298.5,365V535M310.5,365V535M325.5,366V535M334.5,366V535M340.5,366V535M343.5,366V535M346.5,366V535M349.5,366V535M352.5,366V535M364.5,366V535M367.5,366V535M379.5,367V535M394.5,367V535M397.5,367V535M400.5,367V535M409.5,367V535M418.5,367V535M421.5,367V535M439.5,367V535M448.5,367V535M451.5,367V535M454.5,367V535M466.5,367V535M478.5,367V535M481.5,367V535M484.5,367V535M493.5,367V535M508.5,367V535M517.5,367V535M520.5,367V535M523.5,367V535M526.5,367V535M529.5,367V535M532.5,367V535M535.5,367V535M562.5,367V535M565.5,367V535M568.5,367V535M577.5,367V535M580.5,367V535M589.5,367V535M592.5,367V535M595.5,367V535M622.5,367V535M631.5,367V535M634.5,367V535M637.5,367V535M646.5,367V535M649.5,367V535M676.5,367V535M679.5,367V535M691.5,366V535M694.5,366V535M697.5,366V535M700.5,366V535M703.5,366V535M760.5,371V537M763.5,371V537M766.5,371V537M769.5,371V537M775.5,371V537M778.5,371V537M793.5,370V537M805.5,370V537M820.5,370V537M823.5,370V537M826.5,370V537M832.5,370V537M835.5,370V537M838.5,370V537M847.5,370V537M865.5,370V537M874.5,370V537M877.5,370V537M880.5,370V537M889.5,370V537M892.5,370V537M901.5,370V537M907.5,370V537M916.5,370V537M934.5,370V537M937.5,370V537M940.5,370V537M943.5,370V537M946.5,370V537M949.5,370V537M952.5,370V537M955.5,370V537M958.5,370V537M976.5,370V537M985.5,370V537M988.5,370V537M991.5,370V537M1003.5,370V537M1012.5,370V537M1015.5,370V537" stroke="#E444FF" stroke-width="1" fill="none" stroke-opacity="0.85"/>
<path d="M25.5,370V536M28.5,370V536M31.5,370V536M34.5,370V536M37.5,370V536M40.5,370V536M43.5,370V536M46.5,370V536M49.5,370V536M52.5,370V536M70.5,370V536M73.5,370V536M76.5,370V536M79.5,370V536M82.5,370V536M94.5,370V536M103.5,370V536M106.5,370V536M112.5,370V536M121.5,370V536M124.5,370V536M127.5,370V536M139.5,370V536M142.5,370V536M145.5,370V536M148.5,370V536M151.5,370V536M154.5,370V536M157.5,370V536M160.5,370V536M163.5,370V536M181.5,370V536M184.5,370V536M190.5,370V536M193.5,370V536M196.5,370V536M202.5,370V536M205.5,370V536M208.5,369V536M211.5,368V535M214.5,367V535M217.5,365V535M220.5,364V535M223.5,364V535M226.5,364V535M229.5,364V535M301.5,365V535M304.5,365V535M307.5,365V535M328.5,366V535M331.5,366V535M370.5,366V535M373.5,366V535M376.5,367V535M412.5,367V535M415.5,367V535M442.5,367V535M445.5,367V535M487.5,367V535M490.5,367V535M511.5,367V535M514.5,367V535M553.5,367V535M556.5,367V535M559.5,367V535M598.5,367V535M601.5,367V535M604.5,367V535M625.5,367V535M628.5,367V535M667.5,367V535M670.5,367V535M673.5,367V535M733.5,372V537M736.5,372V537M742.5,372V537M745.5,372V537M748.5,372V537M751.5,371V537M754.5,371V537M757.5,371V537M772.5,371V537M781.5,371V537M784.5,371V537M787.5,371V537M790.5,370V537M808.5,370V537M811.5,370V537M814.5,370V537M817.5,370V537M829.5,370V537M850.5,370V537M853.5,370V537M856.5,370V537M859.5,370V537M862.5,370V537M883.5,370V537M886.5,370V537M895.5,370V537M898.5,370V537M904.5,370V537M919.5,370V537M922.5,370V537M925.5,370V537M928.5,370V537M931.5,370V537M961.5,370V537M964.5,370V537M967.5,370V537M970.5,370V537M973.5,370V537M994.5,370V537M997.5,370V537M1000.5,370V537M1006.5,370V537M1009.5,370V537" stroke="#FF5484" stroke-width="1" fill="none" stroke-opacity="0.85"/>
<path d="M115.5,370V536M118.5,370V536M187.5,370V536" stroke="#FF9450" stroke-width="1" fill="none" stroke-opacity="0.85"/>
<path d="M752.5,440V535" stroke="#FFE050" stroke-width="1" fill="none" stroke-opacity="0.85"/>
<path d="M18.5,370V536M21.5,370V536M24.5,370V536M27.5,370V536M30.5,370V536M33.5,370V536M36.5,370V536M39.5,370V536M42.5,370V536M45.5,370V536M48.5,370V536M51.5,370V536M54.5,370V536M57.5,370V536M60.5,370V536M63.5,370V536M66.5,370V536M69.5,370V536M72.5,370V536M75.5,370V536M78.5,370V536M81.5,370V536M84.5,370V536M87.5,370V536M90.5,370V536M93.5,370V536M96.5,370V536M99.5,370V536M102.5,370V536M105.5,370V536M108.5,370V536M111.5,370V536M114.5,370V536M117.5,370V536M120.5,370V536M123.5,370V536M126.5,370V536M129.5,370V536M132.5,370V536M135.5,370V536M138.5,370V536M141.5,370V536M144.5,370V536M147.5,370V536M150.5,370V536M153.5,370V536M156.5,370V536M159.5,370V536M162.5,370V536M165.5,370V536M168.5,370V536M171.5,370V536M174.5,370V536M177.5,370V536M180.5,370V536M183.5,370V536M186.5,370V536M189.5,370V536M192.5,370V536M195.5,370V536M198.5,370V536M201.5,370V536M204.5,370V536M207.5,369V536M210.5,368V535M213.5,367V535M216.5,366V535M219.5,365V535M222.5,364V535M225.5,364V535M228.5,364V535M231.5,364V535M234.5,364V535M237.5,364V535M240.5,364V535M243.5,364V535M246.5,364V535M249.5,364V535M252.5,364V535M255.5,364V535M258.5,364V535M261.5,364V535M264.5,364V535M267.5,364V535M270.5,364V535M273.5,364V535M276.5,365V535M279.5,365V535M282.5,365V535M285.5,365V535M288.5,365V535M291.5,365V535M294.5,365V535M297.5,365V535M300.5,365V535M303.5,365V535M306.5,365V535M309.5,365V535M312.5,366V535M315.5,366V535M318.5,366V535M321.5,366V535M324.5,366V535M327.5,366V535M330.5,366V535M333.5,366V535M336.5,366V535M339.5,366V535M342.5,366V535M345.5,366V535M348.5,366V535M351.5,366V535M354.5,366V535M357.5,366V535M360.5,366V535M363.5,366V535M366.5,366V535M369.5,366V535M372.5,366V535M375.5,367V535M378.5,367V535M381.5,367V535M384.5,367V535M387.5,367V535M390.5,367V535M393.5,367V535M396.5,367V535M399.5,367V535M402.5,367V535M405.5,367V535M408.5,367V535M411.5,367V535M414.5,367V535M417.5,367V535M420.5,367V535M423.5,367V535M426.5,367V535M429.5,367V535M432.5,367V535M435.5,367V535M438.5,367V535M441.5,367V535M444.5,367V535M447.5,367V535M450.5,367V535M453.5,367V535M456.5,367V535M459.5,367V535M462.5,367V535M465.5,367V535M468.5,367V535M471.5,367V535M474.5,367V535M477.5,367V535M480.5,367V535M483.5,367V535M486.5,367V535M489.5,367V535M492.5,367V535M495.5,367V535M498.5,367V535M501.5,367V535M504.5,367V535M507.5,367V535M510.5,367V535M513.5,367V535M516.5,367V535M519.5,367V535M522.5,367V535M525.5,367V535M528.5,367V535M531.5,367V535M534.5,367V535M537.5,367V535M540.5,367V535M543.5,367V535M546.5,367V535M549.5,367V535M552.5,367V535M555.5,367V535M558.5,367V535M561.5,367V535M564.5,367V535M567.5,367V535M570.5,367V535M573.5,367V535M576.5,367V535M579.5,367V535M582.5,367V535M585.5,367V535M588.5,367V535M591.5,367V535M594.5,367V535M597.5,367V535M600.5,367V535M603.5,367V535M606.5,367V535M609.5,367V535M612.5,367V535M615.5,367V535M618.5,367V535M621.5,367V535M624.5,367V535M627.5,367V535M630.5,367V535M633.5,367V535M636.5,367V535M639.5,367V535M642.5,367V535M645.5,367V535M648.5,367V535M651.5,367V535M654.5,367V535M657.5,367V535M660.5,367V535M663.5,367V535M666.5,367V535M669.5,367V535M672.5,367V535M675.5,367V535M678.5,367V535M681.5,367V535M684.5,367V535M687.5,367V535M690.5,366V535M693.5,366V535M696.5,366V535M699.5,366V535M702.5,366V535M705.5,366V536M706.5,366V536M707.5,366V536M708.5,366V536M709.5,366V536M710.5,367V536M711.5,367V537M712.5,367V537M713.5,367V537M714.5,368V537M715.5,368V537M716.5,368V537M717.5,369V537M718.5,369V537M719.5,369V537M720.5,370V537M721.5,370V537M722.5,370V537M723.5,371V537M724.5,371V537M725.5,371V537M726.5,371V537M727.5,372V537M728.5,372V537M729.5,372V537M730.5,372V537M732.5,372V537M735.5,372V537M738.5,372V537M741.5,372V537M747.5,372V537M750.5,371V537M753.5,371V537M756.5,371V537M759.5,371V537M762.5,371V537M765.5,371V537M768.5,371V537M771.5,371V537M774.5,371V537M777.5,371V537M780.5,371V537M783.5,371V537M786.5,371V537M789.5,371V537M792.5,370V537M795.5,370V537M798.5,370V537M801.5,370V537M804.5,370V537M807.5,370V537M810.5,370V537M813.5,370V537M816.5,370V537M819.5,370V537M822.5,370V537M825.5,370V537M828.5,370V537M831.5,370V537M834.5,370V537M837.5,370V537M840.5,370V537M843.5,370V537M846.5,370V537M849.5,370V537M852.5,370V537M855.5,370V537M858.5,370V537M861.5,370V537M864.5,370V537M867.5,370V537M870.5,370V537M873.5,370V537M876.5,370V537M879.5,370V537M882.5,370V537M885.5,370V537M888.5,370V537M891.5,370V537M894.5,370V537M897.5,370V537M900.5,370V537M903.5,370V537M906.5,370V537M909.5,370V537M912.5,370V537M915.5,370V537M918.5,370V537M921.5,370V537M924.5,370V537M927.5,370V537M930.5,370V537M933.5,370V537M936.5,370V537M939.5,370V537M942.5,370V537M945.5,370V537M948.5,370V537M951.5,370V537M954.5,370V537M957.5,370V537M960.5,370V537M963.5,370V537M966.5,370V537M969.5,370V537M972.5,370V537M975.5,370V537M978.5,370V537M981.5,370V537M984.5,370V537M987.5,370V537M990.5,370V537M993.5,370V537M996.5,370V537M999.5,370V537M1002.5,370V537M1005.5,370V537M1008.5,370V537M1011.5,370V537M1014.5,370V537" stroke="#6430FF" stroke-width="1" fill="none"/>
<path d="M221.5,362V535M734.5,370V535M739.5,370V535M744.5,370V535M752.5,368V440" stroke="#fff" stroke-width="1" fill="none"/>
<path d="M17,371h191v-1h2v-1h3v-1h2v-1h3v-1h2v-1h49v1h36v1h52v1h336v-1h16v1h4v1h3v1h4v1h3v1h3v1h3v1h5v-1h20v-1h48v-1h215V378h-174v1h-1v-1h-2v1h-2v-1h-2v1h-1v-1h-1v1h-1v-1h-1v1h-1v-1h-3v1h-1v-1h-1v1h-3v-1h-3v1h-41v1h-1v-1h-2v1h-1v-1h-4v1h-1v-1h-1v1h-1v-1h-4v1h-8v-1h-1v1h-5v1h-1v-1h-2v1h-1v-1h-1v1h-5v-1h-1v1h-1v-1h-1v1h-1v-1h-1v-1h-1v1h-2v-1h-1v1h-3v-1h-2v-1h-5v-1h-2v-1h-2v-1h-2v1h-1v-1h-2v-1h-6v-1h-7v1h-1v-1h-3v1h-149v1h-1v-1h-2v1h-1v-1h-13v1h-1v-1h-4v1h-1v-1h-3v1h-1v-1h-12v1h-1v-1h-3v1h-3v-1h-21v1h-1v-1h-1v1h-2v-1h-2v1h-2v-1h-1v1h-4v-1h-1v1h-1v-1h-2v1h-1v-1h-1v1h-1v-1h-4v1h-2v-1h-5v1h-2v-1h-3v1h-2v-1h-1v1h-1v-1h-8v1h-1v-1h-5v1h-1v-1h-2v1h-1v-1h-1v1h-1v-1h-1v1h-1v-1h-3v1h-1v-1h-4v1h-1v-1h-40v-1h-1v1h-7v-1h-1v1h-3v-1h-1v1h-3v-1h-1v1h-2v-1h-1v1h-1v-1h-2v1h-3v-1h-1v1h-1v-1h-1v1h-1v-1h-2v1h-1v-1h-3v1h-1v-1h-2v1h-1v-1h-6v1h-1v-1h-14v-1h-1v1h-3v-1h-1v1h-1v-1h-2v1h-1v-1h-6v1h-2v-1h-15v-1h-1v1h-6v-1h-3v1h-1v-1h-1v1h-4v-1h-1v1h-1v-1h-5v1h-1v-1h-1v1h-2v-1h-2v1h-1v-1h-1v1h-3v-1h-4v1h-1v-1h-4v1h-1v-1h-4v1h-2v-1h-1v1h-1v-1h-1v1h-1v-1h-1v1h-1v1h-4v2h-1v1h-3v1h-3v1h-191z" fill="#2438FF" fill-opacity="0.85"/>
<path d="M17,536h194v-1h490v1h8v1h308V548h-307v-1h-8v-1h-492v1h-193z" fill="#1E50FF"/>
<path d="M17,539h190v-1h498v1h312V544h-308v-1h-7v-1h-491v1h-194z" fill="#00DCFF"/>
</g>
<path d="M36.5,36.3v6M36.5,595.8v-6M56.5,36.3v6M56.5,595.8v-6M76.5,36.3v6M76.5,595.8v-6M96.5,36.3v6M96.5,595.8v-6M116.5,36.3v12M116.5,595.8v-12M136.5,36.3v6M136.5,595.8v-6M156.5,36.3v6M156.5,595.8v-6M176.5,36.3v6M176.5,595.8v-6M196.5,36.3v6M196.5,595.8v-6M216.5,36.3v12M216.5,595.8v-12M236.5,36.3v6M236.5,595.8v-6M256.5,36.3v6M256.5,595.8v-6M276.5,36.3v6M276.5,595.8v-6M296.5,36.3v6M296.5,595.8v-6M316.5,36.3v12M316.5,595.8v-12M336.5,36.3v6M336.5,595.8v-6M356.5,36.3v6M356.5,595.8v-6M376.5,36.3v6M376.5,595.8v-6M396.5,36.3v6M396.5,595.8v-6M416.5,36.3v12M416.5,595.8v-12M436.5,36.3v6M436.5,595.8v-6M456.5,36.3v6M456.5,595.8v-6M476.5,36.3v6M476.5,595.8v-6M496.5,36.3v6M496.5,595.8v-6M516.5,36.3v12M516.5,595.8v-12M536.5,36.3v6M536.5,595.8v-6M556.5,36.3v6M556.5,595.8v-6M576.5,36.3v6M576.5,595.8v-6M596.5,36.3v6M596.5,595.8v-6M616.5,36.3v12M616.5,595.8v-12M636.5,36.3v6M636.5,595.8v-6M656.5,36.3v6M656.5,595.8v-6M676.5,36.3v6M676.5,595.8v-6M696.5,36.3v6M696.5,595.8v-6M716.5,36.3v12M716.5,595.8v-12M736.5,36.3v6M736.5,595.8v-6M756.5,36.3v6M756.5,595.8v-6M776.5,36.3v6M776.5,595.8v-6M796.5,36.3v6M796.5,595.8v-6M816.5,36.3v12M816.5,595.8v-12M836.5,36.3v6M836.5,595.8v-6M856.5,36.3v6M856.5,595.8v-6M876.5,36.3v6M876.5,595.8v-6M896.5,36.3v6M896.5,595.8v-6M916.5,36.3v12M916.5,595.8v-12M936.5,36.3v6M936.5,595.8v-6M956.5,36.3v6M956.5,595.8v-6M976.5,36.3v6M976.5,595.8v-6M996.5,36.3v6M996.5,595.8v-6M16.5,47.0h6M1016.5,47.0h-6M16.5,58.2h6M1016.5,58.2h-6M16.5,69.4h6M1016.5,69.4h-6M16.5,80.6h6M1016.5,80.6h-6M16.5,91.8h10M1016.5,91.8h-10M16.5,103.0h6M1016.5,103.0h-6M16.5,114.2h6M1016.5,114.2h-6M16.5,125.4h6M1016.5,125.4h-6M16.5,136.6h6M1016.5,136.6h-6M16.5,147.8h10M1016.5,147.8h-10M16.5,159.0h6M1016.5,159.0h-6M16.5,170.2h6M1016.5,170.2h-6M16.5,181.4h6M1016.5,181.4h-6M16.5,192.6h6M1016.5,192.6h-6M16.5,203.8h10M1016.5,203.8h-10M16.5,215.0h6M1016.5,215.0h-6M16.5,226.2h6M1016.5,226.2h-6M16.5,237.4h6M1016.5,237.4h-6M16.5,248.6h6M1016.5,248.6h-6M16.5,259.8h10M1016.5,259.8h-10M16.5,271.0h6M1016.5,271.0h-6M16.5,282.2h6M1016.5,282.2h-6M16.5,293.4h6M1016.5,293.4h-6M16.5,304.6h6M1016.5,304.6h-6M16.5,315.8h10M1016.5,315.8h-10M16.5,327.0h6M1016.5,327.0h-6M16.5,338.2h6M1016.5,338.2h-6M16.5,349.4h6M1016.5,349.4h-6M16.5,360.6h6M1016.5,360.6h-6M16.5,371.8h10M1016.5,371.8h-10M16.5,383.0h6M1016.5,383.0h-6M16.5,394.2h6M1016.5,394.2h-6M16.5,405.4h6M1016.5,405.4h-6M16.5,416.6h6M1016.5,416.6h-6M16.5,427.8h10M1016.5,427.8h-10M16.5,439.0h6M1016.5,439.0h-6M16.5,450.2h6M1016.5,450.2h-6M16.5,461.4h6M1016.5,461.4h-6M16.5,472.6h6M1016.5,472.6h-6M16.5,483.8h10M1016.5,483.8h-10M16.5,495.0h6M1016.5,495.0h-6M16.5,506.2h6M1016.5,506.2h-6M16.5,517.4h6M1016.5,517.4h-6M16.5,528.6h6M1016.5,528.6h-6M16.5,539.8h10M1016.5,539.8h-10M16.5,551.0h6M1016.5,551.0h-6M16.5,562.2h6M1016.5,562.2h-6M16.5,573.4h6M1016.5,573.4h-6M16.5,584.6h6M1016.5,584.6h-6M36.5,312.8v6M513.0,47.0h7.0M56.5,312.8v6M513.0,58.2h7.0M76.5,312.8v6M513.0,69.4h7.0M96.5,312.8v6M513.0,80.6h7.0M116.5,310.8v10M511.0,91.8h11.0M136.5,312.8v6M513.0,103.0h7.0M156.5,312.8v6M513.0,114.2h7.0M176.5,312.8v6M513.0,125.4h7.0M196.5,312.8v6M513.0,136.6h7.0M216.5,310.8v10M511.0,147.8h11.0M236.5,312.8v6M513.0,159.0h7.0M256.5,312.8v6M513.0,170.2h7.0M276.5,312.8v6M513.0,181.4h7.0M296.5,312.8v6M513.0,192.6h7.0M316.5,310.8v10M511.0,203.8h11.0M336.5,312.8v6M513.0,215.0h7.0M356.5,312.8v6M513.0,226.2h7.0M376.5,312.8v6M513.0,237.4h7.0M396.5,312.8v6M513.0,248.6h7.0M416.5,310.8v10M511.0,259.8h11.0M436.5,312.8v6M513.0,271.0h7.0M456.5,312.8v6M513.0,282.2h7.0M476.5,312.8v6M513.0,293.4h7.0M496.5,312.8v6M513.0,304.6h7.0M516.5,310.8v10M511.0,315.8h11.0M536.5,312.8v6M513.0,327.0h7.0M556.5,312.8v6M513.0,338.2h7.0M576.5,312.8v6M513.0,349.4h7.0M596.5,312.8v6M513.0,360.6h7.0M616.5,310.8v10M511.0,371.8h11.0M636.5,312.8v6M513.0,383.0h7.0M656.5,312.8v6M513.0,394.2h7.0M676.5,312.8v6M513.0,405.4h7.0M696.5,312.8v6M513.0,416.6h7.0M716.5,310.8v10M511.0,427.8h11.0M736.5,312.8v6M513.0,439.0h7.0M756.5,312.8v6M513.0,450.2h7.0M776.5,312.8v6M513.0,461.4h7.0M796.5,312.8v6M513.0,472.6h7.0M816.5,310.8v10M511.0,483.8h11.0M836.5,312.8v6M513.0,495.0h7.0M856.5,312.8v6M513.0,506.2h7.0M876.5,312.8v6M513.0,517.4h7.0M896.5,312.8v6M513.0,528.6h7.0M916.5,310.8v10M511.0,539.8h11.0M936.5,312.8v6M513.0,551.0h7.0M956.5,312.8v6M513.0,562.2h7.0M976.5,312.8v6M513.0,573.4h7.0M996.5,312.8v6M513.0,584.6h7.0" stroke="#5E6A86" stroke-width="1" fill="none"/>
<path d="M116.0,47.0h1M116.0,58.2h1M116.0,69.4h1M116.0,80.6h1M116.0,91.8h1M116.0,103.0h1M116.0,114.2h1M116.0,125.4h1M116.0,136.6h1M116.0,147.8h1M116.0,159.0h1M116.0,170.2h1M116.0,181.4h1M116.0,192.6h1M116.0,203.8h1M116.0,215.0h1M116.0,226.2h1M116.0,237.4h1M116.0,248.6h1M116.0,259.8h1M116.0,271.0h1M116.0,282.2h1M116.0,293.4h1M116.0,304.6h1M116.0,315.8h1M116.0,327.0h1M116.0,338.2h1M116.0,349.4h1M116.0,360.6h1M116.0,371.8h1M116.0,383.0h1M116.0,394.2h1M116.0,405.4h1M116.0,416.6h1M116.0,427.8h1M116.0,439.0h1M116.0,450.2h1M116.0,461.4h1M116.0,472.6h1M116.0,483.8h1M116.0,495.0h1M116.0,506.2h1M116.0,517.4h1M116.0,528.6h1M116.0,539.8h1M116.0,551.0h1M116.0,562.2h1M116.0,573.4h1M116.0,584.6h1M216.0,47.0h1M216.0,58.2h1M216.0,69.4h1M216.0,80.6h1M216.0,91.8h1M216.0,103.0h1M216.0,114.2h1M216.0,125.4h1M216.0,136.6h1M216.0,147.8h1M216.0,159.0h1M216.0,170.2h1M216.0,181.4h1M216.0,192.6h1M216.0,203.8h1M216.0,215.0h1M216.0,226.2h1M216.0,237.4h1M216.0,248.6h1M216.0,259.8h1M216.0,271.0h1M216.0,282.2h1M216.0,293.4h1M216.0,304.6h1M216.0,315.8h1M216.0,327.0h1M216.0,338.2h1M216.0,349.4h1M216.0,360.6h1M216.0,371.8h1M216.0,383.0h1M216.0,394.2h1M216.0,405.4h1M216.0,416.6h1M216.0,427.8h1M216.0,439.0h1M216.0,450.2h1M216.0,461.4h1M216.0,472.6h1M216.0,483.8h1M216.0,495.0h1M216.0,506.2h1M216.0,517.4h1M216.0,528.6h1M216.0,539.8h1M216.0,551.0h1M216.0,562.2h1M216.0,573.4h1M216.0,584.6h1M316.0,47.0h1M316.0,58.2h1M316.0,69.4h1M316.0,80.6h1M316.0,91.8h1M316.0,103.0h1M316.0,114.2h1M316.0,125.4h1M316.0,136.6h1M316.0,147.8h1M316.0,159.0h1M316.0,170.2h1M316.0,181.4h1M316.0,192.6h1M316.0,203.8h1M316.0,215.0h1M316.0,226.2h1M316.0,237.4h1M316.0,248.6h1M316.0,259.8h1M316.0,271.0h1M316.0,282.2h1M316.0,293.4h1M316.0,304.6h1M316.0,315.8h1M316.0,327.0h1M316.0,338.2h1M316.0,349.4h1M316.0,360.6h1M316.0,371.8h1M316.0,383.0h1M316.0,394.2h1M316.0,405.4h1M316.0,416.6h1M316.0,427.8h1M316.0,439.0h1M316.0,450.2h1M316.0,461.4h1M316.0,472.6h1M316.0,483.8h1M316.0,495.0h1M316.0,506.2h1M316.0,517.4h1M316.0,528.6h1M316.0,539.8h1M316.0,551.0h1M316.0,562.2h1M316.0,573.4h1M316.0,584.6h1M416.0,47.0h1M416.0,58.2h1M416.0,69.4h1M416.0,80.6h1M416.0,91.8h1M416.0,103.0h1M416.0,114.2h1M416.0,125.4h1M416.0,136.6h1M416.0,147.8h1M416.0,159.0h1M416.0,170.2h1M416.0,181.4h1M416.0,192.6h1M416.0,203.8h1M416.0,215.0h1M416.0,226.2h1M416.0,237.4h1M416.0,248.6h1M416.0,259.8h1M416.0,271.0h1M416.0,282.2h1M416.0,293.4h1M416.0,304.6h1M416.0,315.8h1M416.0,327.0h1M416.0,338.2h1M416.0,349.4h1M416.0,360.6h1M416.0,371.8h1M416.0,383.0h1M416.0,394.2h1M416.0,405.4h1M416.0,416.6h1M416.0,427.8h1M416.0,439.0h1M416.0,450.2h1M416.0,461.4h1M416.0,472.6h1M416.0,483.8h1M416.0,495.0h1M416.0,506.2h1M416.0,517.4h1M416.0,528.6h1M416.0,539.8h1M416.0,551.0h1M416.0,562.2h1M416.0,573.4h1M416.0,584.6h1M616.0,47.0h1M616.0,58.2h1M616.0,69.4h1M616.0,80.6h1M616.0,91.8h1M616.0,103.0h1M616.0,114.2h1M616.0,125.4h1M616.0,136.6h1M616.0,147.8h1M616.0,159.0h1M616.0,170.2h1M616.0,181.4h1M616.0,192.6h1M616.0,203.8h1M616.0,215.0h1M616.0,226.2h1M616.0,237.4h1M616.0,248.6h1M616.0,259.8h1M616.0,271.0h1M616.0,282.2h1M616.0,293.4h1M616.0,304.6h1M616.0,315.8h1M616.0,327.0h1M616.0,338.2h1M616.0,349.4h1M616.0,360.6h1M616.0,371.8h1M616.0,383.0h1M616.0,394.2h1M616.0,405.4h1M616.0,416.6h1M616.0,427.8h1M616.0,439.0h1M616.0,450.2h1M616.0,461.4h1M616.0,472.6h1M616.0,483.8h1M616.0,495.0h1M616.0,506.2h1M616.0,517.4h1M616.0,528.6h1M616.0,539.8h1M616.0,551.0h1M616.0,562.2h1M616.0,573.4h1M616.0,584.6h1M716.0,47.0h1M716.0,58.2h1M716.0,69.4h1M716.0,80.6h1M716.0,91.8h1M716.0,103.0h1M716.0,114.2h1M716.0,125.4h1M716.0,136.6h1M716.0,147.8h1M716.0,159.0h1M716.0,170.2h1M716.0,181.4h1M716.0,192.6h1M716.0,203.8h1M716.0,215.0h1M716.0,226.2h1M716.0,237.4h1M716.0,248.6h1M716.0,259.8h1M716.0,271.0h1M716.0,282.2h1M716.0,293.4h1M716.0,304.6h1M716.0,315.8h1M716.0,327.0h1M716.0,338.2h1M716.0,349.4h1M716.0,360.6h1M716.0,371.8h1M716.0,383.0h1M716.0,394.2h1M716.0,405.4h1M716.0,416.6h1M716.0,427.8h1M716.0,439.0h1M716.0,450.2h1M716.0,461.4h1M716.0,472.6h1M716.0,483.8h1M716.0,495.0h1M716.0,506.2h1M716.0,517.4h1M716.0,528.6h1M716.0,539.8h1M716.0,551.0h1M716.0,562.2h1M716.0,573.4h1M716.0,584.6h1M816.0,47.0h1M816.0,58.2h1M816.0,69.4h1M816.0,80.6h1M816.0,91.8h1M816.0,103.0h1M816.0,114.2h1M816.0,125.4h1M816.0,136.6h1M816.0,147.8h1M816.0,159.0h1M816.0,170.2h1M816.0,181.4h1M816.0,192.6h1M816.0,203.8h1M816.0,215.0h1M816.0,226.2h1M816.0,237.4h1M816.0,248.6h1M816.0,259.8h1M816.0,271.0h1M816.0,282.2h1M816.0,293.4h1M816.0,304.6h1M816.0,315.8h1M816.0,327.0h1M816.0,338.2h1M816.0,349.4h1M816.0,360.6h1M816.0,371.8h1M816.0,383.0h1M816.0,394.2h1M816.0,405.4h1M816.0,416.6h1M816.0,427.8h1M816.0,439.0h1M816.0,450.2h1M816.0,461.4h1M816.0,472.6h1M816.0,483.8h1M816.0,495.0h1M816.0,506.2h1M816.0,517.4h1M816.0,528.6h1M816.0,539.8h1M816.0,551.0h1M816.0,562.2h1M816.0,573.4h1M816.0,584.6h1M916.0,47.0h1M916.0,58.2h1M916.0,69.4h1M916.0,80.6h1M916.0,91.8h1M916.0,103.0h1M916.0,114.2h1M916.0,125.4h1M916.0,136.6h1M916.0,147.8h1M916.0,159.0h1M916.0,170.2h1M916.0,181.4h1M916.0,192.6h1M916.0,203.8h1M916.0,215.0h1M916.0,226.2h1M916.0,237.4h1M916.0,248.6h1M916.0,259.8h1M916.0,271.0h1M916.0,282.2h1M916.0,293.4h1M916.0,304.6h1M916.0,315.8h1M916.0,327.0h1M916.0,338.2h1M916.0,349.4h1M916.0,360.6h1M916.0,371.8h1M916.0,383.0h1M916.0,394.2h1M916.0,405.4h1M916.0,416.6h1M916.0,427.8h1M916.0,439.0h1M916.0,450.2h1M916.0,461.4h1M916.0,472.6h1M916.0,483.8h1M916.0,495.0h1M916.0,506.2h1M916.0,517.4h1M916.0,528.6h1M916.0,539.8h1M916.0,551.0h1M916.0,562.2h1M916.0,573.4h1M916.0,584.6h1M36.0,91.8h1M56.0,91.8h1M76.0,91.8h1M96.0,91.8h1M116.0,91.8h1M136.0,91.8h1M156.0,91.8h1M176.0,91.8h1M196.0,91.8h1M216.0,91.8h1M236.0,91.8h1M256.0,91.8h1M276.0,91.8h1M296.0,91.8h1M316.0,91.8h1M336.0,91.8h1M356.0,91.8h1M376.0,91.8h1M396.0,91.8h1M416.0,91.8h1M436.0,91.8h1M456.0,91.8h1M476.0,91.8h1M496.0,91.8h1M516.0,91.8h1M536.0,91.8h1M556.0,91.8h1M576.0,91.8h1M596.0,91.8h1M616.0,91.8h1M636.0,91.8h1M656.0,91.8h1M676.0,91.8h1M696.0,91.8h1M716.0,91.8h1M736.0,91.8h1M756.0,91.8h1M776.0,91.8h1M796.0,91.8h1M816.0,91.8h1M836.0,91.8h1M856.0,91.8h1M876.0,91.8h1M896.0,91.8h1M916.0,91.8h1M936.0,91.8h1M956.0,91.8h1M976.0,91.8h1M996.0,91.8h1M36.0,147.8h1M56.0,147.8h1M76.0,147.8h1M96.0,147.8h1M116.0,147.8h1M136.0,147.8h1M156.0,147.8h1M176.0,147.8h1M196.0,147.8h1M216.0,147.8h1M236.0,147.8h1M256.0,147.8h1M276.0,147.8h1M296.0,147.8h1M316.0,147.8h1M336.0,147.8h1M356.0,147.8h1M376.0,147.8h1M396.0,147.8h1M416.0,147.8h1M436.0,147.8h1M456.0,147.8h1M476.0,147.8h1M496.0,147.8h1M516.0,147.8h1M536.0,147.8h1M556.0,147.8h1M576.0,147.8h1M596.0,147.8h1M616.0,147.8h1M636.0,147.8h1M656.0,147.8h1M676.0,147.8h1M696.0,147.8h1M716.0,147.8h1M736.0,147.8h1M756.0,147.8h1M776.0,147.8h1M796.0,147.8h1M816.0,147.8h1M836.0,147.8h1M856.0,147.8h1M876.0,147.8h1M896.0,147.8h1M916.0,147.8h1M936.0,147.8h1M956.0,147.8h1M976.0,147.8h1M996.0,147.8h1M36.0,203.8h1M56.0,203.8h1M76.0,203.8h1M96.0,203.8h1M116.0,203.8h1M136.0,203.8h1M156.0,203.8h1M176.0,203.8h1M196.0,203.8h1M216.0,203.8h1M236.0,203.8h1M256.0,203.8h1M276.0,203.8h1M296.0,203.8h1M316.0,203.8h1M336.0,203.8h1M356.0,203.8h1M376.0,203.8h1M396.0,203.8h1M416.0,203.8h1M436.0,203.8h1M456.0,203.8h1M476.0,203.8h1M496.0,203.8h1M516.0,203.8h1M536.0,203.8h1M556.0,203.8h1M576.0,203.8h1M596.0,203.8h1M616.0,203.8h1M636.0,203.8h1M656.0,203.8h1M676.0,203.8h1M696.0,203.8h1M716.0,203.8h1M736.0,203.8h1M756.0,203.8h1M776.0,203.8h1M796.0,203.8h1M816.0,203.8h1M836.0,203.8h1M856.0,203.8h1M876.0,203.8h1M896.0,203.8h1M916.0,203.8h1M936.0,203.8h1M956.0,203.8h1M976.0,203.8h1M996.0,203.8h1M36.0,259.8h1M56.0,259.8h1M76.0,259.8h1M96.0,259.8h1M116.0,259.8h1M136.0,259.8h1M156.0,259.8h1M176.0,259.8h1M196.0,259.8h1M216.0,259.8h1M236.0,259.8h1M256.0,259.8h1M276.0,259.8h1M296.0,259.8h1M316.0,259.8h1M336.0,259.8h1M356.0,259.8h1M376.0,259.8h1M396.0,259.8h1M416.0,259.8h1M436.0,259.8h1M456.0,259.8h1M476.0,259.8h1M496.0,259.8h1M516.0,259.8h1M536.0,259.8h1M556.0,259.8h1M576.0,259.8h1M596.0,259.8h1M616.0,259.8h1M636.0,259.8h1M656.0,259.8h1M676.0,259.8h1M696.0,259.8h1M716.0,259.8h1M736.0,259.8h1M756.0,259.8h1M776.0,259.8h1M796.0,259.8h1M816.0,259.8h1M836.0,259.8h1M856.0,259.8h1M876.0,259.8h1M896.0,259.8h1M916.0,259.8h1M936.0,259.8h1M956.0,259.8h1M976.0,259.8h1M996.0,259.8h1M36.0,371.8h1M56.0,371.8h1M76.0,371.8h1M96.0,371.8h1M116.0,371.8h1M136.0,371.8h1M156.0,371.8h1M176.0,371.8h1M196.0,371.8h1M216.0,371.8h1M236.0,371.8h1M256.0,371.8h1M276.0,371.8h1M296.0,371.8h1M316.0,371.8h1M336.0,371.8h1M356.0,371.8h1M376.0,371.8h1M396.0,371.8h1M416.0,371.8h1M436.0,371.8h1M456.0,371.8h1M476.0,371.8h1M496.0,371.8h1M516.0,371.8h1M536.0,371.8h1M556.0,371.8h1M576.0,371.8h1M596.0,371.8h1M616.0,371.8h1M636.0,371.8h1M656.0,371.8h1M676.0,371.8h1M696.0,371.8h1M716.0,371.8h1M736.0,371.8h1M756.0,371.8h1M776.0,371.8h1M796.0,371.8h1M816.0,371.8h1M836.0,371.8h1M856.0,371.8h1M876.0,371.8h1M896.0,371.8h1M916.0,371.8h1M936.0,371.8h1M956.0,371.8h1M976.0,371.8h1M996.0,371.8h1M36.0,427.8h1M56.0,427.8h1M76.0,427.8h1M96.0,427.8h1M116.0,427.8h1M136.0,427.8h1M156.0,427.8h1M176.0,427.8h1M196.0,427.8h1M216.0,427.8h1M236.0,427.8h1M256.0,427.8h1M276.0,427.8h1M296.0,427.8h1M316.0,427.8h1M336.0,427.8h1M356.0,427.8h1M376.0,427.8h1M396.0,427.8h1M416.0,427.8h1M436.0,427.8h1M456.0,427.8h1M476.0,427.8h1M496.0,427.8h1M516.0,427.8h1M536.0,427.8h1M556.0,427.8h1M576.0,427.8h1M596.0,427.8h1M616.0,427.8h1M636.0,427.8h1M656.0,427.8h1M676.0,427.8h1M696.0,427.8h1M716.0,427.8h1M736.0,427.8h1M756.0,427.8h1M776.0,427.8h1M796.0,427.8h1M816.0,427.8h1M836.0,427.8h1M856.0,427.8h1M876.0,427.8h1M896.0,427.8h1M916.0,427.8h1M936.0,427.8h1M956.0,427.8h1M976.0,427.8h1M996.0,427.8h1M36.0,483.8h1M56.0,483.8h1M76.0,483.8h1M96.0,483.8h1M116.0,483.8h1M136.0,483.8h1M156.0,483.8h1M176.0,483.8h1M196.0,483.8h1M216.0,483.8h1M236.0,483.8h1M256.0,483.8h1M276.0,483.8h1M296.0,483.8h1M316.0,483.8h1M336.0,483.8h1M356.0,483.8h1M376.0,483.8h1M396.0,483.8h1M416.0,483.8h1M436.0,483.8h1M456.0,483.8h1M476.0,483.8h1M496.0,483.8h1M516.0,483.8h1M536.0,483.8h1M556.0,483.8h1M576.0,483.8h1M596.0,483.8h1M616.0,483.8h1M636.0,483.8h1M656.0,483.8h1M676.0,483.8h1M696.0,483.8h1M716.0,483.8h1M736.0,483.8h1M756.0,483.8h1M776.0,483.8h1M796.0,483.8h1M816.0,483.8h1M836.0,483.8h1M856.0,483.8h1M876.0,483.8h1M896.0,483.8h1M916.0,483.8h1M936.0,483.8h1M956.0,483.8h1M976.0,483.8h1M996.0,483.8h1M36.0,539.8h1M56.0,539.8h1M76.0,539.8h1M96.0,539.8h1M116.0,539.8h1M136.0,539.8h1M156.0,539.8h1M176.0,539.8h1M196.0,539.8h1M216.0,539.8h1M236.0,539.8h1M256.0,539.8h1M276.0,539.8h1M296.0,539.8h1M316.0,539.8h1M336.0,539.8h1M356.0,539.8h1M376.0,539.8h1M396.0,539.8h1M416.0,539.8h1M436.0,539.8h1M456.0,539.8h1M476.0,539.8h1M496.0,539.8h1M516.0,539.8h1M536.0,539.8h1M556.0,539.8h1M576.0,539.8h1M596.0,539.8h1M616.0,539.8h1M636.0,539.8h1M656.0,539.8h1M676.0,539.8h1M696.0,539.8h1M716.0,539.8h1M736.0,539.8h1M756.0,539.8h1M776.0,539.8h1M796.0,539.8h1M816.0,539.8h1M836.0,539.8h1M856.0,539.8h1M876.0,539.8h1M896.0,539.8h1M916.0,539.8h1M936.0,539.8h1M956.0,539.8h1M976.0,539.8h1M996.0,539.8h1" stroke="#5E6A86" stroke-width="1.2" fill="none"/>
<rect x="16.5" y="35.8" width="1000.0" height="560.0" fill="none" stroke="#5E6A86" stroke-width="1"/>
<path d="M516.5,36.3V596.3M16.5,315.8H1016.5" stroke="#5E6A86" stroke-width="1" fill="none"/>
<clipPath id="wv"><path d="M17,194h4v2h1v-2h2v2h1v-2h5v2h1v-2h2v2h1v-2h2v2h1v-2h2v2h1v-2h8v2h1v-2h5v2h1v-2h2v2h1v-2h2v2h1v-2h2v2h1v-2h2v2h1v-2h2v2h1v-2h2v2h1v-2h2v2h1v-2h2v2h1v-2h2v2h1v-2h2v2h1v-2h5v2h1v-2h2v2h1v-2h2v2h1v-2h11v2h1v-2h2v2h1v-2h2v2h1v-2h5v2h1v-2h5v2h1v-2h2v2h1v-2h5v2h1v-2h2v2h1v-2h11v2h1v-2h2v2h1v-2h2v2h1v-2h2v2h1v-2h2v2h1v-2h2v2h1v-2h5v2h1v-2h5v2h1v-2h2v2h1v-2h2v2h1v-2h5v2h1v-2h2v2h1v-2h2v2h1v-2h2v2h1v-2h2v2h1v-2h2v2h1v-4h1v-4h1v-3h1v-2h1v-2h1v-2h1v-2h1v-2h2v-4h1v-2h1v2h1v-4h1v-1h1v3h1v-3h2v2h1v-2h2v3h1v-1h1v1h1v4h1v-1h1v1h1v4h1v-1h1v2h1v1h1v1h1v2h1v1h1v1h1v2h1v4h1v-2h1v2h1v1h1v2h1v1h1v4h1v-1h1v1h1v4h1v-2h1v1h1v1h1v1h1v1h2v1h1v1h1v3h1v-3h1v1h1v3h1v-2h2v3h1v-3h1v1h1v2h1v-2h5v1h3v2h1v-2h2v2h1v-2h2v2h1v-2h4v-1h1v3h1v-3h2v3h1v-3h2v2h1v-2h1v-1h1v3h1v-3h2v2h1v-3h2v3h1v-3h1v-1h1v3h1v-3h2v-1h5v-1h1v3h1v-3h2v2h1v-3h2v2h1v-3h2v2h1v-2h1v-1h1v3h1v-3h2v2h1v-2h1v-1h6v-1h4v2h1v-2h1v-1h1v3h1v-3h2v2h1v-2h2v2h1v-3h2v3h1v-3h5v2h1v-3h2v3h1v-3h2v3h1v-3h5v2h1v-3h2v3h1v-3h11v2h1v-2h5v2h1v-3h2v3h1v-3h2v3h1v-3h2v3h1v-3h2v3h1v-3h2v3h1v-3h2v3h1v-3h2v3h1v-3h8v2h1v-2h8v2h1v-2h5v2h1v-2h2v2h1v-2h1v-1h1v3h1v-3h8v3h1v-3h2v3h1v-3h2v3h1v-3h8v3h1v-3h5v3h1v-3h2v3h1v-3h2v3h1v-3h5v3h1v-3h2v3h1v-3h5v3h1v-3h11v3h1v-3h2v3h1v-3h2v3h1v-3h2v3h1v-3h2v3h1v-3h2v3h1v-3h2v3h1v-3h2v3h1v-3h2v3h1v-3h2v3h1v-3h2v3h1v-3h2v3h1v-3h5v3h1v-3h2v3h1v-3h2v3h1v-3h2v3h1v-3h2v3h1v-3h5v3h1v-3h2v3h1v-3h2v3h1v-3h2v3h1v-3h2v3h1v-3h2v3h1v-3h2v3h1v-3h8v3h1v-3h2v3h1v-3h2v3h1v-3h2v3h1v-3h2v3h1v-2h5v2h1v-2h2v2h1v-2h2v2h1v-2h5v2h1v-2h2v2h1v-2h8v2h1v-2h2v2h1v-2h2v2h1v-2h2v2h1v-2h2v2h1v-2h5v2h1v-2h2v2h1v-2h5v2h1v-2h2v2h1v-2h2v2h1v-2h5v2h1v-2h2v2h1v-2h2v2h1v-2h5v2h1v-2h2v2h1v-2h5v2h1v-2h5v2h1v-2h2v2h1v-2h2v3h1v-1h1v1h1v2h1v2h1v3h1v2h1v2h1v2h1v2h1v2h1v1h1v1h1v2h1v1h1v1h4v1h4v-1h1v-2h1v-3h1v-1h2v-4h1v-2h1v-1h1v-2h1v-1h1v1h1v-4h1v-2h1v-2h1v-1h1v-2h1v-2h1v-1h1v-1h1v1h1v-4h1v-1h1v2h1v-3h1v-1h1v-1h1v-1h2v-1h2v-1h1v2h1v-3h5v2h1v-3h5v2h1v-2h2v2h1v-2h8v2h1v-2h5v3h1v-2h2v3h1v-3h2v3h1v-2h2v3h1v-2h2v3h1v-3h2v1h3v3h1v-2h2v3h1v-3h2v3h1v-2h2v3h1v-2h2v3h1v-3h1v1h1v2h1v-2h2v1h4v1h2v3h1v-3h2v3h1v-2h5v3h1v-2h2v2h1v-2h2v3h1v-3h2v3h1v-2h2v2h1v-2h5v3h1v-3h1v1h1v2h1v-2h5v3h1v-3h2v3h1v-3h7v1h1v2h1v-2h2v2h1v-2h2v2h1v-2h2v3h1v-3h5v3h1v-3h8v3h1v-3h1v1h4v2h1v-2h2v2h1v-2h2v2h1v-2h2v2h1v-2h2v2h1v-2h8v2h1v-2h2v2h1v-2h2v2h1v-2h5v2h1v-2h2v2h1v-2h2v2h1v-2h5v2h1v-2h2v2h1v-2h2v2h1v-2h2v2h1v-2h2v2h1v-2h5v2h1v-2h2v2h1v-2h2v2h1v-2h2v2h1v-2h2v2h1v-2h2v2h1v-2h2v2h1v-2h8v2h1v-2h11v2h1v-2h5V219h-1v-2h-1v2h-2v-2h-1v2h-2v-2h-1v2h-2v-2h-1v2h-2v-2h-1v2h-2v-2h-1v2h-2v-2h-1v2h-2v-2h-1v2h-2v-2h-1v2h-5v-2h-1v2h-2v-2h-1v2h-20v-2h-1v2h-2v-2h-1v2h-14v-2h-1v2h-2v-2h-1v2h-5v-2h-1v2h-2v-2h-1v2h-2v-2h-1v2h-11v-2h-1v2h-2v-2h-1v2h-5v-2h-1v2h-5v-2h-1v2h-1v-1h-4v-1h-1v1h-17v-2h-1v2h-3v-1h-2v-1h-1v1h-2v-1h-1v1h-8v-2h-1v2h-2v-2h-1v1h-9v-1h-2v-1h-1v1h-2v-2h-1v2h-4v-1h-1v-1h-1v1h-2v-2h-1v2h-1v-1h-4v-2h-1v1h-3v-1h-4v-1h-1v-1h-1v1h-3v-1h-4v-1h-1v-2h-1v2h-2v-2h-1v1h-4v-1h-1v-1h-1v1h-2v-1h-3v-2h-1v2h-1v-1h-4v-2h-1v1h-5v-2h-1v2h-2v-2h-1v2h-2v-2h-1v2h-2v-2h-1v2h-2v-2h-1v2h-2v1h-4v1h-2v-1h-1v2h-2v-1h-1v3h-2v-1h-1v3h-2v1h-1v1h-1v2h-1v1h-1v1h-1v1h-2v4h-1v1h-1v2h-1v2h-1v1h-1v2h-1v1h-1v2h-2v3h-1v2h-1v2h-1v2h-1v1h-2v2h-11v-1h-1v-1h-1v-1h-1v-1h-1v-2h-1v-1h-1v-2h-1v-1h-1v-2h-1v-3h-1v-2h-1v-2h-1v-2h-1v-2h-1v-1h-1v-3h-1v2h-5v-2h-1v2h-2v-2h-1v2h-2v-2h-1v2h-5v-2h-1v2h-2v-2h-1v2h-2v-2h-1v2h-2v-2h-1v2h-2v-2h-1v2h-5v-2h-1v2h-2v-2h-1v2h-5v-2h-1v2h-5v-2h-1v2h-5v-2h-1v2h-2v-2h-1v2h-2v-2h-1v2h-2v-2h-1v2h-2v-2h-1v2h-11v-2h-1v2h-8v-2h-1v2h-2v-2h-1v2h-5v-2h-1v2h-5v-2h-1v2h-8v-2h-1v2h-2v-2h-1v2h-5v-2h-1v2h-2v-2h-1v2h-2v-2h-1v2h-2v-2h-1v2h-2v-2h-1v2h-5v-2h-1v2h-5v-2h-1v2h-5v-2h-1v2h-2v-2h-1v2h-5v-2h-1v2h-2v-2h-1v2h-5v-2h-1v2h-2v-2h-1v2h-2v-2h-1v2h-2v-2h-1v2h-2v-2h-1v2h-2v-2h-1v2h-2v-2h-1v2h-2v-2h-1v2h-2v-2h-1v2h-2v-2h-1v2h-6v-1h-2v-1h-1v1h-2v-1h-1v1h-2v-1h-1v1h-2v-1h-1v1h-2v-1h-1v1h-2v-1h-1v1h-2v-1h-1v1h-5v-1h-1v1h-2v-1h-1v1h-2v-1h-1v1h-8v-1h-1v1h-6v1h-5v-2h-1v2h-5v-2h-1v2h-2v-2h-1v2h-5v-2h-1v2h-5v-2h-1v2h-2v-2h-1v2h-5v-1h-1v1h-8v-1h-1v1h-5v-1h-1v1h-2v-1h-1v2h-2v-2h-1v2h-2v-2h-1v2h-2v-2h-1v2h-2v-2h-1v2h-2v-1h-1v1h-2v-1h-1v1h-2v-1h-1v1h-1v1h-1v-2h-1v2h-2v-2h-1v2h-5v-1h-1v2h-2v-2h-1v2h-5v-1h-1v1h-1v1h-1v-2h-1v2h-5v-1h-1v2h-5v1h-6v-1h-1v2h-5v-1h-1v2h-4v1h-4v1h-4v1h-2v-2h-1v2h-1v1h-1v-2h-1v2h-2v1h-3v-1h-1v2h-5v-1h-1v2h-5v-1h-1v1h-1v1h-7v-2h-1v2h-2v-2h-1v2h-5v-2h-1v2h-5v-2h-1v1h-4v-1h-1v-1h-1v1h-2v-2h-1v1h-2v-1h-2v-1h-1v-2h-1v1h-1v-1h-1v-2h-1v1h-1v-1h-1v-3h-2v-1h-1v-3h-2v-1h-1v-3h-2v-1h-1v-3h-2v-2h-1v-1h-1v-1h-1v-2h-1v-1h-1v-1h-1v-2h-1v-1h-1v-2h-1v-1h-1v-3h-2v-1h-1v-3h-1v1h-2v1h-2v1h-2v3h-1v2h-2v4h-1v2h-1v2h-1v2h-1v2h-1v1h-1v6h-1v2h-1v-2h-1v2h-8v-2h-1v2h-5v-2h-1v2h-2v-2h-1v2h-2v-2h-1v2h-2v-2h-1v2h-5v-2h-1v2h-5v-2h-1v2h-2v-2h-1v2h-2v-2h-1v2h-5v-2h-1v2h-8v-2h-1v2h-5v-2h-1v2h-5v-2h-1v2h-5v-2h-1v2h-5v-2h-1v2h-5v-2h-1v2h-2v-2h-1v2h-5v-2h-1v2h-17v-2h-1v2h-2v-2h-1v2h-2v-2h-1v2h-5v-2h-1v2h-5v-2h-1v2h-2v-2h-1v2h-2v-2h-1v2h-8v-2h-1v2h-2v-2h-1v2h-2v-2h-1v2h-2v-2h-1v2h-5v-2h-1v2h-2v-2h-1v2h-2v-2h-1v2h-11v-2h-1v2h-2v-2h-1v2h-2v-2h-1v2h-2z"/><path d="M17,369h192v-1h3v-1h2v-1h3v-1h2v-1h59v1h1v-1h3v1h1v-1h1v1h33v1h1v-1h1v1h2v-1h1v1h53v1h1v-1h2v1h1v-1h1v1h1v-1h1v1h2v-1h2v1h3v-1h2v1h1v-1h2v1h2v-1h1v1h142v-1h1v1h1v-1h1v1h9v-1h1v1h3v-1h1v1h2v-1h1v1h1v-1h1v1h2v-1h1v1h2v-1h1v1h3v-1h1v1h1v-1h1v1h1v-1h1v1h2v-1h1v1h10v-1h1v1h2v-1h1v1h1v-1h1v1h3v-1h2v1h2v-1h1v1h2v-1h2v1h1v-1h1v1h1v-1h4v1h1v-1h2v1h1v-1h2v1h1v-1h1v1h1v-1h4v1h1v-1h4v1h1v-1h5v1h1v-1h4v1h3v-1h1v1h1v-1h3v1h1v-1h1v1h3v-1h3v1h2v-1h11v1h1v-1h1v1h1v-1h28v-1h3v1h6v1h3v1h3v1h4v1h3v1h3v1h20v-1h31v-1h1v1h3v-1h1v1h1v-1h4v1h1v-1h50v-1h1v1h1v-1h1v1h1v-1h174V548h-310v-1h-1v1h-1v-1h-497v1h-1v-1h-1v1h-189z"/></clipPath>
<g clip-path="url(#wv)"><path d="M16.5,192.6h6M1016.5,192.6h-6M513.0,192.6h7.0M115.9,192.6h1.2M215.9,192.6h1.2M315.9,192.6h1.2M415.9,192.6h1.2M615.9,192.6h1.2M715.9,192.6h1.2M815.9,192.6h1.2M915.9,192.6h1.2M16.5,203.8h10M1016.5,203.8h-10M511.0,203.8h11.0M115.9,203.8h1.2M215.9,203.8h1.2M315.9,203.8h1.2M415.9,203.8h1.2M615.9,203.8h1.2M715.9,203.8h1.2M815.9,203.8h1.2M915.9,203.8h1.2M16.5,215.0h6M1016.5,215.0h-6M513.0,215.0h7.0M115.9,215.0h1.2M215.9,215.0h1.2M315.9,215.0h1.2M415.9,215.0h1.2M615.9,215.0h1.2M715.9,215.0h1.2M815.9,215.0h1.2M915.9,215.0h1.2M16.5,226.2h6M1016.5,226.2h-6M513.0,226.2h7.0M115.9,226.2h1.2M215.9,226.2h1.2M315.9,226.2h1.2M415.9,226.2h1.2M615.9,226.2h1.2M715.9,226.2h1.2M815.9,226.2h1.2M915.9,226.2h1.2M16.5,237.4h6M1016.5,237.4h-6M513.0,237.4h7.0M115.9,237.4h1.2M215.9,237.4h1.2M315.9,237.4h1.2M415.9,237.4h1.2M615.9,237.4h1.2M715.9,237.4h1.2M815.9,237.4h1.2M915.9,237.4h1.2M16.5,248.6h6M1016.5,248.6h-6M513.0,248.6h7.0M115.9,248.6h1.2M215.9,248.6h1.2M315.9,248.6h1.2M415.9,248.6h1.2M615.9,248.6h1.2M715.9,248.6h1.2M815.9,248.6h1.2M915.9,248.6h1.2M16.5,360.6h6M1016.5,360.6h-6M513.0,360.6h7.0M115.9,360.6h1.2M215.9,360.6h1.2M315.9,360.6h1.2M415.9,360.6h1.2M615.9,360.6h1.2M715.9,360.6h1.2M815.9,360.6h1.2M915.9,360.6h1.2M16.5,371.8h10M1016.5,371.8h-10M511.0,371.8h11.0M115.9,371.8h1.2M215.9,371.8h1.2M315.9,371.8h1.2M415.9,371.8h1.2M615.9,371.8h1.2M715.9,371.8h1.2M815.9,371.8h1.2M915.9,371.8h1.2M16.5,383.0h6M1016.5,383.0h-6M513.0,383.0h7.0M115.9,383.0h1.2M215.9,383.0h1.2M315.9,383.0h1.2M415.9,383.0h1.2M615.9,383.0h1.2M715.9,383.0h1.2M815.9,383.0h1.2M915.9,383.0h1.2M16.5,394.2h6M1016.5,394.2h-6M513.0,394.2h7.0M115.9,394.2h1.2M215.9,394.2h1.2M315.9,394.2h1.2M415.9,394.2h1.2M615.9,394.2h1.2M715.9,394.2h1.2M815.9,394.2h1.2M915.9,394.2h1.2M16.5,405.4h6M1016.5,405.4h-6M513.0,405.4h7.0M115.9,405.4h1.2M215.9,405.4h1.2M315.9,405.4h1.2M415.9,405.4h1.2M615.9,405.4h1.2M715.9,405.4h1.2M815.9,405.4h1.2M915.9,405.4h1.2M16.5,416.6h6M1016.5,416.6h-6M513.0,416.6h7.0M115.9,416.6h1.2M215.9,416.6h1.2M315.9,416.6h1.2M415.9,416.6h1.2M615.9,416.6h1.2M715.9,416.6h1.2M815.9,416.6h1.2M915.9,416.6h1.2M16.5,427.8h10M1016.5,427.8h-10M511.0,427.8h11.0M115.9,427.8h1.2M215.9,427.8h1.2M315.9,427.8h1.2M415.9,427.8h1.2M615.9,427.8h1.2M715.9,427.8h1.2M815.9,427.8h1.2M915.9,427.8h1.2M16.5,439.0h6M1016.5,439.0h-6M513.0,439.0h7.0M115.9,439.0h1.2M215.9,439.0h1.2M315.9,439.0h1.2M415.9,439.0h1.2M615.9,439.0h1.2M715.9,439.0h1.2M815.9,439.0h1.2M915.9,439.0h1.2M16.5,450.2h6M1016.5,450.2h-6M513.0,450.2h7.0M115.9,450.2h1.2M215.9,450.2h1.2M315.9,450.2h1.2M415.9,450.2h1.2M615.9,450.2h1.2M715.9,450.2h1.2M815.9,450.2h1.2M915.9,450.2h1.2M16.5,461.4h6M1016.5,461.4h-6M513.0,461.4h7.0M115.9,461.4h1.2M215.9,461.4h1.2M315.9,461.4h1.2M415.9,461.4h1.2M615.9,461.4h1.2M715.9,461.4h1.2M815.9,461.4h1.2M915.9,461.4h1.2M16.5,472.6h6M1016.5,472.6h-6M513.0,472.6h7.0M115.9,472.6h1.2M215.9,472.6h1.2M315.9,472.6h1.2M415.9,472.6h1.2M615.9,472.6h1.2M715.9,472.6h1.2M815.9,472.6h1.2M915.9,472.6h1.2M16.5,483.8h10M1016.5,483.8h-10M511.0,483.8h11.0M115.9,483.8h1.2M215.9,483.8h1.2M315.9,483.8h1.2M415.9,483.8h1.2M615.9,483.8h1.2M715.9,483.8h1.2M815.9,483.8h1.2M915.9,483.8h1.2M16.5,495.0h6M1016.5,495.0h-6M513.0,495.0h7.0M115.9,495.0h1.2M215.9,495.0h1.2M315.9,495.0h1.2M415.9,495.0h1.2M615.9,495.0h1.2M715.9,495.0h1.2M815.9,495.0h1.2M915.9,495.0h1.2M16.5,506.2h6M1016.5,506.2h-6M513.0,506.2h7.0M115.9,506.2h1.2M215.9,506.2h1.2M315.9,506.2h1.2M415.9,506.2h1.2M615.9,506.2h1.2M715.9,506.2h1.2M815.9,506.2h1.2M915.9,506.2h1.2M16.5,517.4h6M1016.5,517.4h-6M513.0,517.4h7.0M115.9,517.4h1.2M215.9,517.4h1.2M315.9,517.4h1.2M415.9,517.4h1.2M615.9,517.4h1.2M715.9,517.4h1.2M815.9,517.4h1.2M915.9,517.4h1.2M16.5,528.6h6M1016.5,528.6h-6M513.0,528.6h7.0M115.9,528.6h1.2M215.9,528.6h1.2M315.9,528.6h1.2M415.9,528.6h1.2M615.9,528.6h1.2M715.9,528.6h1.2M815.9,528.6h1.2M915.9,528.6h1.2M16.5,539.8h10M1016.5,539.8h-10M511.0,539.8h11.0M115.9,539.8h1.2M215.9,539.8h1.2M315.9,539.8h1.2M415.9,539.8h1.2M615.9,539.8h1.2M715.9,539.8h1.2M815.9,539.8h1.2M915.9,539.8h1.2M16.5,551.0h6M1016.5,551.0h-6M513.0,551.0h7.0M115.9,551.0h1.2M215.9,551.0h1.2M315.9,551.0h1.2M415.9,551.0h1.2M615.9,551.0h1.2M715.9,551.0h1.2M815.9,551.0h1.2M915.9,551.0h1.2M35.9,203.8h1.2M55.9,203.8h1.2M75.9,203.8h1.2M95.9,203.8h1.2M115.9,203.8h1.2M135.9,203.8h1.2M155.9,203.8h1.2M175.9,203.8h1.2M195.9,203.8h1.2M215.9,203.8h1.2M235.9,203.8h1.2M255.9,203.8h1.2M275.9,203.8h1.2M295.9,203.8h1.2M315.9,203.8h1.2M335.9,203.8h1.2M355.9,203.8h1.2M375.9,203.8h1.2M395.9,203.8h1.2M415.9,203.8h1.2M435.9,203.8h1.2M455.9,203.8h1.2M475.9,203.8h1.2M495.9,203.8h1.2M515.9,203.8h1.2M535.9,203.8h1.2M555.9,203.8h1.2M575.9,203.8h1.2M595.9,203.8h1.2M615.9,203.8h1.2M635.9,203.8h1.2M655.9,203.8h1.2M675.9,203.8h1.2M695.9,203.8h1.2M715.9,203.8h1.2M735.9,203.8h1.2M755.9,203.8h1.2M775.9,203.8h1.2M795.9,203.8h1.2M815.9,203.8h1.2M835.9,203.8h1.2M855.9,203.8h1.2M875.9,203.8h1.2M895.9,203.8h1.2M915.9,203.8h1.2M935.9,203.8h1.2M955.9,203.8h1.2M975.9,203.8h1.2M995.9,203.8h1.2M35.9,371.8h1.2M55.9,371.8h1.2M75.9,371.8h1.2M95.9,371.8h1.2M115.9,371.8h1.2M135.9,371.8h1.2M155.9,371.8h1.2M175.9,371.8h1.2M195.9,371.8h1.2M215.9,371.8h1.2M235.9,371.8h1.2M255.9,371.8h1.2M275.9,371.8h1.2M295.9,371.8h1.2M315.9,371.8h1.2M335.9,371.8h1.2M355.9,371.8h1.2M375.9,371.8h1.2M395.9,371.8h1.2M415.9,371.8h1.2M435.9,371.8h1.2M455.9,371.8h1.2M475.9,371.8h1.2M495.9,371.8h1.2M515.9,371.8h1.2M535.9,371.8h1.2M555.9,371.8h1.2M575.9,371.8h1.2M595.9,371.8h1.2M615.9,371.8h1.2M635.9,371.8h1.2M655.9,371.8h1.2M675.9,371.8h1.2M695.9,371.8h1.2M715.9,371.8h1.2M735.9,371.8h1.2M755.9,371.8h1.2M775.9,371.8h1.2M795.9,371.8h1.2M815.9,371.8h1.2M835.9,371.8h1.2M855.9,371.8h1.2M875.9,371.8h1.2M895.9,371.8h1.2M915.9,371.8h1.2M935.9,371.8h1.2M955.9,371.8h1.2M975.9,371.8h1.2M995.9,371.8h1.2M35.9,427.8h1.2M55.9,427.8h1.2M75.9,427.8h1.2M95.9,427.8h1.2M115.9,427.8h1.2M135.9,427.8h1.2M155.9,427.8h1.2M175.9,427.8h1.2M195.9,427.8h1.2M215.9,427.8h1.2M235.9,427.8h1.2M255.9,427.8h1.2M275.9,427.8h1.2M295.9,427.8h1.2M315.9,427.8h1.2M335.9,427.8h1.2M355.9,427.8h1.2M375.9,427.8h1.2M395.9,427.8h1.2M415.9,427.8h1.2M435.9,427.8h1.2M455.9,427.8h1.2M475.9,427.8h1.2M495.9,427.8h1.2M515.9,427.8h1.2M535.9,427.8h1.2M555.9,427.8h1.2M575.9,427.8h1.2M595.9,427.8h1.2M615.9,427.8h1.2M635.9,427.8h1.2M655.9,427.8h1.2M675.9,427.8h1.2M695.9,427.8h1.2M715.9,427.8h1.2M735.9,427.8h1.2M755.9,427.8h1.2M775.9,427.8h1.2M795.9,427.8h1.2M815.9,427.8h1.2M835.9,427.8h1.2M855.9,427.8h1.2M875.9,427.8h1.2M895.9,427.8h1.2M915.9,427.8h1.2M935.9,427.8h1.2M955.9,427.8h1.2M975.9,427.8h1.2M995.9,427.8h1.2M35.9,483.8h1.2M55.9,483.8h1.2M75.9,483.8h1.2M95.9,483.8h1.2M115.9,483.8h1.2M135.9,483.8h1.2M155.9,483.8h1.2M175.9,483.8h1.2M195.9,483.8h1.2M215.9,483.8h1.2M235.9,483.8h1.2M255.9,483.8h1.2M275.9,483.8h1.2M295.9,483.8h1.2M315.9,483.8h1.2M335.9,483.8h1.2M355.9,483.8h1.2M375.9,483.8h1.2M395.9,483.8h1.2M415.9,483.8h1.2M435.9,483.8h1.2M455.9,483.8h1.2M475.9,483.8h1.2M495.9,483.8h1.2M515.9,483.8h1.2M535.9,483.8h1.2M555.9,483.8h1.2M575.9,483.8h1.2M595.9,483.8h1.2M615.9,483.8h1.2M635.9,483.8h1.2M655.9,483.8h1.2M675.9,483.8h1.2M695.9,483.8h1.2M715.9,483.8h1.2M735.9,483.8h1.2M755.9,483.8h1.2M775.9,483.8h1.2M795.9,483.8h1.2M815.9,483.8h1.2M835.9,483.8h1.2M855.9,483.8h1.2M875.9,483.8h1.2M895.9,483.8h1.2M915.9,483.8h1.2M935.9,483.8h1.2M955.9,483.8h1.2M975.9,483.8h1.2M995.9,483.8h1.2M35.9,539.8h1.2M55.9,539.8h1.2M75.9,539.8h1.2M95.9,539.8h1.2M115.9,539.8h1.2M135.9,539.8h1.2M155.9,539.8h1.2M175.9,539.8h1.2M195.9,539.8h1.2M215.9,539.8h1.2M235.9,539.8h1.2M255.9,539.8h1.2M275.9,539.8h1.2M295.9,539.8h1.2M315.9,539.8h1.2M335.9,539.8h1.2M355.9,539.8h1.2M375.9,539.8h1.2M395.9,539.8h1.2M415.9,539.8h1.2M435.9,539.8h1.2M455.9,539.8h1.2M475.9,539.8h1.2M495.9,539.8h1.2M515.9,539.8h1.2M535.9,539.8h1.2M555.9,539.8h1.2M575.9,539.8h1.2M595.9,539.8h1.2M615.9,539.8h1.2M635.9,539.8h1.2M655.9,539.8h1.2M675.9,539.8h1.2M695.9,539.8h1.2M715.9,539.8h1.2M735.9,539.8h1.2M755.9,539.8h1.2M775.9,539.8h1.2M795.9,539.8h1.2M815.9,539.8h1.2M835.9,539.8h1.2M855.9,539.8h1.2M875.9,539.8h1.2M895.9,539.8h1.2M915.9,539.8h1.2M935.9,539.8h1.2M955.9,539.8h1.2M975.9,539.8h1.2M995.9,539.8h1.2" stroke="#D8D8CC" stroke-width="1.2" fill="none"/></g>

<line x1="17" y1="164.6" x2="1016" y2="164.6" stroke="#24E424" stroke-width="1.15" stroke-dasharray="3 2"/>
<line x1="17" y1="248.7" x2="1016" y2="248.7" stroke="#28E628" stroke-width="1.5"/>
<path d="M215,36h10.5l-5.25,9.5z" fill="#1272FF"/>
<path d="M1019.5,170.1H1004" stroke="#1EE61E" stroke-width="1.3"/><path d="M995.8,170.1l8.4,-4.6v9.2z" fill="#10EE10"/>
<circle cx="116.5" cy="156" r="6.3" fill="#1262F2"/><text x="116.6" y="160.2" font-size="12" fill="#fff" stroke="#fff" stroke-width="0.3" text-anchor="middle">b</text>
<circle cx="116.5" cy="240" r="6.3" fill="#1262F2"/><text x="116.6" y="243.4" font-size="12" fill="#fff" stroke="#fff" stroke-width="0.3" text-anchor="middle">a</text>
<text transform="translate(24.3,179) scale(0.81,1)" font-size="12.5" fill="#1EE61E" stroke="#1EE61E" stroke-width="0.35">VOUT</text>
<text transform="translate(28,578.6) scale(0.81,1)" font-size="12.5" fill="#1420E6" stroke="#1420E6" stroke-width="0.35">SW</text>
<g font-size="12" fill="#000" stroke="#000" stroke-width="0.25">
<text transform="translate(113.8,60) scale(0.955,1)">Swordfish MCM_ES1.1</text>
<text transform="translate(116.2,78) scale(0.968,1)">Vin=12V,Vout=1.0V</text>
<text transform="translate(116.0,95.7) scale(0.963,1)">Iout=8A to 32A @ 2.5A/usec</text>
<text transform="translate(614.8,60) scale(0.963,1)">RCSP=Rx2, FSW=625kHz</text>
</g>


<path d="M18,203.8h7" stroke="#fff" stroke-width="3.6"/><path d="M18,203.8h7" stroke="#14EA14" stroke-width="2.2"/><path d="M23.6,198.2l7.6,5.6l-7.6,5.6z" fill="#14EA14" stroke="#fff" stroke-width="0.8"/>
<circle cx="10.6" cy="203.8" r="8.8" fill="#14EA14" stroke="#1262F2" stroke-width="2"/><text x="10.6" y="208" font-size="12" fill="#fff" text-anchor="middle">3</text>
<path d="M18,539.7h7" stroke="#fff" stroke-width="3.6"/><path d="M18,539.7h7" stroke="#0808F8" stroke-width="2.2"/><path d="M24,534l7,5.7l-7,5.7z" fill="#0808F8" stroke="#fff" stroke-width="1"/>
<circle cx="10.5" cy="539.7" r="8.6" fill="#0808F8" stroke="#555" stroke-width="1.6"/><text x="10.5" y="544" font-size="12" fill="#fff" text-anchor="middle">1</text>

</svg>
<div id="panel">
<div class="box" style="left:5px;top:2px;width:281px;height:47px"></div>
<div class="pill pb" style="left:14.8px;top:11.5px;width:30.2px;height:10.9px;line-height:9.1px">C1</div>
<div class="pill pg" style="left:14.8px;top:32.6px;width:30.2px;height:10.9px;line-height:9.1px">C3</div>
<div class="t" style="left:51.0px;top:7.8px;">4.0V/div</div>
<div class="t" style="left:51.0px;top:28.8px;">20.0mV</div>
<div class="t" style="left:101.3px;top:28.8px;color:#808080">Offset:1.0V</div>
<div class="t" style="left:166.4px;top:7.8px;">1MΩ</div>
<div class="t" style="left:198.6px;top:7.9px;font-size:8.5px;font-weight:bold;line-height:10px">B</div>
<div class="t" style="left:204.3px;top:11.1px;font-size:11px;font-weight:normal;line-height:13px;-webkit-text-stroke:0.35px #000">W</div>
<div class="t" style="left:213.9px;top:7.8px;">:20.0M</div>
<div class="t" style="left:196.4px;top:28.8px;">1MΩ</div>
<div class="t" style="left:228.6px;top:28.9px;font-size:8.5px;font-weight:bold;line-height:10px">B</div>
<div class="t" style="left:234.3px;top:32.1px;font-size:11px;font-weight:normal;line-height:13px;-webkit-text-stroke:0.35px #000">W</div>
<div class="t" style="left:243.9px;top:28.8px;">:20.0M</div>
<div class="box" style="left:290px;top:2px;width:136px;height:70px"></div>
<div class="pill pg" style="left:299.6px;top:12.7px;width:33.2px;height:11.4px;line-height:9.6px">V1</div>
<div class="pill pg" style="left:299.6px;top:33.7px;width:33.2px;height:11.4px;line-height:9.6px">V2</div>
<div class="pill pg" style="left:299.6px;top:54.7px;width:33.2px;height:11.4px;line-height:9.6px">ΔV</div>
<div class="cell" style="left:336.0px;top:8.0px;width:86.0px;height:22.0px;line-height:19px;">983.928mV</div>
<div class="cell" style="left:336.0px;top:29.0px;width:86.0px;height:22.0px;line-height:19px;">1.014V</div>
<div class="cell" style="left:336.0px;top:50.0px;width:86.0px;height:22.0px;line-height:19px;">30.0mV</div>
<div class="box" style="left:575px;top:2px;width:186px;height:24px"></div>
<div style="position:absolute;left:581.5px;top:8.799999999999955px;width:14.7px;height:14.4px;background:#333;color:#fff;font-size:11px;font-weight:bold;line-height:13px;text-align:center">A</div>
<div class="pill pg" style="left:599.8px;top:11.3px;width:30.4px;height:10.9px;line-height:9.1px">C3</div>
<svg style="position:absolute;left:632px;top:6px" width="20" height="20" viewBox="648 608 20 20"><path d="M650.4,623.4H655.2L660.6,612H664.3" stroke="#000" stroke-width="1.8" fill="none"/></svg>
<div class="t" style="left:652.0px;top:7.8px;">1.01V</div>
<div class="box" style="left:765.5px;top:2px;width:230.5px;height:92.5px"></div>
<div class="t" style="left:773.5px;top:7.8px;">100µs/div</div>
<div class="t" style="left:838.0px;top:7.8px;letter-spacing:0.2px">250MS/s</div>
<div class="t" style="left:923.0px;top:7.8px;letter-spacing:0.13px">4.0ns/pt</div>
<div class="t" style="left:773.5px;top:29.0px;color:#00F0FF">Stopped</div>
<div class="t" style="left:773.5px;top:49.6px;">751 acqs</div>
<div class="t" style="left:913.3px;top:49.6px;letter-spacing:0.15px">RL:250k</div>
<div class="t" style="left:773.5px;top:70.6px;">Auto</div>
<div class="t" style="left:815.0px;top:70.6px;letter-spacing:0.12px">January 19, 2016</div>
<div class="t" style="left:940.0px;top:70.6px;color:#1272F2">12:03:13</div>
<svg style="position:absolute;left:972px;top:27px" width="14" height="22" viewBox="0 0 14 22"><rect x="5.3" y="2.5" width="2.6" height="12" fill="#0A0ABE"/><circle cx="6.6" cy="16.3" r="3.4" fill="#0A0ABE"/></svg>
<div class="box" style="left:5px;top:104px;width:566px;height:45.5px"></div>
<div class="pill pg" style="left:14.8px;top:133.1px;width:30.2px;height:10.9px;line-height:9.1px">C3</div>
<div class="t" style="left:53.0px;top:132.2px;">Pk-Pk</div>
<div class="t" style="left:111px;top:111.7px;width:70px;text-align:center">Value</div>
<div class="cell" style="left:111.0px;top:130.0px;width:71.0px;height:19.5px;line-height:17px;">30.4mV</div>
<div class="t" style="left:181px;top:111.7px;width:80px;text-align:center">Mean</div>
<div class="cell" style="left:181.0px;top:130.0px;width:81.0px;height:19.5px;line-height:17px;background:#D9D9D9;">19.171299m</div>
<div class="t" style="left:261px;top:111.7px;width:70px;text-align:center">Min</div>
<div class="cell" style="left:261.0px;top:130.0px;width:71.0px;height:19.5px;line-height:17px;">12.0m</div>
<div class="t" style="left:331px;top:111.7px;width:70px;text-align:center">Max</div>
<div class="cell" style="left:331.0px;top:130.0px;width:71.0px;height:19.5px;line-height:17px;background:#D9D9D9;">31.2m</div>
<div class="t" style="left:401px;top:111.7px;width:70px;text-align:center">St Dev</div>
<div class="cell" style="left:401.0px;top:130.0px;width:71.0px;height:19.5px;line-height:17px;">8.773m</div>
<div class="t" style="left:471px;top:111.7px;width:60px;text-align:center">Count</div>
<div class="cell" style="left:471.0px;top:130.0px;width:61.0px;height:19.5px;line-height:17px;">36.0</div>
<div class="t" style="left:531px;top:111.7px;width:36px;text-align:center">Info</div>
<div class="cell" style="left:531.0px;top:130.0px;width:37.0px;height:19.5px;line-height:17px;"></div>
</div>
</body></html>
